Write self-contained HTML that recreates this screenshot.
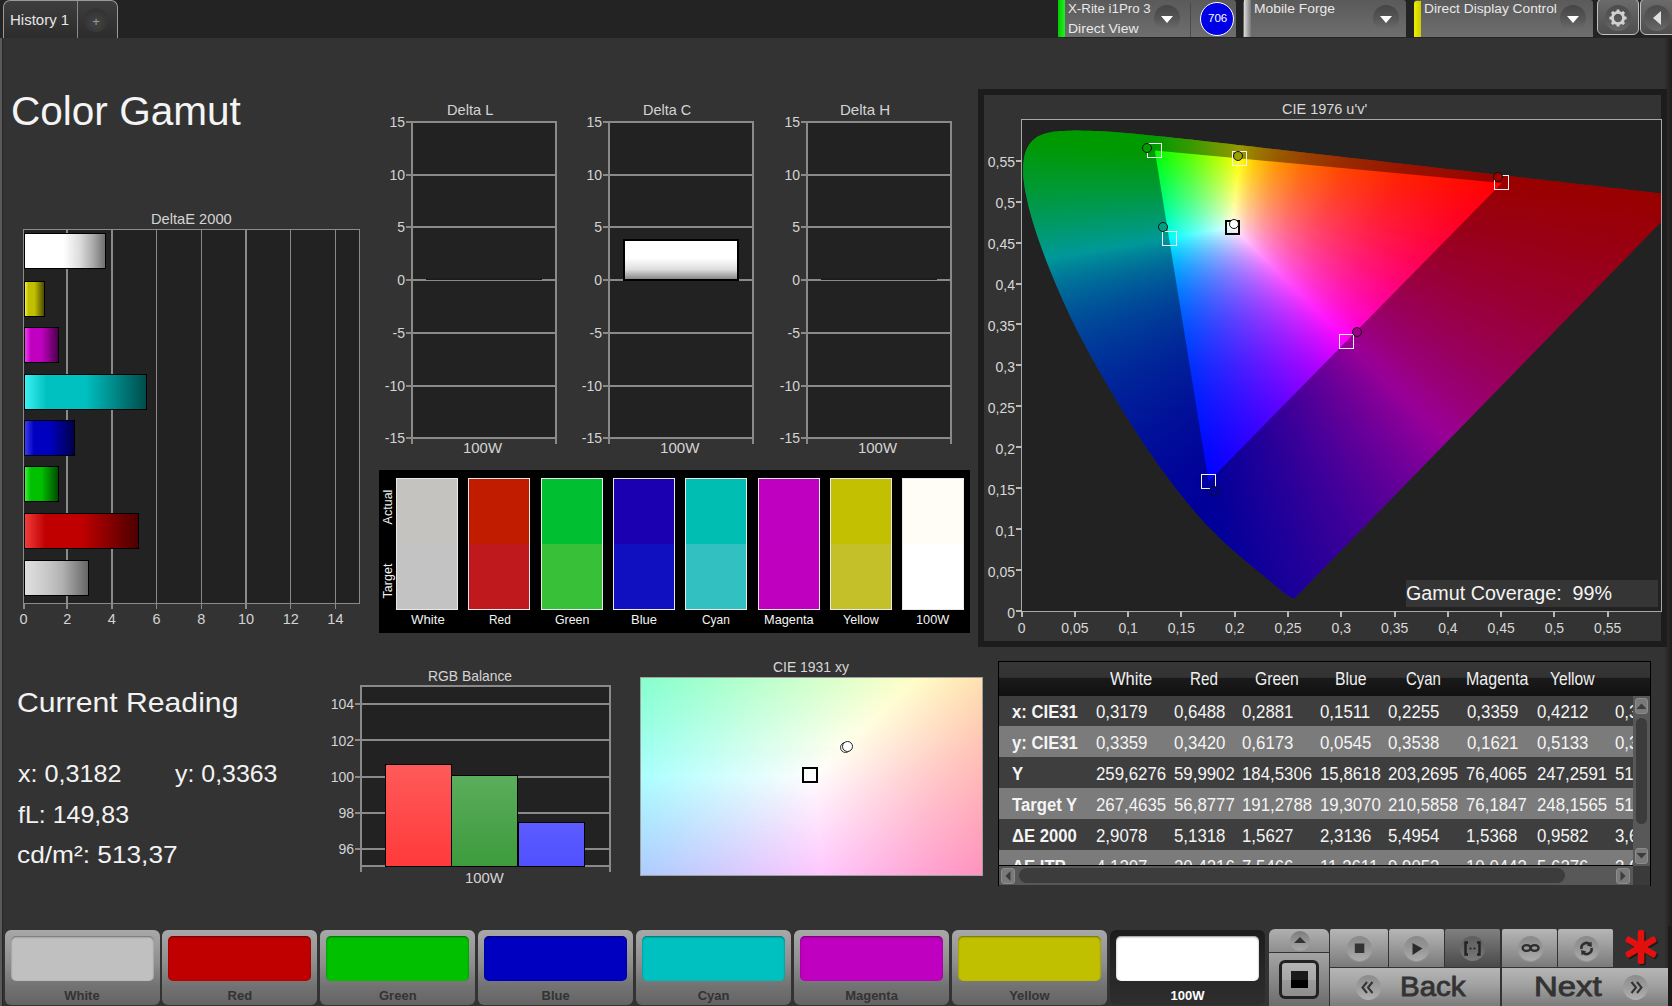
<!DOCTYPE html><html><head><meta charset="utf-8"><style>
*{margin:0;padding:0;box-sizing:border-box}
html,body{width:1672px;height:1006px;overflow:hidden;background:#333;font-family:"Liberation Sans",sans-serif;color:#e8e8e8}
.a{position:absolute}
.t{position:absolute;white-space:nowrap;line-height:1}

.drop{position:absolute;border-radius:3px 3px 0 0;background:linear-gradient(#5a5a5a,#6e6e6e)}
.dd{position:absolute;width:26px;height:26px;border-radius:50%;background:linear-gradient(#454545,#575757 55%,#6e6e6e)}
.dd:after{content:"";position:absolute;left:7px;top:11px;border-left:6px solid transparent;border-right:6px solid transparent;border-top:7px solid #fff}

.bar{position:absolute;border:2px solid #000}

.btn{position:absolute;top:930px;height:75px;border-radius:6px;background:linear-gradient(#a8a8a8 0%,#8e8e8e 45%,#727272 75%,#646464 100%)}
.sw{position:absolute;left:6px;top:6px;right:6px;height:45px;border-radius:5px;box-shadow:inset 0 1px 2px rgba(0,0,0,.45)}
.bl{position:absolute;left:0;right:0;top:59px;text-align:center;font-size:13px;font-weight:bold;color:#333;line-height:1}

.cb{position:absolute;background:linear-gradient(#b4b4b4 0%,#9a9a9a 50%,#7c7c7c 100%)}
.ci{position:absolute;width:25px;height:25px;border-radius:50%;background:linear-gradient(#8a8a8a 0%,#959595 45%,#acacac 100%);box-shadow:0 1px 1px rgba(255,255,255,.15)}
</style></head><body><div class="a" style="left:0px;top:0px;width:1672px;height:38px;background:#232323"></div><div class="a" style="left:0px;top:38px;width:3px;height:968px;background:linear-gradient(90deg,#5a5a5a 0,#5a5a5a 2.5px,#272727 2.5px)"></div><div class="a" style="left:1664px;top:38px;width:8px;height:968px;background:linear-gradient(90deg,rgba(0,0,0,0),rgba(0,0,0,.45))"></div><div class="a" style="left:3px;top:0px;width:115px;height:38px;background:linear-gradient(#3e3e3e,#2c2c2c);border:1px solid #9a9a9a;border-bottom:none;border-radius:7px 7px 0 0"></div><div class="a" style="left:76.5px;top:1px;width:1px;height:37px;background:#8a8a8a"></div><div class="t" style="left:10.27px;top:12.81px;font-size:14.7px;color:#e6e6e6;transform:scaleX(1.0215);transform-origin:0 0;">History 1</div><div class="a" style="left:84px;top:8px;width:24px;height:24px;border-radius:50%;background:radial-gradient(circle at 50% 60%,#444,#333 70%,#3a3a3a)"></div><div class="t" style="top:14.95px;font-size:13px;color:#9a9a9a;left:-304.00px;width:800px;text-align:center;">+</div><div class="drop" style="left:1058px;top:0;width:178px;height:37px"></div><div class="a" style="left:1058px;top:0px;width:7px;height:37px;background:linear-gradient(90deg,#0c0,#2e2)"></div><div class="a" style="left:1190px;top:3px;width:1px;height:34px;background:#4a4a4a"></div><div class="t" style="left:1068.41px;top:3.43px;font-size:12.2px;color:#e8e8e8;transform:scaleX(1.0901);transform-origin:0 0;">X-Rite i1Pro 3</div><div class="t" style="left:1067.95px;top:22.53px;font-size:12.2px;color:#e8e8e8;transform:scaleX(1.1490);transform-origin:0 0;">Direct View</div><div class="dd" style="left:1154px;top:5px"></div><div class="a" style="left:1200px;top:2px;width:34px;height:34px;border-radius:50%;background:#0000e6;border:1px solid #fff"></div><div class="t" style="left:1207.80px;top:13.42px;font-size:10.8px;color:#fff;transform:scaleX(1.0720);transform-origin:0 0;">706</div><div class="drop" style="left:1243px;top:0;width:163px;height:37px"></div><div class="a" style="left:1244px;top:0px;width:7px;height:37px;background:linear-gradient(90deg,#ddd,#777)"></div><div class="t" style="left:1254.16px;top:3.43px;font-size:12.2px;color:#e8e8e8;transform:scaleX(1.1398);transform-origin:0 0;">Mobile Forge</div><div class="dd" style="left:1373px;top:5px"></div><div class="drop" style="left:1414px;top:0;width:179px;height:37px"></div><div class="a" style="left:1414px;top:1px;width:7px;height:36px;background:linear-gradient(90deg,#ee0,#cc0);border-radius:3px 0 0 0"></div><div class="t" style="left:1424.27px;top:3.23px;font-size:12.2px;color:#e8e8e8;transform:scaleX(1.1277);transform-origin:0 0;">Direct Display Control</div><div class="dd" style="left:1560px;top:5px"></div><div class="a" style="left:1597px;top:-2px;width:42px;height:37px;background:linear-gradient(#6c6c6c,#4e4e4e);border:1.5px solid #c0c0c0;border-radius:6px"></div><div class="a" style="left:1605px;top:5px;width:26px;height:26px;border-radius:50%;background:linear-gradient(#4c4c4c,#575757 55%,#686868)"></div><svg class="a" style="left:1608px;top:8px" width="20" height="20" viewBox="-10 -10 20 20"><g fill="#d0d0d0"><rect x="-1.5" y="-8.6" width="3" height="4" rx="0.6" transform="rotate(0)"/><rect x="-1.5" y="-8.6" width="3" height="4" rx="0.6" transform="rotate(45)"/><rect x="-1.5" y="-8.6" width="3" height="4" rx="0.6" transform="rotate(90)"/><rect x="-1.5" y="-8.6" width="3" height="4" rx="0.6" transform="rotate(135)"/><rect x="-1.5" y="-8.6" width="3" height="4" rx="0.6" transform="rotate(180)"/><rect x="-1.5" y="-8.6" width="3" height="4" rx="0.6" transform="rotate(225)"/><rect x="-1.5" y="-8.6" width="3" height="4" rx="0.6" transform="rotate(270)"/><rect x="-1.5" y="-8.6" width="3" height="4" rx="0.6" transform="rotate(315)"/></g><circle r="5.6" fill="none" stroke="#d0d0d0" stroke-width="2.8"/></svg><div class="a" style="left:1640px;top:-2px;width:42px;height:37px;background:linear-gradient(#6c6c6c,#4e4e4e);border:1.5px solid #c0c0c0;border-radius:6px"></div><div class="a" style="left:1644px;top:5px;width:26px;height:26px;border-radius:50%;background:linear-gradient(#4c4c4c,#575757 55%,#686868)"></div><svg class="a" style="left:1650px;top:10px" width="14" height="16"><path d="M11 1 L3 8 L11 15 Z" fill="#e0e0e0"/></svg><div class="t" style="left:10.87px;top:90.70px;font-size:40px;color:#f4f4f4;transform:scaleX(1.0134);transform-origin:0 0;">Color Gamut</div><div class="t" style="left:150.80px;top:212.48px;font-size:14.5px;color:#d4d4d4;transform:scaleX(1.0119);transform-origin:0 0;">DeltaE 2000</div><div class="a" style="left:23px;top:229px;width:337px;height:375px;background:#222222;border:1.5px solid #8a8a8a"></div><div class="a" style="left:66.45px;top:230px;width:1.5px;height:373px;background:#8a8a8a"></div><div class="t" style="top:611.67px;font-size:14.5px;color:#d4d4d4;left:-332.80px;width:800px;text-align:center;">2</div><div class="a" style="left:111.15px;top:230px;width:1.5px;height:373px;background:#8a8a8a"></div><div class="t" style="top:611.67px;font-size:14.5px;color:#d4d4d4;left:-288.10px;width:800px;text-align:center;">4</div><div class="a" style="left:155.85px;top:230px;width:1.5px;height:373px;background:#8a8a8a"></div><div class="t" style="top:611.67px;font-size:14.5px;color:#d4d4d4;left:-243.40px;width:800px;text-align:center;">6</div><div class="a" style="left:200.55px;top:230px;width:1.5px;height:373px;background:#8a8a8a"></div><div class="t" style="top:611.67px;font-size:14.5px;color:#d4d4d4;left:-198.70px;width:800px;text-align:center;">8</div><div class="a" style="left:245.25px;top:230px;width:1.5px;height:373px;background:#8a8a8a"></div><div class="t" style="top:611.67px;font-size:14.5px;color:#d4d4d4;left:-154.00px;width:800px;text-align:center;">10</div><div class="a" style="left:289.95px;top:230px;width:1.5px;height:373px;background:#8a8a8a"></div><div class="t" style="top:611.67px;font-size:14.5px;color:#d4d4d4;left:-109.30px;width:800px;text-align:center;">12</div><div class="a" style="left:334.65px;top:230px;width:1.5px;height:373px;background:#8a8a8a"></div><div class="t" style="top:611.67px;font-size:14.5px;color:#d4d4d4;left:-64.60px;width:800px;text-align:center;">14</div><div class="t" style="top:611.67px;font-size:14.5px;color:#d4d4d4;left:-376.50px;width:800px;text-align:center;">0</div><div class="a" style="left:23px;top:604px;width:1.5px;height:5px;background:#8a8a8a"></div><div class="a" style="left:66.45px;top:604px;width:1.5px;height:5px;background:#8a8a8a"></div><div class="a" style="left:111.15px;top:604px;width:1.5px;height:5px;background:#8a8a8a"></div><div class="a" style="left:155.85px;top:604px;width:1.5px;height:5px;background:#8a8a8a"></div><div class="a" style="left:200.55px;top:604px;width:1.5px;height:5px;background:#8a8a8a"></div><div class="a" style="left:245.25px;top:604px;width:1.5px;height:5px;background:#8a8a8a"></div><div class="a" style="left:289.95px;top:604px;width:1.5px;height:5px;background:#8a8a8a"></div><div class="a" style="left:334.65px;top:604px;width:1.5px;height:5px;background:#8a8a8a"></div><div class="bar" style="left:24px;top:233px;width:81.5px;height:36px;background:linear-gradient(90deg,#fff 0%,#fff 48%,#ddd 68%,#aaa 85%,#707070 100%);border-width:1.5px"></div><div class="bar" style="left:24px;top:281px;width:20.5px;height:36px;background:linear-gradient(90deg,#f1f13c 0%,#c0c000 18%,#c0c000 50%,#4c4c00 100%);border-width:1.5px"></div><div class="bar" style="left:24px;top:327px;width:34.5px;height:36px;background:linear-gradient(90deg,#f13cf1 0%,#c000c0 18%,#c000c0 50%,#4c004c 100%);border-width:1.5px"></div><div class="bar" style="left:24px;top:374px;width:122.5px;height:36px;background:linear-gradient(90deg,#3cf1f1 0%,#00c0c0 18%,#00c0c0 50%,#004c4c 100%);border-width:1.5px"></div><div class="bar" style="left:24px;top:420px;width:51.0px;height:36px;background:linear-gradient(90deg,#3c3cf1 0%,#0000c0 18%,#0000c0 50%,#00004c 100%);border-width:1.5px"></div><div class="bar" style="left:24px;top:466px;width:34.5px;height:36px;background:linear-gradient(90deg,#3cf13c 0%,#00c000 18%,#00c000 50%,#004c00 100%);border-width:1.5px"></div><div class="bar" style="left:24px;top:513px;width:114.5px;height:36px;background:linear-gradient(90deg,#f13c3c 0%,#c00000 18%,#c00000 50%,#4c0000 100%);border-width:1.5px"></div><div class="bar" style="left:24px;top:560px;width:64.5px;height:36px;background:linear-gradient(90deg,#e0e0e0 0%,#c4c4c4 40%,#b0b0b0 60%,#666 100%);border-width:1.5px"></div><div class="t" style="left:447.00px;top:103.38px;font-size:14.5px;color:#d4d4d4;transform:scaleX(1.0072);transform-origin:0 0;">Delta L</div><div class="a" style="left:411px;top:121px;width:146px;height:318px;background:#222222;border:2px solid #8a8a8a"></div><div class="a" style="left:406px;top:121px;width:5px;height:2px;background:#8a8a8a"></div><div class="t" style="top:114.60px;font-size:14px;color:#d4d4d4;left:-395.00px;width:800px;text-align:right;">15</div><div class="a" style="left:413px;top:174px;width:142px;height:2px;background:#8a8a8a"></div><div class="a" style="left:406px;top:174px;width:5px;height:2px;background:#8a8a8a"></div><div class="t" style="top:168.10px;font-size:14px;color:#d4d4d4;left:-395.00px;width:800px;text-align:right;">10</div><div class="a" style="left:413px;top:226px;width:142px;height:2px;background:#8a8a8a"></div><div class="a" style="left:406px;top:226px;width:5px;height:2px;background:#8a8a8a"></div><div class="t" style="top:219.90px;font-size:14px;color:#d4d4d4;left:-395.00px;width:800px;text-align:right;">5</div><div class="a" style="left:413px;top:279px;width:142px;height:2px;background:#8a8a8a"></div><div class="a" style="left:406px;top:279px;width:5px;height:2px;background:#8a8a8a"></div><div class="t" style="top:272.70px;font-size:14px;color:#d4d4d4;left:-395.00px;width:800px;text-align:right;">0</div><div class="a" style="left:413px;top:332px;width:142px;height:2px;background:#8a8a8a"></div><div class="a" style="left:406px;top:332px;width:5px;height:2px;background:#8a8a8a"></div><div class="t" style="top:326.10px;font-size:14px;color:#d4d4d4;left:-395.00px;width:800px;text-align:right;">-5</div><div class="a" style="left:413px;top:385px;width:142px;height:2px;background:#8a8a8a"></div><div class="a" style="left:406px;top:385px;width:5px;height:2px;background:#8a8a8a"></div><div class="t" style="top:379.30px;font-size:14px;color:#d4d4d4;left:-395.00px;width:800px;text-align:right;">-10</div><div class="a" style="left:406px;top:437px;width:5px;height:2px;background:#8a8a8a"></div><div class="t" style="top:430.70px;font-size:14px;color:#d4d4d4;left:-395.00px;width:800px;text-align:right;">-15</div><div class="a" style="left:411px;top:439px;width:2px;height:5px;background:#8a8a8a"></div><div class="a" style="left:555px;top:439px;width:2px;height:5px;background:#8a8a8a"></div><div class="t" style="left:463.27px;top:441.07px;font-size:14.5px;color:#d4d4d4;transform:scaleX(1.0296);transform-origin:0 0;">100W</div><div class="a" style="left:426px;top:278px;width:116px;height:2px;background:#1c1c1c"></div><div class="t" style="left:643.42px;top:103.38px;font-size:14.5px;color:#d4d4d4;transform:scaleX(0.9956);transform-origin:0 0;">Delta C</div><div class="a" style="left:608px;top:121px;width:146px;height:318px;background:#222222;border:2px solid #8a8a8a"></div><div class="a" style="left:603px;top:121px;width:5px;height:2px;background:#8a8a8a"></div><div class="t" style="top:114.60px;font-size:14px;color:#d4d4d4;left:-198.00px;width:800px;text-align:right;">15</div><div class="a" style="left:610px;top:174px;width:142px;height:2px;background:#8a8a8a"></div><div class="a" style="left:603px;top:174px;width:5px;height:2px;background:#8a8a8a"></div><div class="t" style="top:168.10px;font-size:14px;color:#d4d4d4;left:-198.00px;width:800px;text-align:right;">10</div><div class="a" style="left:610px;top:226px;width:142px;height:2px;background:#8a8a8a"></div><div class="a" style="left:603px;top:226px;width:5px;height:2px;background:#8a8a8a"></div><div class="t" style="top:219.90px;font-size:14px;color:#d4d4d4;left:-198.00px;width:800px;text-align:right;">5</div><div class="a" style="left:610px;top:279px;width:142px;height:2px;background:#8a8a8a"></div><div class="a" style="left:603px;top:279px;width:5px;height:2px;background:#8a8a8a"></div><div class="t" style="top:272.70px;font-size:14px;color:#d4d4d4;left:-198.00px;width:800px;text-align:right;">0</div><div class="a" style="left:610px;top:332px;width:142px;height:2px;background:#8a8a8a"></div><div class="a" style="left:603px;top:332px;width:5px;height:2px;background:#8a8a8a"></div><div class="t" style="top:326.10px;font-size:14px;color:#d4d4d4;left:-198.00px;width:800px;text-align:right;">-5</div><div class="a" style="left:610px;top:385px;width:142px;height:2px;background:#8a8a8a"></div><div class="a" style="left:603px;top:385px;width:5px;height:2px;background:#8a8a8a"></div><div class="t" style="top:379.30px;font-size:14px;color:#d4d4d4;left:-198.00px;width:800px;text-align:right;">-10</div><div class="a" style="left:603px;top:437px;width:5px;height:2px;background:#8a8a8a"></div><div class="t" style="top:430.70px;font-size:14px;color:#d4d4d4;left:-198.00px;width:800px;text-align:right;">-15</div><div class="a" style="left:608px;top:439px;width:2px;height:5px;background:#8a8a8a"></div><div class="a" style="left:752px;top:439px;width:2px;height:5px;background:#8a8a8a"></div><div class="t" style="left:660.45px;top:441.07px;font-size:14.5px;color:#d4d4d4;transform:scaleX(1.0405);transform-origin:0 0;">100W</div><div class="a" style="left:623px;top:239px;width:116px;height:42px;border:2px solid #000;background:linear-gradient(#fff 0%,#fff 45%,#ddd 75%,#888 100%)"></div><div class="t" style="left:839.77px;top:103.38px;font-size:14.5px;color:#d4d4d4;transform:scaleX(1.0377);transform-origin:0 0;">Delta H</div><div class="a" style="left:806px;top:121px;width:146px;height:318px;background:#222222;border:2px solid #8a8a8a"></div><div class="a" style="left:801px;top:121px;width:5px;height:2px;background:#8a8a8a"></div><div class="t" style="top:114.60px;font-size:14px;color:#d4d4d4;left:0.00px;width:800px;text-align:right;">15</div><div class="a" style="left:808px;top:174px;width:142px;height:2px;background:#8a8a8a"></div><div class="a" style="left:801px;top:174px;width:5px;height:2px;background:#8a8a8a"></div><div class="t" style="top:168.10px;font-size:14px;color:#d4d4d4;left:0.00px;width:800px;text-align:right;">10</div><div class="a" style="left:808px;top:226px;width:142px;height:2px;background:#8a8a8a"></div><div class="a" style="left:801px;top:226px;width:5px;height:2px;background:#8a8a8a"></div><div class="t" style="top:219.90px;font-size:14px;color:#d4d4d4;left:0.00px;width:800px;text-align:right;">5</div><div class="a" style="left:808px;top:279px;width:142px;height:2px;background:#8a8a8a"></div><div class="a" style="left:801px;top:279px;width:5px;height:2px;background:#8a8a8a"></div><div class="t" style="top:272.70px;font-size:14px;color:#d4d4d4;left:0.00px;width:800px;text-align:right;">0</div><div class="a" style="left:808px;top:332px;width:142px;height:2px;background:#8a8a8a"></div><div class="a" style="left:801px;top:332px;width:5px;height:2px;background:#8a8a8a"></div><div class="t" style="top:326.10px;font-size:14px;color:#d4d4d4;left:0.00px;width:800px;text-align:right;">-5</div><div class="a" style="left:808px;top:385px;width:142px;height:2px;background:#8a8a8a"></div><div class="a" style="left:801px;top:385px;width:5px;height:2px;background:#8a8a8a"></div><div class="t" style="top:379.30px;font-size:14px;color:#d4d4d4;left:0.00px;width:800px;text-align:right;">-10</div><div class="a" style="left:801px;top:437px;width:5px;height:2px;background:#8a8a8a"></div><div class="t" style="top:430.70px;font-size:14px;color:#d4d4d4;left:0.00px;width:800px;text-align:right;">-15</div><div class="a" style="left:806px;top:439px;width:2px;height:5px;background:#8a8a8a"></div><div class="a" style="left:950px;top:439px;width:2px;height:5px;background:#8a8a8a"></div><div class="t" style="left:858.07px;top:441.07px;font-size:14.5px;color:#d4d4d4;transform:scaleX(1.0296);transform-origin:0 0;">100W</div><div class="a" style="left:821px;top:278px;width:116px;height:2px;background:#1c1c1c"></div><div class="a" style="left:379px;top:470px;width:591px;height:163px;background:#000"></div><div class="a" style="left:396.0px;top:478px;width:62px;height:132px;border:1px solid #e8e8e8;background:linear-gradient(#c4c3bf 0,#c4c3bf 50%,#c3c3c3 50%,#c3c3c3 100%)"></div><div class="t" style="left:410.85px;top:613.42px;font-size:13.5px;color:#f4f4f4;transform:scaleX(0.9776);transform-origin:0 0;">White</div><div class="a" style="left:468.3px;top:478px;width:62px;height:132px;border:1px solid #e8e8e8;background:linear-gradient(#c21c00 0,#c21c00 50%,#bf191e 50%,#bf191e 100%)"></div><div class="t" style="left:488.73px;top:613.42px;font-size:13.5px;color:#f4f4f4;transform:scaleX(0.8777);transform-origin:0 0;">Red</div><div class="a" style="left:540.6px;top:478px;width:62px;height:132px;border:1px solid #e8e8e8;background:linear-gradient(#00bf30 0,#00bf30 50%,#39c039 50%,#39c039 100%)"></div><div class="t" style="left:554.68px;top:613.42px;font-size:13.5px;color:#f4f4f4;transform:scaleX(0.9141);transform-origin:0 0;">Green</div><div class="a" style="left:612.9px;top:478px;width:62px;height:132px;border:1px solid #e8e8e8;background:linear-gradient(#1a00b0 0,#1a00b0 50%,#1010c0 50%,#1010c0 100%)"></div><div class="t" style="left:630.93px;top:613.42px;font-size:13.5px;color:#f4f4f4;transform:scaleX(0.9634);transform-origin:0 0;">Blue</div><div class="a" style="left:685.2px;top:478px;width:62px;height:132px;border:1px solid #e8e8e8;background:linear-gradient(#00bfb2 0,#00bfb2 50%,#33c0c0 50%,#33c0c0 100%)"></div><div class="t" style="left:702.41px;top:613.42px;font-size:13.5px;color:#f4f4f4;transform:scaleX(0.8809);transform-origin:0 0;">Cyan</div><div class="a" style="left:757.5px;top:478px;width:62px;height:132px;border:1px solid #e8e8e8;background:linear-gradient(#c000c0 0,#c000c0 50%,#bf00bf 50%,#bf00bf 100%)"></div><div class="t" style="left:763.65px;top:613.42px;font-size:13.5px;color:#f4f4f4;transform:scaleX(0.9449);transform-origin:0 0;">Magenta</div><div class="a" style="left:829.8px;top:478px;width:62px;height:132px;border:1px solid #e8e8e8;background:linear-gradient(#c2c000 0,#c2c000 50%,#c4c02a 50%,#c4c02a 100%)"></div><div class="t" style="left:843.33px;top:613.42px;font-size:13.5px;color:#f4f4f4;transform:scaleX(0.9253);transform-origin:0 0;">Yellow</div><div class="a" style="left:902.1px;top:478px;width:62px;height:132px;border:1px solid #e8e8e8;background:linear-gradient(#fffdf5 0,#fffdf5 50%,#ffffff 50%,#ffffff 100%)"></div><div class="t" style="left:916.23px;top:613.42px;font-size:13.5px;color:#f4f4f4;transform:scaleX(0.9420);transform-origin:0 0;">100W</div><div class="t" style="left:288px;top:500.5px;width:200px;height:12px;font-size:12.5px;text-align:center;color:#f0f0f0;transform:rotate(-90deg)">Actual</div><div class="t" style="left:288px;top:575px;width:200px;height:12px;font-size:12.5px;text-align:center;color:#f0f0f0;transform:rotate(-90deg)">Target</div><div class="t" style="left:17.49px;top:688.38px;font-size:28.5px;color:#f2f2f2;transform:scaleX(1.0588);transform-origin:0 0;">Current Reading</div><div class="t" style="left:17.70px;top:761.77px;font-size:24.5px;color:#f2f2f2;transform:scaleX(1.0275);transform-origin:0 0;">x: 0,3182</div><div class="t" style="left:174.95px;top:761.77px;font-size:24.5px;color:#f2f2f2;transform:scaleX(1.0164);transform-origin:0 0;">y: 0,3363</div><div class="t" style="left:18.05px;top:802.88px;font-size:24.5px;color:#f2f2f2;transform:scaleX(1.0190);transform-origin:0 0;">fL: 149,83</div><div class="t" style="left:17.30px;top:843.07px;font-size:24.5px;color:#f2f2f2;transform:scaleX(1.0723);transform-origin:0 0;">cd/m²: 513,37</div><div class="t" style="left:428.16px;top:668.67px;font-size:14.5px;color:#d4d4d4;transform:scaleX(0.9568);transform-origin:0 0;">RGB Balance</div><div class="a" style="left:360px;top:685px;width:251px;height:182px;background:#222222;border:2px solid #8a8a8a"></div><div class="a" style="left:362px;top:703px;width:247px;height:2px;background:#8a8a8a"></div><div class="a" style="left:355px;top:703px;width:5px;height:2px;background:#8a8a8a"></div><div class="t" style="top:697.20px;font-size:14px;color:#d4d4d4;left:-446.00px;width:800px;text-align:right;">104</div><div class="a" style="left:362px;top:739px;width:247px;height:2px;background:#8a8a8a"></div><div class="a" style="left:355px;top:739px;width:5px;height:2px;background:#8a8a8a"></div><div class="t" style="top:733.50px;font-size:14px;color:#d4d4d4;left:-446.00px;width:800px;text-align:right;">102</div><div class="a" style="left:362px;top:776px;width:247px;height:2px;background:#8a8a8a"></div><div class="a" style="left:355px;top:776px;width:5px;height:2px;background:#8a8a8a"></div><div class="t" style="top:769.80px;font-size:14px;color:#d4d4d4;left:-446.00px;width:800px;text-align:right;">100</div><div class="a" style="left:362px;top:812px;width:247px;height:2px;background:#8a8a8a"></div><div class="a" style="left:355px;top:812px;width:5px;height:2px;background:#8a8a8a"></div><div class="t" style="top:806.10px;font-size:14px;color:#d4d4d4;left:-446.00px;width:800px;text-align:right;">98</div><div class="a" style="left:362px;top:848px;width:247px;height:2px;background:#8a8a8a"></div><div class="a" style="left:355px;top:848px;width:5px;height:2px;background:#8a8a8a"></div><div class="t" style="top:842.40px;font-size:14px;color:#d4d4d4;left:-446.00px;width:800px;text-align:right;">96</div><div class="a" style="left:360px;top:867px;width:2px;height:5px;background:#8a8a8a"></div><div class="a" style="left:609px;top:867px;width:2px;height:5px;background:#8a8a8a"></div><div class="t" style="left:465.27px;top:870.67px;font-size:14.5px;color:#d4d4d4;transform:scaleX(1.0241);transform-origin:0 0;">100W</div><div class="bar" style="left:384.5px;top:763.5px;width:67px;height:103px;border-width:1.5px;background:linear-gradient(#ff5a5a,#ff3a3a)"></div><div class="bar" style="left:450.5px;top:774.5px;width:67px;height:92px;border-width:1.5px;background:linear-gradient(#5bad5b,#3d9b3d)"></div><div class="bar" style="left:517.5px;top:821.5px;width:67px;height:45px;border-width:1.5px;background:linear-gradient(#5c5cff,#5050ff)"></div><div class="a" style="left:978px;top:89px;width:689px;height:558px;border:6px solid #1c1c1c;background:#333"></div><div class="t" style="left:1282.08px;top:101.88px;font-size:14.5px;color:#d8d8d8;transform:scaleX(0.9980);transform-origin:0 0;">CIE 1976 u'v'</div><svg class="a" style="left:1022px;top:120px" width="639" height="491" shape-rendering="crispEdges"><defs><linearGradient id="g0" gradientUnits="userSpaceOnUse" x1="0" x2="639"><stop offset="0.0008" stop-color="#00ff00"/><stop offset="0.2011" stop-color="#01ff00"/><stop offset="0.2637" stop-color="#60ff00"/><stop offset="0.3169" stop-color="#c3ff00"/><stop offset="0.3451" stop-color="#ffff00"/><stop offset="0.3732" stop-color="#ffc900"/><stop offset="0.4108" stop-color="#ff9800"/><stop offset="0.4624" stop-color="#ff6c00"/><stop offset="0.5360" stop-color="#ff4400"/><stop offset="0.6455" stop-color="#ff2100"/><stop offset="0.8208" stop-color="#ff0300"/><stop offset="0.9710" stop-color="#ff0000"/><stop offset="0.9992" stop-color="#ff0000"/></linearGradient><linearGradient id="g1" gradientUnits="userSpaceOnUse" x1="0" x2="639"><stop offset="0.0008" stop-color="#00ff00"/><stop offset="0.2027" stop-color="#02ff00"/><stop offset="0.2653" stop-color="#62ff00"/><stop offset="0.3185" stop-color="#c6ff00"/><stop offset="0.3451" stop-color="#fffe00"/><stop offset="0.3732" stop-color="#ffc900"/><stop offset="0.4108" stop-color="#ff9800"/><stop offset="0.4624" stop-color="#ff6b00"/><stop offset="0.5360" stop-color="#ff4300"/><stop offset="0.6455" stop-color="#ff2100"/><stop offset="0.8208" stop-color="#ff0300"/><stop offset="0.9992" stop-color="#ff0000"/></linearGradient><linearGradient id="g2" gradientUnits="userSpaceOnUse" x1="0" x2="639"><stop offset="0.0008" stop-color="#00ff00"/><stop offset="0.2027" stop-color="#02ff00"/><stop offset="0.2653" stop-color="#62ff00"/><stop offset="0.3185" stop-color="#c6ff00"/><stop offset="0.3451" stop-color="#fffd00"/><stop offset="0.3732" stop-color="#ffc800"/><stop offset="0.4108" stop-color="#ff9700"/><stop offset="0.4624" stop-color="#ff6a00"/><stop offset="0.5360" stop-color="#ff4300"/><stop offset="0.6455" stop-color="#ff2000"/><stop offset="0.8208" stop-color="#ff0200"/><stop offset="0.9992" stop-color="#ff0000"/></linearGradient><linearGradient id="g3" gradientUnits="userSpaceOnUse" x1="0" x2="639"><stop offset="0.0008" stop-color="#00ff00"/><stop offset="0.2027" stop-color="#01ff00"/><stop offset="0.2637" stop-color="#5fff00"/><stop offset="0.3169" stop-color="#c3ff00"/><stop offset="0.3451" stop-color="#fffd00"/><stop offset="0.3732" stop-color="#ffc700"/><stop offset="0.4108" stop-color="#ff9600"/><stop offset="0.4624" stop-color="#ff6a00"/><stop offset="0.5360" stop-color="#ff4200"/><stop offset="0.6455" stop-color="#ff2000"/><stop offset="0.8208" stop-color="#ff0200"/><stop offset="0.9992" stop-color="#ff0000"/></linearGradient><linearGradient id="g4" gradientUnits="userSpaceOnUse" x1="0" x2="639"><stop offset="0.0008" stop-color="#00ff00"/><stop offset="0.2027" stop-color="#00ff00"/><stop offset="0.2637" stop-color="#5fff00"/><stop offset="0.3169" stop-color="#c4ff00"/><stop offset="0.3435" stop-color="#feff00"/><stop offset="0.3732" stop-color="#ffc600"/><stop offset="0.4108" stop-color="#ff9500"/><stop offset="0.4624" stop-color="#ff6900"/><stop offset="0.5360" stop-color="#ff4200"/><stop offset="0.6471" stop-color="#ff1f00"/><stop offset="0.8239" stop-color="#ff0100"/><stop offset="0.9992" stop-color="#ff0000"/></linearGradient><linearGradient id="g5" gradientUnits="userSpaceOnUse" x1="0" x2="639"><stop offset="0.0008" stop-color="#00ff00"/><stop offset="0.2042" stop-color="#02ff00"/><stop offset="0.2653" stop-color="#61ff00"/><stop offset="0.3169" stop-color="#c4ff00"/><stop offset="0.3435" stop-color="#ffff00"/><stop offset="0.3717" stop-color="#ffc800"/><stop offset="0.4092" stop-color="#ff9600"/><stop offset="0.4609" stop-color="#ff6a00"/><stop offset="0.5344" stop-color="#ff4200"/><stop offset="0.6440" stop-color="#ff1f00"/><stop offset="0.8192" stop-color="#ff0100"/><stop offset="0.9992" stop-color="#ff0000"/></linearGradient><linearGradient id="g6" gradientUnits="userSpaceOnUse" x1="0" x2="639"><stop offset="0.0008" stop-color="#00ff00"/><stop offset="0.2042" stop-color="#01ff00"/><stop offset="0.2653" stop-color="#61ff00"/><stop offset="0.3169" stop-color="#c4ff00"/><stop offset="0.3435" stop-color="#fffe00"/><stop offset="0.3701" stop-color="#ffca00"/><stop offset="0.4061" stop-color="#ff9900"/><stop offset="0.4562" stop-color="#ff6c00"/><stop offset="0.5266" stop-color="#ff4500"/><stop offset="0.6315" stop-color="#ff2200"/><stop offset="0.7989" stop-color="#ff0400"/><stop offset="0.8959" stop-color="#ff0000"/><stop offset="0.9992" stop-color="#ff0000"/></linearGradient><linearGradient id="g7" gradientUnits="userSpaceOnUse" x1="0" x2="639"><stop offset="0.0008" stop-color="#00ff00"/><stop offset="0.2042" stop-color="#00ff00"/><stop offset="0.2653" stop-color="#61ff00"/><stop offset="0.3169" stop-color="#c5ff00"/><stop offset="0.3435" stop-color="#fffe00"/><stop offset="0.3701" stop-color="#ffc900"/><stop offset="0.4061" stop-color="#ff9800"/><stop offset="0.4562" stop-color="#ff6c00"/><stop offset="0.5266" stop-color="#ff4400"/><stop offset="0.6330" stop-color="#ff2100"/><stop offset="0.8020" stop-color="#ff0300"/><stop offset="0.9992" stop-color="#ff0000"/></linearGradient><linearGradient id="g8" gradientUnits="userSpaceOnUse" x1="0" x2="639"><stop offset="0.0008" stop-color="#00ff00"/><stop offset="0.2058" stop-color="#02ff00"/><stop offset="0.2653" stop-color="#61ff00"/><stop offset="0.3169" stop-color="#c5ff00"/><stop offset="0.3435" stop-color="#fffd00"/><stop offset="0.3701" stop-color="#ffc900"/><stop offset="0.4061" stop-color="#ff9800"/><stop offset="0.4562" stop-color="#ff6b00"/><stop offset="0.5266" stop-color="#ff4300"/><stop offset="0.6330" stop-color="#ff2000"/><stop offset="0.8020" stop-color="#ff0200"/><stop offset="0.9992" stop-color="#ff0000"/></linearGradient><linearGradient id="g9" gradientUnits="userSpaceOnUse" x1="0" x2="639"><stop offset="0.0008" stop-color="#00ff01"/><stop offset="0.2058" stop-color="#01ff00"/><stop offset="0.2653" stop-color="#60ff00"/><stop offset="0.3169" stop-color="#c5ff00"/><stop offset="0.3419" stop-color="#feff00"/><stop offset="0.3717" stop-color="#ffc500"/><stop offset="0.4077" stop-color="#ff9500"/><stop offset="0.4577" stop-color="#ff6900"/><stop offset="0.5297" stop-color="#ff4100"/><stop offset="0.6377" stop-color="#ff1f00"/><stop offset="0.8099" stop-color="#ff0100"/><stop offset="0.9992" stop-color="#ff0000"/></linearGradient><linearGradient id="g10" gradientUnits="userSpaceOnUse" x1="0" x2="639"><stop offset="0.0008" stop-color="#00ff05"/><stop offset="0.1088" stop-color="#00ff00"/><stop offset="0.2058" stop-color="#01ff00"/><stop offset="0.2653" stop-color="#60ff00"/><stop offset="0.3169" stop-color="#c6ff00"/><stop offset="0.3419" stop-color="#ffff00"/><stop offset="0.3685" stop-color="#ffca00"/><stop offset="0.4045" stop-color="#ff9800"/><stop offset="0.4531" stop-color="#ff6c00"/><stop offset="0.5219" stop-color="#ff4400"/><stop offset="0.6252" stop-color="#ff2100"/><stop offset="0.7895" stop-color="#ff0300"/><stop offset="0.8991" stop-color="#ff0000"/><stop offset="0.9992" stop-color="#ff0000"/></linearGradient><linearGradient id="g11" gradientUnits="userSpaceOnUse" x1="0" x2="639"><stop offset="0.0008" stop-color="#00ff08"/><stop offset="0.1197" stop-color="#00ff00"/><stop offset="0.2074" stop-color="#02ff00"/><stop offset="0.2668" stop-color="#63ff00"/><stop offset="0.3169" stop-color="#c6ff00"/><stop offset="0.3419" stop-color="#ffff00"/><stop offset="0.3685" stop-color="#ffc900"/><stop offset="0.4045" stop-color="#ff9700"/><stop offset="0.4531" stop-color="#ff6b00"/><stop offset="0.5219" stop-color="#ff4400"/><stop offset="0.6252" stop-color="#ff2100"/><stop offset="0.7895" stop-color="#ff0300"/><stop offset="0.9554" stop-color="#ff0000"/><stop offset="0.9992" stop-color="#ff0000"/></linearGradient><linearGradient id="g12" gradientUnits="userSpaceOnUse" x1="0" x2="639"><stop offset="0.0008" stop-color="#00ff0b"/><stop offset="0.1495" stop-color="#00ff00"/><stop offset="0.2074" stop-color="#01ff00"/><stop offset="0.2653" stop-color="#60ff00"/><stop offset="0.3153" stop-color="#c3ff00"/><stop offset="0.3419" stop-color="#fffe00"/><stop offset="0.3685" stop-color="#ffc800"/><stop offset="0.4045" stop-color="#ff9600"/><stop offset="0.4531" stop-color="#ff6a00"/><stop offset="0.5219" stop-color="#ff4300"/><stop offset="0.6252" stop-color="#ff2000"/><stop offset="0.7895" stop-color="#ff0300"/><stop offset="0.9992" stop-color="#ff0000"/></linearGradient><linearGradient id="g13" gradientUnits="userSpaceOnUse" x1="0" x2="639"><stop offset="0.0008" stop-color="#00ff0e"/><stop offset="0.1808" stop-color="#00ff00"/><stop offset="0.2074" stop-color="#01ff00"/><stop offset="0.2653" stop-color="#5fff00"/><stop offset="0.3153" stop-color="#c3ff00"/><stop offset="0.3419" stop-color="#fffd00"/><stop offset="0.3685" stop-color="#ffc700"/><stop offset="0.4045" stop-color="#ff9600"/><stop offset="0.4531" stop-color="#ff6a00"/><stop offset="0.5219" stop-color="#ff4200"/><stop offset="0.6252" stop-color="#ff2000"/><stop offset="0.7911" stop-color="#ff0200"/><stop offset="0.9992" stop-color="#ff0000"/></linearGradient><linearGradient id="g14" gradientUnits="userSpaceOnUse" x1="0" x2="639"><stop offset="0.0008" stop-color="#00ff11"/><stop offset="0.2089" stop-color="#02ff00"/><stop offset="0.2668" stop-color="#62ff00"/><stop offset="0.3169" stop-color="#c7ff00"/><stop offset="0.3419" stop-color="#fffc00"/><stop offset="0.3685" stop-color="#ffc700"/><stop offset="0.4030" stop-color="#ff9700"/><stop offset="0.4515" stop-color="#ff6a00"/><stop offset="0.5203" stop-color="#ff4300"/><stop offset="0.6236" stop-color="#ff2000"/><stop offset="0.7879" stop-color="#ff0200"/><stop offset="0.9992" stop-color="#ff0000"/></linearGradient><linearGradient id="g15" gradientUnits="userSpaceOnUse" x1="0" x2="639"><stop offset="0.0008" stop-color="#00ff15"/><stop offset="0.2089" stop-color="#01ff01"/><stop offset="0.2668" stop-color="#62ff00"/><stop offset="0.3153" stop-color="#c4ff00"/><stop offset="0.3404" stop-color="#ffff00"/><stop offset="0.3670" stop-color="#ffc800"/><stop offset="0.4014" stop-color="#ff9800"/><stop offset="0.4484" stop-color="#ff6c00"/><stop offset="0.5156" stop-color="#ff4400"/><stop offset="0.6158" stop-color="#ff2100"/><stop offset="0.7754" stop-color="#ff0300"/><stop offset="0.8865" stop-color="#ff0000"/><stop offset="0.9992" stop-color="#ff0000"/></linearGradient><linearGradient id="g16" gradientUnits="userSpaceOnUse" x1="0" x2="639"><stop offset="0.0008" stop-color="#00ff18"/><stop offset="0.2089" stop-color="#01ff05"/><stop offset="0.2653" stop-color="#5eff00"/><stop offset="0.3138" stop-color="#c1ff00"/><stop offset="0.3404" stop-color="#ffff00"/><stop offset="0.3654" stop-color="#ffca00"/><stop offset="0.3998" stop-color="#ff9900"/><stop offset="0.4468" stop-color="#ff6c00"/><stop offset="0.5141" stop-color="#ff4400"/><stop offset="0.6142" stop-color="#ff2100"/><stop offset="0.7739" stop-color="#ff0300"/><stop offset="0.9053" stop-color="#ff0000"/><stop offset="0.9992" stop-color="#ff0000"/></linearGradient><linearGradient id="g17" gradientUnits="userSpaceOnUse" x1="0" x2="639"><stop offset="0.0008" stop-color="#00ff1b"/><stop offset="0.2105" stop-color="#02ff0a"/><stop offset="0.2668" stop-color="#61ff02"/><stop offset="0.3153" stop-color="#c4ff00"/><stop offset="0.3404" stop-color="#fffe00"/><stop offset="0.3654" stop-color="#ffca00"/><stop offset="0.3998" stop-color="#ff9800"/><stop offset="0.4468" stop-color="#ff6b00"/><stop offset="0.5141" stop-color="#ff4400"/><stop offset="0.6142" stop-color="#ff2100"/><stop offset="0.7739" stop-color="#ff0300"/><stop offset="0.9992" stop-color="#ff0000"/></linearGradient><linearGradient id="g18" gradientUnits="userSpaceOnUse" x1="0" x2="639"><stop offset="0.0008" stop-color="#00ff1f"/><stop offset="0.2105" stop-color="#02ff0e"/><stop offset="0.2668" stop-color="#61ff07"/><stop offset="0.3153" stop-color="#c5ff00"/><stop offset="0.3404" stop-color="#fffd00"/><stop offset="0.3654" stop-color="#ffc900"/><stop offset="0.3998" stop-color="#ff9700"/><stop offset="0.4468" stop-color="#ff6b00"/><stop offset="0.5141" stop-color="#ff4300"/><stop offset="0.6142" stop-color="#ff2000"/><stop offset="0.7739" stop-color="#ff0200"/><stop offset="0.9992" stop-color="#ff0000"/></linearGradient><linearGradient id="g19" gradientUnits="userSpaceOnUse" x1="0" x2="639"><stop offset="0.0008" stop-color="#00ff22"/><stop offset="0.2105" stop-color="#01ff13"/><stop offset="0.2668" stop-color="#60ff0c"/><stop offset="0.3153" stop-color="#c5ff06"/><stop offset="0.3404" stop-color="#fffd02"/><stop offset="0.3654" stop-color="#ffc800"/><stop offset="0.3998" stop-color="#ff9600"/><stop offset="0.4468" stop-color="#ff6a00"/><stop offset="0.5141" stop-color="#ff4200"/><stop offset="0.6142" stop-color="#ff2000"/><stop offset="0.7739" stop-color="#ff0200"/><stop offset="0.9992" stop-color="#ff0000"/></linearGradient><linearGradient id="g20" gradientUnits="userSpaceOnUse" x1="0" x2="639"><stop offset="0.0008" stop-color="#00ff26"/><stop offset="0.2121" stop-color="#02ff17"/><stop offset="0.2684" stop-color="#63ff11"/><stop offset="0.3153" stop-color="#c5ff0b"/><stop offset="0.3388" stop-color="#feff08"/><stop offset="0.3654" stop-color="#ffc703"/><stop offset="0.3998" stop-color="#ff9600"/><stop offset="0.4468" stop-color="#ff6900"/><stop offset="0.5141" stop-color="#ff4200"/><stop offset="0.6142" stop-color="#ff1f00"/><stop offset="0.7739" stop-color="#ff0100"/><stop offset="0.9992" stop-color="#ff0000"/></linearGradient><linearGradient id="g21" gradientUnits="userSpaceOnUse" x1="0" x2="639"><stop offset="0.0008" stop-color="#00ff29"/><stop offset="0.2121" stop-color="#02ff1c"/><stop offset="0.2668" stop-color="#60ff16"/><stop offset="0.3138" stop-color="#c2ff11"/><stop offset="0.3388" stop-color="#ffff0e"/><stop offset="0.3638" stop-color="#ffc908"/><stop offset="0.3967" stop-color="#ff9902"/><stop offset="0.4421" stop-color="#ff6c00"/><stop offset="0.5063" stop-color="#ff4500"/><stop offset="0.6033" stop-color="#ff2100"/><stop offset="0.7567" stop-color="#ff0300"/><stop offset="0.8537" stop-color="#ff0000"/><stop offset="0.9992" stop-color="#ff0000"/></linearGradient><linearGradient id="g22" gradientUnits="userSpaceOnUse" x1="0" x2="639"><stop offset="0.0008" stop-color="#00ff2d"/><stop offset="0.2121" stop-color="#01ff20"/><stop offset="0.2668" stop-color="#5fff1c"/><stop offset="0.3138" stop-color="#c2ff17"/><stop offset="0.3388" stop-color="#fffe14"/><stop offset="0.3638" stop-color="#ffc80d"/><stop offset="0.3967" stop-color="#ff9806"/><stop offset="0.4421" stop-color="#ff6b01"/><stop offset="0.5063" stop-color="#ff4400"/><stop offset="0.6033" stop-color="#ff2100"/><stop offset="0.7567" stop-color="#ff0300"/><stop offset="0.8991" stop-color="#ff0000"/><stop offset="0.9992" stop-color="#ff0000"/></linearGradient><linearGradient id="g23" gradientUnits="userSpaceOnUse" x1="0" x2="639"><stop offset="0.0008" stop-color="#00ff30"/><stop offset="0.2136" stop-color="#02ff25"/><stop offset="0.2684" stop-color="#62ff21"/><stop offset="0.3153" stop-color="#c6ff1c"/><stop offset="0.3388" stop-color="#fffd19"/><stop offset="0.3638" stop-color="#ffc812"/><stop offset="0.3967" stop-color="#ff970b"/><stop offset="0.4421" stop-color="#ff6b04"/><stop offset="0.5063" stop-color="#ff4300"/><stop offset="0.6033" stop-color="#ff2000"/><stop offset="0.7567" stop-color="#ff0300"/><stop offset="0.9992" stop-color="#ff0000"/></linearGradient><linearGradient id="g24" gradientUnits="userSpaceOnUse" x1="0" x2="639"><stop offset="0.0008" stop-color="#00ff34"/><stop offset="0.2136" stop-color="#02ff2a"/><stop offset="0.2684" stop-color="#62ff26"/><stop offset="0.3153" stop-color="#c7ff22"/><stop offset="0.3388" stop-color="#fffd1f"/><stop offset="0.3638" stop-color="#ffc717"/><stop offset="0.3967" stop-color="#ff960f"/><stop offset="0.4421" stop-color="#ff6a07"/><stop offset="0.5063" stop-color="#ff4301"/><stop offset="0.6033" stop-color="#ff2000"/><stop offset="0.7582" stop-color="#ff0200"/><stop offset="0.9992" stop-color="#ff0000"/></linearGradient><linearGradient id="g25" gradientUnits="userSpaceOnUse" x1="0" x2="639"><stop offset="0.0008" stop-color="#00ff37"/><stop offset="0.2136" stop-color="#01ff2f"/><stop offset="0.2668" stop-color="#5fff2c"/><stop offset="0.3138" stop-color="#c3ff28"/><stop offset="0.3372" stop-color="#feff26"/><stop offset="0.3638" stop-color="#ffc61c"/><stop offset="0.3967" stop-color="#ff9513"/><stop offset="0.4421" stop-color="#ff690b"/><stop offset="0.5063" stop-color="#ff4203"/><stop offset="0.6033" stop-color="#ff1f00"/><stop offset="0.7582" stop-color="#ff0200"/><stop offset="0.9992" stop-color="#ff0000"/></linearGradient><linearGradient id="g26" gradientUnits="userSpaceOnUse" x1="0" x2="639"><stop offset="0.0008" stop-color="#00ff3b"/><stop offset="0.2136" stop-color="#00ff34"/><stop offset="0.2668" stop-color="#5eff31"/><stop offset="0.3122" stop-color="#c0ff2e"/><stop offset="0.3372" stop-color="#ffff2c"/><stop offset="0.3623" stop-color="#ffc821"/><stop offset="0.3951" stop-color="#ff9617"/><stop offset="0.4405" stop-color="#ff6a0e"/><stop offset="0.5047" stop-color="#ff4206"/><stop offset="0.6002" stop-color="#ff2000"/><stop offset="0.7535" stop-color="#ff0200"/><stop offset="0.9992" stop-color="#ff0000"/></linearGradient><linearGradient id="g27" gradientUnits="userSpaceOnUse" x1="0" x2="639"><stop offset="0.0008" stop-color="#00ff3e"/><stop offset="0.2152" stop-color="#02ff39"/><stop offset="0.2684" stop-color="#61ff36"/><stop offset="0.3138" stop-color="#c4ff34"/><stop offset="0.3372" stop-color="#fffe33"/><stop offset="0.3607" stop-color="#ffca27"/><stop offset="0.3920" stop-color="#ff9a1c"/><stop offset="0.4358" stop-color="#ff6d12"/><stop offset="0.4984" stop-color="#ff4509"/><stop offset="0.5908" stop-color="#ff2202"/><stop offset="0.7379" stop-color="#ff0400"/><stop offset="0.8255" stop-color="#ff0000"/><stop offset="0.9992" stop-color="#ff0000"/></linearGradient><linearGradient id="g28" gradientUnits="userSpaceOnUse" x1="0" x2="639"><stop offset="0.0008" stop-color="#00ff42"/><stop offset="0.2152" stop-color="#01ff3e"/><stop offset="0.2684" stop-color="#61ff3c"/><stop offset="0.3138" stop-color="#c4ff3a"/><stop offset="0.3372" stop-color="#fffe39"/><stop offset="0.3607" stop-color="#ffc92c"/><stop offset="0.3920" stop-color="#ff9921"/><stop offset="0.4358" stop-color="#ff6c16"/><stop offset="0.4984" stop-color="#ff440c"/><stop offset="0.5908" stop-color="#ff2104"/><stop offset="0.7379" stop-color="#ff0300"/><stop offset="0.8505" stop-color="#ff0000"/><stop offset="0.9992" stop-color="#ff0000"/></linearGradient><linearGradient id="g29" gradientUnits="userSpaceOnUse" x1="0" x2="639"><stop offset="0.0008" stop-color="#00ff46"/><stop offset="0.2152" stop-color="#00ff43"/><stop offset="0.2684" stop-color="#60ff42"/><stop offset="0.3138" stop-color="#c5ff40"/><stop offset="0.3372" stop-color="#fffd3f"/><stop offset="0.3607" stop-color="#ffc831"/><stop offset="0.3920" stop-color="#ff9825"/><stop offset="0.4358" stop-color="#ff6b19"/><stop offset="0.4984" stop-color="#ff430f"/><stop offset="0.5908" stop-color="#ff2106"/><stop offset="0.7379" stop-color="#ff0300"/><stop offset="0.9820" stop-color="#ff0000"/><stop offset="0.9992" stop-color="#ff0000"/></linearGradient><linearGradient id="g30" gradientUnits="userSpaceOnUse" x1="0" x2="639"><stop offset="0.0008" stop-color="#00ff49"/><stop offset="0.2167" stop-color="#02ff48"/><stop offset="0.2684" stop-color="#60ff47"/><stop offset="0.3138" stop-color="#c5ff47"/><stop offset="0.3357" stop-color="#feff46"/><stop offset="0.3623" stop-color="#ffc536"/><stop offset="0.3951" stop-color="#ff9328"/><stop offset="0.4390" stop-color="#ff681c"/><stop offset="0.5031" stop-color="#ff4011"/><stop offset="0.5986" stop-color="#ff1e07"/><stop offset="0.7520" stop-color="#ff0000"/><stop offset="0.9992" stop-color="#ff0000"/></linearGradient><linearGradient id="g31" gradientUnits="userSpaceOnUse" x1="0" x2="639"><stop offset="0.0008" stop-color="#00ff4d"/><stop offset="0.2167" stop-color="#01ff4d"/><stop offset="0.2684" stop-color="#60ff4d"/><stop offset="0.3122" stop-color="#c2ff4d"/><stop offset="0.3357" stop-color="#feff4d"/><stop offset="0.3607" stop-color="#ffc73c"/><stop offset="0.3920" stop-color="#ff962d"/><stop offset="0.4358" stop-color="#ff6a20"/><stop offset="0.4984" stop-color="#ff4214"/><stop offset="0.5923" stop-color="#ff1f09"/><stop offset="0.7410" stop-color="#ff0100"/><stop offset="0.9992" stop-color="#ff0000"/></linearGradient><linearGradient id="g32" gradientUnits="userSpaceOnUse" x1="0" x2="639"><stop offset="0.0008" stop-color="#00ff51"/><stop offset="0.2167" stop-color="#00ff52"/><stop offset="0.2684" stop-color="#5fff53"/><stop offset="0.3122" stop-color="#c2ff54"/><stop offset="0.3357" stop-color="#ffff54"/><stop offset="0.3592" stop-color="#ffc942"/><stop offset="0.3905" stop-color="#ff9732"/><stop offset="0.4327" stop-color="#ff6b24"/><stop offset="0.4937" stop-color="#ff4317"/><stop offset="0.5845" stop-color="#ff210c"/><stop offset="0.7285" stop-color="#ff0302"/><stop offset="0.9131" stop-color="#ff0000"/><stop offset="0.9992" stop-color="#ff0000"/></linearGradient><linearGradient id="g33" gradientUnits="userSpaceOnUse" x1="0" x2="639"><stop offset="0.0008" stop-color="#00ff55"/><stop offset="0.2183" stop-color="#02ff58"/><stop offset="0.2700" stop-color="#62ff59"/><stop offset="0.3138" stop-color="#c6ff5a"/><stop offset="0.3357" stop-color="#fffe5b"/><stop offset="0.3592" stop-color="#ffc848"/><stop offset="0.3905" stop-color="#ff9637"/><stop offset="0.4327" stop-color="#ff6b28"/><stop offset="0.4937" stop-color="#ff431a"/><stop offset="0.5845" stop-color="#ff200e"/><stop offset="0.7300" stop-color="#ff0204"/><stop offset="0.9820" stop-color="#ff0000"/><stop offset="0.9992" stop-color="#ff0000"/></linearGradient><linearGradient id="g34" gradientUnits="userSpaceOnUse" x1="0" x2="639"><stop offset="0.0008" stop-color="#00ff58"/><stop offset="0.2183" stop-color="#01ff5d"/><stop offset="0.2684" stop-color="#5fff5f"/><stop offset="0.3122" stop-color="#c3ff61"/><stop offset="0.3357" stop-color="#fffd61"/><stop offset="0.3592" stop-color="#ffc74d"/><stop offset="0.3905" stop-color="#ff963b"/><stop offset="0.4327" stop-color="#ff6a2b"/><stop offset="0.4937" stop-color="#ff421d"/><stop offset="0.5845" stop-color="#ff2010"/><stop offset="0.7300" stop-color="#ff0205"/><stop offset="0.9617" stop-color="#ff0000"/><stop offset="0.9992" stop-color="#ff0000"/></linearGradient><linearGradient id="g35" gradientUnits="userSpaceOnUse" x1="0" x2="639"><stop offset="0.0008" stop-color="#00ff5c"/><stop offset="0.2183" stop-color="#00ff63"/><stop offset="0.2684" stop-color="#5eff65"/><stop offset="0.3122" stop-color="#c3ff68"/><stop offset="0.3341" stop-color="#fdff69"/><stop offset="0.3607" stop-color="#ffc352"/><stop offset="0.3920" stop-color="#ff933f"/><stop offset="0.4358" stop-color="#ff662e"/><stop offset="0.4984" stop-color="#ff3f1f"/><stop offset="0.5923" stop-color="#ff1d11"/><stop offset="0.7394" stop-color="#ff0006"/><stop offset="0.9836" stop-color="#ff0000"/><stop offset="0.9992" stop-color="#ff0000"/></linearGradient><linearGradient id="g36" gradientUnits="userSpaceOnUse" x1="0" x2="639"><stop offset="0.0008" stop-color="#00ff60"/><stop offset="0.2199" stop-color="#02ff68"/><stop offset="0.2700" stop-color="#61ff6b"/><stop offset="0.3122" stop-color="#c3ff6e"/><stop offset="0.3341" stop-color="#feff70"/><stop offset="0.3592" stop-color="#ffc559"/><stop offset="0.3905" stop-color="#ff9444"/><stop offset="0.4327" stop-color="#ff6833"/><stop offset="0.4937" stop-color="#ff4122"/><stop offset="0.5845" stop-color="#ff1e14"/><stop offset="0.7300" stop-color="#ff0108"/><stop offset="0.9992" stop-color="#ff0000"/></linearGradient><linearGradient id="g37" gradientUnits="userSpaceOnUse" x1="0" x2="639"><stop offset="0.0008" stop-color="#00ff64"/><stop offset="0.2199" stop-color="#01ff6e"/><stop offset="0.2700" stop-color="#61ff72"/><stop offset="0.3122" stop-color="#c4ff75"/><stop offset="0.3341" stop-color="#ffff78"/><stop offset="0.3560" stop-color="#ffca61"/><stop offset="0.3858" stop-color="#ff994c"/><stop offset="0.4264" stop-color="#ff6d38"/><stop offset="0.4844" stop-color="#ff4527"/><stop offset="0.5704" stop-color="#ff2218"/><stop offset="0.7081" stop-color="#ff040b"/><stop offset="0.7848" stop-color="#ff0007"/><stop offset="0.9992" stop-color="#ff0000"/></linearGradient><linearGradient id="g38" gradientUnits="userSpaceOnUse" x1="0" x2="639"><stop offset="0.0008" stop-color="#00ff68"/><stop offset="0.2199" stop-color="#00ff74"/><stop offset="0.2700" stop-color="#61ff78"/><stop offset="0.3122" stop-color="#c4ff7c"/><stop offset="0.3341" stop-color="#fffe7f"/><stop offset="0.3560" stop-color="#ffc967"/><stop offset="0.3858" stop-color="#ff9850"/><stop offset="0.4264" stop-color="#ff6c3c"/><stop offset="0.4844" stop-color="#ff442a"/><stop offset="0.5704" stop-color="#ff211a"/><stop offset="0.7081" stop-color="#ff030d"/><stop offset="0.8036" stop-color="#ff0007"/><stop offset="0.9992" stop-color="#ff0000"/></linearGradient><linearGradient id="g39" gradientUnits="userSpaceOnUse" x1="0" x2="639"><stop offset="0.0008" stop-color="#00ff6c"/><stop offset="0.2214" stop-color="#02ff7a"/><stop offset="0.2700" stop-color="#60ff7f"/><stop offset="0.3122" stop-color="#c4ff84"/><stop offset="0.3341" stop-color="#fffd86"/><stop offset="0.3560" stop-color="#ffc96d"/><stop offset="0.3858" stop-color="#ff9755"/><stop offset="0.4264" stop-color="#ff6b40"/><stop offset="0.4844" stop-color="#ff432d"/><stop offset="0.5704" stop-color="#ff211d"/><stop offset="0.7081" stop-color="#ff030e"/><stop offset="0.9006" stop-color="#ff0004"/><stop offset="0.9992" stop-color="#ff0001"/></linearGradient><linearGradient id="g40" gradientUnits="userSpaceOnUse" x1="0" x2="639"><stop offset="0.0008" stop-color="#00ff70"/><stop offset="0.2214" stop-color="#01ff80"/><stop offset="0.2700" stop-color="#60ff85"/><stop offset="0.3122" stop-color="#c5ff8b"/><stop offset="0.3341" stop-color="#fffc8d"/><stop offset="0.3560" stop-color="#ffc872"/><stop offset="0.3858" stop-color="#ff965a"/><stop offset="0.4264" stop-color="#ff6a44"/><stop offset="0.4844" stop-color="#ff4330"/><stop offset="0.5704" stop-color="#ff201f"/><stop offset="0.7081" stop-color="#ff0210"/><stop offset="0.9992" stop-color="#ff0002"/></linearGradient><linearGradient id="g41" gradientUnits="userSpaceOnUse" x1="0" x2="639"><stop offset="0.0008" stop-color="#00ff74"/><stop offset="0.2214" stop-color="#00ff86"/><stop offset="0.2700" stop-color="#60ff8c"/><stop offset="0.3122" stop-color="#c5ff92"/><stop offset="0.3326" stop-color="#feff96"/><stop offset="0.3576" stop-color="#ffc477"/><stop offset="0.3873" stop-color="#ff935e"/><stop offset="0.4280" stop-color="#ff6847"/><stop offset="0.4859" stop-color="#ff4132"/><stop offset="0.5736" stop-color="#ff1f20"/><stop offset="0.7144" stop-color="#ff0111"/><stop offset="0.9992" stop-color="#ff0003"/></linearGradient><linearGradient id="g42" gradientUnits="userSpaceOnUse" x1="0" x2="639"><stop offset="0.0008" stop-color="#00ff78"/><stop offset="0.2230" stop-color="#02ff8c"/><stop offset="0.2715" stop-color="#63ff93"/><stop offset="0.3122" stop-color="#c6ff9a"/><stop offset="0.3326" stop-color="#ffff9e"/><stop offset="0.3545" stop-color="#ffc980"/><stop offset="0.3826" stop-color="#ff9966"/><stop offset="0.4218" stop-color="#ff6d4e"/><stop offset="0.4781" stop-color="#ff4538"/><stop offset="0.5610" stop-color="#ff2225"/><stop offset="0.6941" stop-color="#ff0414"/><stop offset="0.7692" stop-color="#ff000e"/><stop offset="0.9992" stop-color="#ff0003"/></linearGradient><linearGradient id="g43" gradientUnits="userSpaceOnUse" x1="0" x2="639"><stop offset="0.0008" stop-color="#00ff7c"/><stop offset="0.2230" stop-color="#01ff92"/><stop offset="0.2700" stop-color="#5fff99"/><stop offset="0.3106" stop-color="#c2ffa1"/><stop offset="0.3326" stop-color="#fffea5"/><stop offset="0.3545" stop-color="#ffc886"/><stop offset="0.3826" stop-color="#ff986b"/><stop offset="0.4218" stop-color="#ff6c52"/><stop offset="0.4781" stop-color="#ff443b"/><stop offset="0.5610" stop-color="#ff2127"/><stop offset="0.6941" stop-color="#ff0316"/><stop offset="0.7926" stop-color="#ff000e"/><stop offset="0.9992" stop-color="#ff0004"/></linearGradient><linearGradient id="g44" gradientUnits="userSpaceOnUse" x1="0" x2="639"><stop offset="0.0008" stop-color="#00ff81"/><stop offset="0.2230" stop-color="#01ff98"/><stop offset="0.2700" stop-color="#5fffa0"/><stop offset="0.3106" stop-color="#c2ffa9"/><stop offset="0.3326" stop-color="#fffead"/><stop offset="0.3545" stop-color="#ffc78c"/><stop offset="0.3826" stop-color="#ff9770"/><stop offset="0.4218" stop-color="#ff6b55"/><stop offset="0.4781" stop-color="#ff433e"/><stop offset="0.5626" stop-color="#ff2029"/><stop offset="0.6972" stop-color="#ff0217"/><stop offset="0.9992" stop-color="#ff0005"/></linearGradient><linearGradient id="g45" gradientUnits="userSpaceOnUse" x1="0" x2="639"><stop offset="0.0008" stop-color="#00ff85"/><stop offset="0.2246" stop-color="#02ff9f"/><stop offset="0.2715" stop-color="#62ffa7"/><stop offset="0.3122" stop-color="#c7ffb1"/><stop offset="0.3326" stop-color="#fffdb4"/><stop offset="0.3545" stop-color="#ffc693"/><stop offset="0.3826" stop-color="#ff9675"/><stop offset="0.4218" stop-color="#ff6a59"/><stop offset="0.4781" stop-color="#ff4241"/><stop offset="0.5626" stop-color="#ff202b"/><stop offset="0.6972" stop-color="#ff0219"/><stop offset="0.9992" stop-color="#ff0006"/></linearGradient><linearGradient id="g46" gradientUnits="userSpaceOnUse" x1="0" x2="639"><stop offset="0.0008" stop-color="#00ff89"/><stop offset="0.2183" stop-color="#00ffa4"/><stop offset="0.2246" stop-color="#02ffa5"/><stop offset="0.2715" stop-color="#61ffaf"/><stop offset="0.3106" stop-color="#c3ffb8"/><stop offset="0.3310" stop-color="#feffbe"/><stop offset="0.3545" stop-color="#ffc599"/><stop offset="0.3826" stop-color="#ff957a"/><stop offset="0.4218" stop-color="#ff695d"/><stop offset="0.4781" stop-color="#ff4244"/><stop offset="0.5626" stop-color="#ff1f2d"/><stop offset="0.6972" stop-color="#ff011a"/><stop offset="0.9992" stop-color="#ff0007"/></linearGradient><linearGradient id="g47" gradientUnits="userSpaceOnUse" x1="0" x2="639"><stop offset="0.0008" stop-color="#00ff8d"/><stop offset="0.2121" stop-color="#00ffa9"/><stop offset="0.2246" stop-color="#01ffac"/><stop offset="0.2715" stop-color="#61ffb6"/><stop offset="0.3106" stop-color="#c3ffc0"/><stop offset="0.3310" stop-color="#feffc7"/><stop offset="0.3529" stop-color="#ffc8a1"/><stop offset="0.3811" stop-color="#ff9680"/><stop offset="0.4202" stop-color="#ff6a62"/><stop offset="0.4750" stop-color="#ff4348"/><stop offset="0.5579" stop-color="#ff2031"/><stop offset="0.6894" stop-color="#ff021d"/><stop offset="0.9914" stop-color="#ff0009"/><stop offset="0.9992" stop-color="#ff0008"/></linearGradient><linearGradient id="g48" gradientUnits="userSpaceOnUse" x1="0" x2="639"><stop offset="0.0008" stop-color="#00ff92"/><stop offset="0.2058" stop-color="#00ffae"/><stop offset="0.2261" stop-color="#03ffb2"/><stop offset="0.2715" stop-color="#61ffbd"/><stop offset="0.3106" stop-color="#c4ffc9"/><stop offset="0.3310" stop-color="#ffffcf"/><stop offset="0.3513" stop-color="#ffcaaa"/><stop offset="0.3779" stop-color="#ff9a89"/><stop offset="0.4155" stop-color="#ff6d6a"/><stop offset="0.4687" stop-color="#ff454e"/><stop offset="0.5485" stop-color="#ff2235"/><stop offset="0.6753" stop-color="#ff0420"/><stop offset="0.7426" stop-color="#ff0019"/><stop offset="0.9992" stop-color="#ff0009"/></linearGradient><linearGradient id="g49" gradientUnits="userSpaceOnUse" x1="0" x2="639"><stop offset="0.0008" stop-color="#00ff96"/><stop offset="0.1995" stop-color="#00ffb3"/><stop offset="0.2261" stop-color="#02ffb9"/><stop offset="0.2715" stop-color="#60ffc5"/><stop offset="0.3106" stop-color="#c4ffd1"/><stop offset="0.3310" stop-color="#fffed7"/><stop offset="0.3513" stop-color="#ffc9b1"/><stop offset="0.3779" stop-color="#ff998e"/><stop offset="0.4155" stop-color="#ff6c6e"/><stop offset="0.4687" stop-color="#ff4551"/><stop offset="0.5485" stop-color="#ff2237"/><stop offset="0.6753" stop-color="#ff0322"/><stop offset="0.7567" stop-color="#ff0019"/><stop offset="0.9992" stop-color="#ff000a"/></linearGradient><linearGradient id="g50" gradientUnits="userSpaceOnUse" x1="0" x2="639"><stop offset="0.0008" stop-color="#00ff9a"/><stop offset="0.1948" stop-color="#00ffb9"/><stop offset="0.2261" stop-color="#01ffc0"/><stop offset="0.2715" stop-color="#60ffcc"/><stop offset="0.3106" stop-color="#c4ffd9"/><stop offset="0.3310" stop-color="#fffddf"/><stop offset="0.3513" stop-color="#ffc8b7"/><stop offset="0.3779" stop-color="#ff9894"/><stop offset="0.4155" stop-color="#ff6b72"/><stop offset="0.4687" stop-color="#ff4454"/><stop offset="0.5485" stop-color="#ff213a"/><stop offset="0.6753" stop-color="#ff0323"/><stop offset="0.8271" stop-color="#ff0015"/><stop offset="0.9992" stop-color="#ff000b"/></linearGradient><linearGradient id="g51" gradientUnits="userSpaceOnUse" x1="0" x2="639"><stop offset="0.0008" stop-color="#00ff9f"/><stop offset="0.1901" stop-color="#00ffbe"/><stop offset="0.2261" stop-color="#00ffc7"/><stop offset="0.2700" stop-color="#5cffd3"/><stop offset="0.3091" stop-color="#c0ffe1"/><stop offset="0.3294" stop-color="#fdffea"/><stop offset="0.3529" stop-color="#ffc4bc"/><stop offset="0.3811" stop-color="#ff9395"/><stop offset="0.4202" stop-color="#ff6673"/><stop offset="0.4750" stop-color="#ff3f55"/><stop offset="0.5579" stop-color="#ff1d3a"/><stop offset="0.6894" stop-color="#ff0023"/><stop offset="0.9648" stop-color="#ff000e"/><stop offset="0.9992" stop-color="#ff000c"/></linearGradient><linearGradient id="g52" gradientUnits="userSpaceOnUse" x1="0" x2="639"><stop offset="0.0008" stop-color="#00ffa3"/><stop offset="0.1854" stop-color="#00ffc3"/><stop offset="0.2277" stop-color="#02ffce"/><stop offset="0.2715" stop-color="#5fffdc"/><stop offset="0.3091" stop-color="#c1ffea"/><stop offset="0.3294" stop-color="#fefff3"/><stop offset="0.3513" stop-color="#ffc6c5"/><stop offset="0.3779" stop-color="#ff969e"/><stop offset="0.4155" stop-color="#ff6a7a"/><stop offset="0.4687" stop-color="#ff425b"/><stop offset="0.5485" stop-color="#ff203f"/><stop offset="0.6753" stop-color="#ff0227"/><stop offset="0.9319" stop-color="#ff0011"/><stop offset="0.9992" stop-color="#ff000d"/></linearGradient><linearGradient id="g53" gradientUnits="userSpaceOnUse" x1="0" x2="639"><stop offset="0.0008" stop-color="#00ffa8"/><stop offset="0.1808" stop-color="#00ffc8"/><stop offset="0.2277" stop-color="#01ffd5"/><stop offset="0.2715" stop-color="#5fffe4"/><stop offset="0.3091" stop-color="#c1fff3"/><stop offset="0.3294" stop-color="#fffffc"/><stop offset="0.3498" stop-color="#ffc8cf"/><stop offset="0.3764" stop-color="#ff98a6"/><stop offset="0.4124" stop-color="#ff6c81"/><stop offset="0.4640" stop-color="#ff4460"/><stop offset="0.5407" stop-color="#ff2243"/><stop offset="0.6628" stop-color="#ff042a"/><stop offset="0.7379" stop-color="#ff0021"/><stop offset="0.9992" stop-color="#ff000e"/></linearGradient><linearGradient id="g54" gradientUnits="userSpaceOnUse" x1="0" x2="639"><stop offset="0.0008" stop-color="#00ffac"/><stop offset="0.1761" stop-color="#00ffce"/><stop offset="0.2277" stop-color="#00ffdc"/><stop offset="0.2715" stop-color="#5fffec"/><stop offset="0.3091" stop-color="#c2fffc"/><stop offset="0.3310" stop-color="#fef8ff"/><stop offset="0.3545" stop-color="#ffbdcd"/><stop offset="0.3826" stop-color="#ff8da4"/><stop offset="0.4218" stop-color="#ff627e"/><stop offset="0.4781" stop-color="#ff3b5d"/><stop offset="0.5626" stop-color="#ff1a40"/><stop offset="0.6847" stop-color="#ff0029"/><stop offset="0.9397" stop-color="#ff0012"/><stop offset="0.9992" stop-color="#ff000f"/></linearGradient><linearGradient id="g55" gradientUnits="userSpaceOnUse" x1="0" x2="639"><stop offset="0.0008" stop-color="#00ffb1"/><stop offset="0.1714" stop-color="#00ffd3"/><stop offset="0.2293" stop-color="#02ffe4"/><stop offset="0.2731" stop-color="#62fff4"/><stop offset="0.3028" stop-color="#aefcff"/><stop offset="0.3357" stop-color="#ffeafc"/><stop offset="0.3576" stop-color="#ffb6ce"/><stop offset="0.3873" stop-color="#ff86a3"/><stop offset="0.4280" stop-color="#ff5c7d"/><stop offset="0.4875" stop-color="#ff365c"/><stop offset="0.5782" stop-color="#ff153e"/><stop offset="0.6878" stop-color="#ff002a"/><stop offset="0.9413" stop-color="#ff0013"/><stop offset="0.9992" stop-color="#ff0010"/></linearGradient><linearGradient id="g56" gradientUnits="userSpaceOnUse" x1="0" x2="639"><stop offset="0.0008" stop-color="#00ffb6"/><stop offset="0.1682" stop-color="#00ffd8"/><stop offset="0.2293" stop-color="#01ffeb"/><stop offset="0.2715" stop-color="#5efffc"/><stop offset="0.3091" stop-color="#b8f1ff"/><stop offset="0.3388" stop-color="#ffe0fd"/><stop offset="0.3607" stop-color="#ffafcf"/><stop offset="0.3905" stop-color="#ff81a5"/><stop offset="0.4327" stop-color="#ff577e"/><stop offset="0.4937" stop-color="#ff325c"/><stop offset="0.5876" stop-color="#ff123e"/><stop offset="0.6878" stop-color="#ff002c"/><stop offset="0.9366" stop-color="#ff0014"/><stop offset="0.9992" stop-color="#ff0011"/></linearGradient><linearGradient id="g57" gradientUnits="userSpaceOnUse" x1="0" x2="639"><stop offset="0.0008" stop-color="#00ffba"/><stop offset="0.1651" stop-color="#00ffde"/><stop offset="0.2293" stop-color="#00fff3"/><stop offset="0.2653" stop-color="#4efcff"/><stop offset="0.3388" stop-color="#fadbff"/><stop offset="0.3435" stop-color="#ffd3f9"/><stop offset="0.3670" stop-color="#ffa3cb"/><stop offset="0.3998" stop-color="#ff759f"/><stop offset="0.4468" stop-color="#ff4c78"/><stop offset="0.5156" stop-color="#ff2856"/><stop offset="0.6236" stop-color="#ff0938"/><stop offset="0.6894" stop-color="#ff002d"/><stop offset="0.9351" stop-color="#ff0016"/><stop offset="0.9992" stop-color="#ff0012"/></linearGradient><linearGradient id="g58" gradientUnits="userSpaceOnUse" x1="0" x2="639"><stop offset="0.0008" stop-color="#00ffbf"/><stop offset="0.1604" stop-color="#00ffe3"/><stop offset="0.2308" stop-color="#02fffb"/><stop offset="0.2559" stop-color="#36f9ff"/><stop offset="0.3326" stop-color="#e3d6ff"/><stop offset="0.3451" stop-color="#ffcefd"/><stop offset="0.3701" stop-color="#ff9ccc"/><stop offset="0.4045" stop-color="#ff6f9f"/><stop offset="0.4531" stop-color="#ff4778"/><stop offset="0.5250" stop-color="#ff2455"/><stop offset="0.6393" stop-color="#ff0537"/><stop offset="0.6956" stop-color="#ff002e"/><stop offset="0.9413" stop-color="#ff0016"/><stop offset="0.9992" stop-color="#ff0013"/></linearGradient><linearGradient id="g59" gradientUnits="userSpaceOnUse" x1="0" x2="639"><stop offset="0.0008" stop-color="#00ffc4"/><stop offset="0.1573" stop-color="#00ffe8"/><stop offset="0.2277" stop-color="#00fdff"/><stop offset="0.2324" stop-color="#04fbff"/><stop offset="0.3138" stop-color="#b2d8ff"/><stop offset="0.3482" stop-color="#ffc6fd"/><stop offset="0.3732" stop-color="#ff96cd"/><stop offset="0.4077" stop-color="#ff6ba1"/><stop offset="0.4577" stop-color="#ff4378"/><stop offset="0.5313" stop-color="#ff2156"/><stop offset="0.6487" stop-color="#ff0337"/><stop offset="0.7786" stop-color="#ff0025"/><stop offset="0.9992" stop-color="#ff0014"/></linearGradient><linearGradient id="g60" gradientUnits="userSpaceOnUse" x1="0" x2="639"><stop offset="0.0008" stop-color="#00ffc9"/><stop offset="0.1541" stop-color="#00ffee"/><stop offset="0.2089" stop-color="#00fdff"/><stop offset="0.2308" stop-color="#00f4ff"/><stop offset="0.3138" stop-color="#acd1ff"/><stop offset="0.3513" stop-color="#ffbefd"/><stop offset="0.3779" stop-color="#ff8ecb"/><stop offset="0.4139" stop-color="#ff649f"/><stop offset="0.4656" stop-color="#ff3e77"/><stop offset="0.5423" stop-color="#ff1c54"/><stop offset="0.6628" stop-color="#ff0037"/><stop offset="0.8725" stop-color="#ff001d"/><stop offset="0.9992" stop-color="#ff0015"/></linearGradient><linearGradient id="g61" gradientUnits="userSpaceOnUse" x1="0" x2="639"><stop offset="0.0008" stop-color="#00ffcd"/><stop offset="0.1510" stop-color="#00fff3"/><stop offset="0.1917" stop-color="#00fcff"/><stop offset="0.2324" stop-color="#02ecff"/><stop offset="0.3169" stop-color="#aec9ff"/><stop offset="0.3545" stop-color="#ffb6fd"/><stop offset="0.3811" stop-color="#ff88cc"/><stop offset="0.4171" stop-color="#ff60a0"/><stop offset="0.4687" stop-color="#ff3b79"/><stop offset="0.5454" stop-color="#ff1b56"/><stop offset="0.6628" stop-color="#ff0038"/><stop offset="0.8693" stop-color="#ff001f"/><stop offset="0.9992" stop-color="#ff0016"/></linearGradient><linearGradient id="g62" gradientUnits="userSpaceOnUse" x1="0" x2="639"><stop offset="0.0008" stop-color="#00ffd2"/><stop offset="0.1479" stop-color="#00fff9"/><stop offset="0.1761" stop-color="#00fbff"/><stop offset="0.2324" stop-color="#01e5ff"/><stop offset="0.3185" stop-color="#acc2ff"/><stop offset="0.3576" stop-color="#ffaefd"/><stop offset="0.3842" stop-color="#ff83cd"/><stop offset="0.4218" stop-color="#ff5ba0"/><stop offset="0.4750" stop-color="#ff3778"/><stop offset="0.5548" stop-color="#ff1755"/><stop offset="0.6628" stop-color="#ff003a"/><stop offset="0.8662" stop-color="#ff0020"/><stop offset="0.9992" stop-color="#ff0017"/></linearGradient><linearGradient id="g63" gradientUnits="userSpaceOnUse" x1="0" x2="639"><stop offset="0.0008" stop-color="#00ffd7"/><stop offset="0.1526" stop-color="#00fdff"/><stop offset="0.2324" stop-color="#00dfff"/><stop offset="0.3200" stop-color="#abbbff"/><stop offset="0.3607" stop-color="#ffa7fd"/><stop offset="0.3889" stop-color="#ff7ccc"/><stop offset="0.4264" stop-color="#ff56a0"/><stop offset="0.4812" stop-color="#ff3378"/><stop offset="0.5626" stop-color="#ff1455"/><stop offset="0.6628" stop-color="#ff003c"/><stop offset="0.8631" stop-color="#ff0022"/><stop offset="0.9992" stop-color="#ff0018"/></linearGradient><linearGradient id="g64" gradientUnits="userSpaceOnUse" x1="0" x2="639"><stop offset="0.0008" stop-color="#00ffdc"/><stop offset="0.1338" stop-color="#00fdff"/><stop offset="0.2340" stop-color="#02d8ff"/><stop offset="0.3247" stop-color="#afb3ff"/><stop offset="0.3638" stop-color="#ffa0fd"/><stop offset="0.3920" stop-color="#ff77cd"/><stop offset="0.4311" stop-color="#ff51a0"/><stop offset="0.4859" stop-color="#ff3078"/><stop offset="0.5689" stop-color="#ff1255"/><stop offset="0.6612" stop-color="#ff003e"/><stop offset="0.8568" stop-color="#ff0024"/><stop offset="0.9992" stop-color="#ff0019"/></linearGradient><linearGradient id="g65" gradientUnits="userSpaceOnUse" x1="0" x2="639"><stop offset="0.0008" stop-color="#00ffe1"/><stop offset="0.1150" stop-color="#00fdff"/><stop offset="0.2340" stop-color="#01d2ff"/><stop offset="0.3263" stop-color="#aeadff"/><stop offset="0.3670" stop-color="#ff9afd"/><stop offset="0.3951" stop-color="#ff72cd"/><stop offset="0.4343" stop-color="#ff4ea1"/><stop offset="0.4906" stop-color="#ff2d79"/><stop offset="0.5736" stop-color="#ff1056"/><stop offset="0.6596" stop-color="#ff0040"/><stop offset="0.8521" stop-color="#ff0025"/><stop offset="0.9992" stop-color="#ff001a"/></linearGradient><linearGradient id="g66" gradientUnits="userSpaceOnUse" x1="0" x2="639"><stop offset="0.0008" stop-color="#00ffe6"/><stop offset="0.0978" stop-color="#00fcff"/><stop offset="0.2340" stop-color="#00cdff"/><stop offset="0.3279" stop-color="#aca7ff"/><stop offset="0.3701" stop-color="#ff94fd"/><stop offset="0.3998" stop-color="#ff6ccc"/><stop offset="0.4405" stop-color="#ff489f"/><stop offset="0.4984" stop-color="#ff2878"/><stop offset="0.5845" stop-color="#ff0c55"/><stop offset="0.6581" stop-color="#ff0042"/><stop offset="0.8459" stop-color="#ff0027"/><stop offset="0.9992" stop-color="#ff001b"/></linearGradient><linearGradient id="g67" gradientUnits="userSpaceOnUse" x1="0" x2="639"><stop offset="0.0008" stop-color="#00ffec"/><stop offset="0.0790" stop-color="#00fcff"/><stop offset="0.2355" stop-color="#02c7ff"/><stop offset="0.3310" stop-color="#aea1ff"/><stop offset="0.3732" stop-color="#ff8efd"/><stop offset="0.4030" stop-color="#ff68cd"/><stop offset="0.4437" stop-color="#ff45a1"/><stop offset="0.5016" stop-color="#ff2679"/><stop offset="0.5876" stop-color="#ff0b56"/><stop offset="0.6549" stop-color="#ff0045"/><stop offset="0.8380" stop-color="#ff0029"/><stop offset="0.9992" stop-color="#ff001c"/></linearGradient><linearGradient id="g68" gradientUnits="userSpaceOnUse" x1="0" x2="639"><stop offset="0.0008" stop-color="#00fff1"/><stop offset="0.0603" stop-color="#00fcff"/><stop offset="0.2355" stop-color="#01c1ff"/><stop offset="0.3326" stop-color="#ac9bff"/><stop offset="0.3764" stop-color="#ff88fe"/><stop offset="0.4077" stop-color="#ff62cc"/><stop offset="0.4499" stop-color="#ff409f"/><stop offset="0.5094" stop-color="#ff2278"/><stop offset="0.5986" stop-color="#ff0855"/><stop offset="0.6549" stop-color="#ff0047"/><stop offset="0.8349" stop-color="#ff002b"/><stop offset="0.9992" stop-color="#ff001d"/></linearGradient><linearGradient id="g69" gradientUnits="userSpaceOnUse" x1="0" x2="639"><stop offset="0.0008" stop-color="#00fff6"/><stop offset="0.0430" stop-color="#00fcff"/><stop offset="0.2355" stop-color="#00bcff"/><stop offset="0.3357" stop-color="#ae95ff"/><stop offset="0.3795" stop-color="#ff82fe"/><stop offset="0.4108" stop-color="#ff5ecc"/><stop offset="0.4531" stop-color="#ff3da0"/><stop offset="0.5141" stop-color="#ff2078"/><stop offset="0.6049" stop-color="#ff0655"/><stop offset="0.6565" stop-color="#ff0048"/><stop offset="0.8349" stop-color="#ff002c"/><stop offset="0.9992" stop-color="#ff001e"/></linearGradient><linearGradient id="g70" gradientUnits="userSpaceOnUse" x1="0" x2="639"><stop offset="0.0008" stop-color="#00fffb"/><stop offset="0.0399" stop-color="#00f7ff"/><stop offset="0.2371" stop-color="#02b7ff"/><stop offset="0.3388" stop-color="#af90ff"/><stop offset="0.3826" stop-color="#ff7dfe"/><stop offset="0.4139" stop-color="#ff5acd"/><stop offset="0.4577" stop-color="#ff3aa0"/><stop offset="0.5203" stop-color="#ff1d78"/><stop offset="0.6127" stop-color="#ff0455"/><stop offset="0.6721" stop-color="#ff0047"/><stop offset="0.8599" stop-color="#ff002b"/><stop offset="0.9992" stop-color="#ff001f"/></linearGradient><linearGradient id="g71" gradientUnits="userSpaceOnUse" x1="0" x2="639"><stop offset="0.0008" stop-color="#00fdff"/><stop offset="0.2371" stop-color="#01b2ff"/><stop offset="0.3404" stop-color="#ae8bff"/><stop offset="0.3858" stop-color="#ff77fe"/><stop offset="0.4186" stop-color="#ff55cc"/><stop offset="0.4624" stop-color="#ff36a0"/><stop offset="0.5250" stop-color="#ff1a79"/><stop offset="0.6189" stop-color="#ff0256"/><stop offset="0.7676" stop-color="#ff0037"/><stop offset="0.9992" stop-color="#ff0020"/></linearGradient><linearGradient id="g72" gradientUnits="userSpaceOnUse" x1="0" x2="639"><stop offset="0.0008" stop-color="#00f8ff"/><stop offset="0.2371" stop-color="#00aeff"/><stop offset="0.3419" stop-color="#ac86ff"/><stop offset="0.3889" stop-color="#ff72fe"/><stop offset="0.4218" stop-color="#ff51cd"/><stop offset="0.4671" stop-color="#ff32a0"/><stop offset="0.5313" stop-color="#ff1778"/><stop offset="0.6268" stop-color="#ff0055"/><stop offset="0.7786" stop-color="#ff0037"/><stop offset="0.9992" stop-color="#ff0021"/></linearGradient><linearGradient id="g73" gradientUnits="userSpaceOnUse" x1="0" x2="639"><stop offset="0.0008" stop-color="#00f3ff"/><stop offset="0.2387" stop-color="#02a9ff"/><stop offset="0.3451" stop-color="#ae81ff"/><stop offset="0.3920" stop-color="#ff6dfe"/><stop offset="0.4249" stop-color="#ff4dcd"/><stop offset="0.4703" stop-color="#ff30a1"/><stop offset="0.5344" stop-color="#ff1679"/><stop offset="0.6299" stop-color="#ff0057"/><stop offset="0.7817" stop-color="#ff0038"/><stop offset="0.9992" stop-color="#ff0022"/></linearGradient><linearGradient id="g74" gradientUnits="userSpaceOnUse" x1="0" x2="639"><stop offset="0.0008" stop-color="#00eeff"/><stop offset="0.2387" stop-color="#01a4ff"/><stop offset="0.3466" stop-color="#ac7dff"/><stop offset="0.3951" stop-color="#ff69fe"/><stop offset="0.4296" stop-color="#ff49cc"/><stop offset="0.4765" stop-color="#ff2ca0"/><stop offset="0.5438" stop-color="#ff1278"/><stop offset="0.6299" stop-color="#ff0059"/><stop offset="0.7801" stop-color="#ff003a"/><stop offset="0.9992" stop-color="#ff0023"/></linearGradient><linearGradient id="g75" gradientUnits="userSpaceOnUse" x1="0" x2="639"><stop offset="0.0008" stop-color="#00e9ff"/><stop offset="0.2387" stop-color="#00a0ff"/><stop offset="0.3498" stop-color="#ae78ff"/><stop offset="0.3983" stop-color="#ff64fe"/><stop offset="0.4327" stop-color="#ff45cd"/><stop offset="0.4797" stop-color="#ff2aa1"/><stop offset="0.5469" stop-color="#ff1079"/><stop offset="0.6268" stop-color="#ff005b"/><stop offset="0.7723" stop-color="#ff003c"/><stop offset="0.9992" stop-color="#ff0024"/></linearGradient><linearGradient id="g76" gradientUnits="userSpaceOnUse" x1="0" x2="639"><stop offset="0.0008" stop-color="#00e5ff"/><stop offset="0.2402" stop-color="#029cff"/><stop offset="0.3529" stop-color="#af73ff"/><stop offset="0.4014" stop-color="#ff60fe"/><stop offset="0.4358" stop-color="#ff42ce"/><stop offset="0.4844" stop-color="#ff26a1"/><stop offset="0.5532" stop-color="#ff0e79"/><stop offset="0.6252" stop-color="#ff005e"/><stop offset="0.7692" stop-color="#ff003e"/><stop offset="0.9992" stop-color="#ff0025"/></linearGradient><linearGradient id="g77" gradientUnits="userSpaceOnUse" x1="0" x2="639"><stop offset="0.0008" stop-color="#00e0ff"/><stop offset="0.2402" stop-color="#0198ff"/><stop offset="0.3545" stop-color="#ae6fff"/><stop offset="0.4045" stop-color="#ff5bfe"/><stop offset="0.4405" stop-color="#ff3ecd"/><stop offset="0.4890" stop-color="#ff24a1"/><stop offset="0.5595" stop-color="#ff0c78"/><stop offset="0.6221" stop-color="#ff0061"/><stop offset="0.7613" stop-color="#ff0041"/><stop offset="0.9945" stop-color="#ff0026"/><stop offset="0.9992" stop-color="#ff0026"/></linearGradient><linearGradient id="g78" gradientUnits="userSpaceOnUse" x1="0" x2="639"><stop offset="0.0008" stop-color="#00dcff"/><stop offset="0.2402" stop-color="#0094ff"/><stop offset="0.3560" stop-color="#ac6bff"/><stop offset="0.4077" stop-color="#ff57fe"/><stop offset="0.4437" stop-color="#ff3bcd"/><stop offset="0.4937" stop-color="#ff21a0"/><stop offset="0.5642" stop-color="#ff0a79"/><stop offset="0.6205" stop-color="#ff0064"/><stop offset="0.7582" stop-color="#ff0043"/><stop offset="0.9867" stop-color="#ff0028"/><stop offset="0.9992" stop-color="#ff0027"/></linearGradient><linearGradient id="g79" gradientUnits="userSpaceOnUse" x1="0" x2="639"><stop offset="0.0008" stop-color="#00d8ff"/><stop offset="0.2418" stop-color="#0290ff"/><stop offset="0.3592" stop-color="#ae67ff"/><stop offset="0.4108" stop-color="#ff53fe"/><stop offset="0.4484" stop-color="#ff37cc"/><stop offset="0.5000" stop-color="#ff1d9f"/><stop offset="0.5736" stop-color="#ff0777"/><stop offset="0.6205" stop-color="#ff0066"/><stop offset="0.7567" stop-color="#ff0045"/><stop offset="0.9804" stop-color="#ff0029"/><stop offset="0.9992" stop-color="#ff0028"/></linearGradient><linearGradient id="g80" gradientUnits="userSpaceOnUse" x1="0" x2="639"><stop offset="0.0008" stop-color="#00d4ff"/><stop offset="0.2418" stop-color="#018dff"/><stop offset="0.3607" stop-color="#ac64ff"/><stop offset="0.4139" stop-color="#ff4ffe"/><stop offset="0.4515" stop-color="#ff34cd"/><stop offset="0.5031" stop-color="#ff1ba0"/><stop offset="0.5767" stop-color="#ff0578"/><stop offset="0.6221" stop-color="#ff0067"/><stop offset="0.7567" stop-color="#ff0047"/><stop offset="0.9789" stop-color="#ff002b"/><stop offset="0.9992" stop-color="#ff0029"/></linearGradient><linearGradient id="g81" gradientUnits="userSpaceOnUse" x1="0" x2="639"><stop offset="0.0008" stop-color="#00d0ff"/><stop offset="0.2433" stop-color="#0289ff"/><stop offset="0.3654" stop-color="#b05fff"/><stop offset="0.4171" stop-color="#ff4cfe"/><stop offset="0.4546" stop-color="#ff31ce"/><stop offset="0.5063" stop-color="#ff19a1"/><stop offset="0.5798" stop-color="#ff0479"/><stop offset="0.6315" stop-color="#ff0066"/><stop offset="0.7707" stop-color="#ff0046"/><stop offset="0.9992" stop-color="#ff002a"/></linearGradient><linearGradient id="g82" gradientUnits="userSpaceOnUse" x1="0" x2="639"><stop offset="0.0008" stop-color="#00ccff"/><stop offset="0.2433" stop-color="#0286ff"/><stop offset="0.3670" stop-color="#af5cff"/><stop offset="0.4202" stop-color="#ff48fe"/><stop offset="0.4593" stop-color="#ff2ecd"/><stop offset="0.5125" stop-color="#ff16a0"/><stop offset="0.5876" stop-color="#ff0178"/><stop offset="0.7003" stop-color="#ff0055"/><stop offset="0.8787" stop-color="#ff0037"/><stop offset="0.9992" stop-color="#ff002b"/></linearGradient><linearGradient id="g83" gradientUnits="userSpaceOnUse" x1="0" x2="639"><stop offset="0.0008" stop-color="#00c8ff"/><stop offset="0.2433" stop-color="#0183ff"/><stop offset="0.3685" stop-color="#ae58ff"/><stop offset="0.4233" stop-color="#ff44fe"/><stop offset="0.4624" stop-color="#ff2bcd"/><stop offset="0.5156" stop-color="#ff14a1"/><stop offset="0.5923" stop-color="#ff0079"/><stop offset="0.7066" stop-color="#ff0056"/><stop offset="0.8881" stop-color="#ff0037"/><stop offset="0.9992" stop-color="#ff002c"/></linearGradient><linearGradient id="g84" gradientUnits="userSpaceOnUse" x1="0" x2="639"><stop offset="0.0008" stop-color="#00c4ff"/><stop offset="0.2449" stop-color="#027fff"/><stop offset="0.3717" stop-color="#af55ff"/><stop offset="0.4264" stop-color="#ff41fe"/><stop offset="0.4656" stop-color="#ff29ce"/><stop offset="0.5203" stop-color="#ff12a1"/><stop offset="0.5970" stop-color="#ff0079"/><stop offset="0.7128" stop-color="#ff0056"/><stop offset="0.8959" stop-color="#ff0038"/><stop offset="0.9992" stop-color="#ff002d"/></linearGradient><linearGradient id="g85" gradientUnits="userSpaceOnUse" x1="0" x2="639"><stop offset="0.0008" stop-color="#00c1ff"/><stop offset="0.2449" stop-color="#027cff"/><stop offset="0.3732" stop-color="#ae52ff"/><stop offset="0.4296" stop-color="#ff3dfe"/><stop offset="0.4703" stop-color="#ff25cd"/><stop offset="0.5250" stop-color="#ff10a1"/><stop offset="0.5955" stop-color="#ff007c"/><stop offset="0.7081" stop-color="#ff0059"/><stop offset="0.8865" stop-color="#ff003a"/><stop offset="0.9992" stop-color="#ff002e"/></linearGradient><linearGradient id="g86" gradientUnits="userSpaceOnUse" x1="0" x2="639"><stop offset="0.0008" stop-color="#00bdff"/><stop offset="0.2449" stop-color="#0179ff"/><stop offset="0.3764" stop-color="#af4eff"/><stop offset="0.4327" stop-color="#ff3afe"/><stop offset="0.4734" stop-color="#ff23cd"/><stop offset="0.5297" stop-color="#ff0da1"/><stop offset="0.5939" stop-color="#ff007f"/><stop offset="0.7050" stop-color="#ff005b"/><stop offset="0.8787" stop-color="#ff003c"/><stop offset="0.9992" stop-color="#ff002f"/></linearGradient><linearGradient id="g87" gradientUnits="userSpaceOnUse" x1="0" x2="639"><stop offset="0.0008" stop-color="#00baff"/><stop offset="0.2465" stop-color="#0276ff"/><stop offset="0.3795" stop-color="#b04bff"/><stop offset="0.4358" stop-color="#ff37ff"/><stop offset="0.4781" stop-color="#ff20cc"/><stop offset="0.5360" stop-color="#ff0b9f"/><stop offset="0.5908" stop-color="#ff0083"/><stop offset="0.6987" stop-color="#ff005e"/><stop offset="0.8678" stop-color="#ff003f"/><stop offset="0.9992" stop-color="#ff0030"/></linearGradient><linearGradient id="g88" gradientUnits="userSpaceOnUse" x1="0" x2="639"><stop offset="0.0008" stop-color="#00b7ff"/><stop offset="0.2465" stop-color="#0273ff"/><stop offset="0.3811" stop-color="#af48ff"/><stop offset="0.4390" stop-color="#ff34ff"/><stop offset="0.4812" stop-color="#ff1dcd"/><stop offset="0.5391" stop-color="#ff09a0"/><stop offset="0.5892" stop-color="#ff0086"/><stop offset="0.6956" stop-color="#ff0061"/><stop offset="0.8599" stop-color="#ff0041"/><stop offset="0.9992" stop-color="#ff0031"/></linearGradient><linearGradient id="g89" gradientUnits="userSpaceOnUse" x1="0" x2="639"><stop offset="0.0008" stop-color="#00b3ff"/><stop offset="0.2465" stop-color="#0171ff"/><stop offset="0.3826" stop-color="#ae45ff"/><stop offset="0.4437" stop-color="#ff30fc"/><stop offset="0.4875" stop-color="#ff1acb"/><stop offset="0.5469" stop-color="#ff069e"/><stop offset="0.5892" stop-color="#ff0088"/><stop offset="0.6941" stop-color="#ff0063"/><stop offset="0.8568" stop-color="#ff0043"/><stop offset="0.9992" stop-color="#ff0032"/></linearGradient><linearGradient id="g90" gradientUnits="userSpaceOnUse" x1="0" x2="639"><stop offset="0.0008" stop-color="#00b0ff"/><stop offset="0.2480" stop-color="#026eff"/><stop offset="0.3858" stop-color="#af42ff"/><stop offset="0.4468" stop-color="#ff2dfc"/><stop offset="0.4906" stop-color="#ff18cb"/><stop offset="0.5501" stop-color="#ff059f"/><stop offset="0.5923" stop-color="#ff0089"/><stop offset="0.6972" stop-color="#ff0064"/><stop offset="0.8599" stop-color="#ff0044"/><stop offset="0.9992" stop-color="#ff0033"/></linearGradient><linearGradient id="g91" gradientUnits="userSpaceOnUse" x1="0" x2="639"><stop offset="0.0008" stop-color="#00adff"/><stop offset="0.2480" stop-color="#026bff"/><stop offset="0.3873" stop-color="#ae40ff"/><stop offset="0.4499" stop-color="#ff2afd"/><stop offset="0.4937" stop-color="#ff16cc"/><stop offset="0.5548" stop-color="#ff039f"/><stop offset="0.6408" stop-color="#ff0077"/><stop offset="0.7707" stop-color="#ff0054"/><stop offset="0.9773" stop-color="#ff0036"/><stop offset="0.9992" stop-color="#ff0034"/></linearGradient><linearGradient id="g92" gradientUnits="userSpaceOnUse" x1="0" x2="639"><stop offset="0.0008" stop-color="#00aaff"/><stop offset="0.2480" stop-color="#0169ff"/><stop offset="0.3905" stop-color="#af3dff"/><stop offset="0.4531" stop-color="#ff27fd"/><stop offset="0.4984" stop-color="#ff13cb"/><stop offset="0.5610" stop-color="#ff019e"/><stop offset="0.6502" stop-color="#ff0076"/><stop offset="0.7833" stop-color="#ff0053"/><stop offset="0.9945" stop-color="#ff0036"/><stop offset="0.9992" stop-color="#ff0035"/></linearGradient><linearGradient id="g93" gradientUnits="userSpaceOnUse" x1="0" x2="639"><stop offset="0.0008" stop-color="#00a7ff"/><stop offset="0.2496" stop-color="#0266ff"/><stop offset="0.3936" stop-color="#b03aff"/><stop offset="0.4562" stop-color="#ff25fd"/><stop offset="0.5016" stop-color="#ff11cc"/><stop offset="0.5642" stop-color="#ff009f"/><stop offset="0.6534" stop-color="#ff0077"/><stop offset="0.7864" stop-color="#ff0054"/><stop offset="0.9977" stop-color="#ff0036"/><stop offset="0.9992" stop-color="#ff0036"/></linearGradient><linearGradient id="g94" gradientUnits="userSpaceOnUse" x1="0" x2="639"><stop offset="0.0008" stop-color="#00a4ff"/><stop offset="0.2496" stop-color="#0264ff"/><stop offset="0.3951" stop-color="#ae38ff"/><stop offset="0.4593" stop-color="#ff22fd"/><stop offset="0.5047" stop-color="#ff0fcc"/><stop offset="0.5673" stop-color="#ff00a0"/><stop offset="0.6565" stop-color="#ff0078"/><stop offset="0.7895" stop-color="#ff0055"/><stop offset="0.9992" stop-color="#ff0037"/></linearGradient><linearGradient id="g95" gradientUnits="userSpaceOnUse" x1="0" x2="639"><stop offset="0.0008" stop-color="#00a1ff"/><stop offset="0.2496" stop-color="#0161ff"/><stop offset="0.3967" stop-color="#ad35ff"/><stop offset="0.4624" stop-color="#ff20fd"/><stop offset="0.5094" stop-color="#ff0dcb"/><stop offset="0.5642" stop-color="#ff00a4"/><stop offset="0.6518" stop-color="#ff007c"/><stop offset="0.7817" stop-color="#ff0058"/><stop offset="0.9867" stop-color="#ff0039"/><stop offset="0.9992" stop-color="#ff0038"/></linearGradient><linearGradient id="g96" gradientUnits="userSpaceOnUse" x1="0" x2="639"><stop offset="0.0008" stop-color="#009fff"/><stop offset="0.2512" stop-color="#025fff"/><stop offset="0.3998" stop-color="#ae33ff"/><stop offset="0.4656" stop-color="#ff1dfd"/><stop offset="0.5125" stop-color="#ff0bcc"/><stop offset="0.5626" stop-color="#ff00a8"/><stop offset="0.6487" stop-color="#ff007f"/><stop offset="0.7754" stop-color="#ff005b"/><stop offset="0.9742" stop-color="#ff003c"/><stop offset="0.9992" stop-color="#ff0039"/></linearGradient><linearGradient id="g97" gradientUnits="userSpaceOnUse" x1="0" x2="639"><stop offset="0.0008" stop-color="#009cff"/><stop offset="0.2512" stop-color="#025dff"/><stop offset="0.4014" stop-color="#ad30ff"/><stop offset="0.4687" stop-color="#ff1bfd"/><stop offset="0.5172" stop-color="#ff09cb"/><stop offset="0.5610" stop-color="#ff00ab"/><stop offset="0.6455" stop-color="#ff0082"/><stop offset="0.7692" stop-color="#ff005e"/><stop offset="0.9632" stop-color="#ff003e"/><stop offset="0.9992" stop-color="#ff003a"/></linearGradient><linearGradient id="g98" gradientUnits="userSpaceOnUse" x1="0" x2="639"><stop offset="0.0008" stop-color="#0099ff"/><stop offset="0.2512" stop-color="#015aff"/><stop offset="0.4045" stop-color="#ae2eff"/><stop offset="0.4718" stop-color="#ff18fd"/><stop offset="0.5203" stop-color="#ff07cc"/><stop offset="0.5595" stop-color="#ff00af"/><stop offset="0.6424" stop-color="#ff0085"/><stop offset="0.7645" stop-color="#ff0060"/><stop offset="0.9538" stop-color="#ff0040"/><stop offset="0.9992" stop-color="#ff003b"/></linearGradient><linearGradient id="g99" gradientUnits="userSpaceOnUse" x1="0" x2="639"><stop offset="0.0008" stop-color="#0097ff"/><stop offset="0.2527" stop-color="#0258ff"/><stop offset="0.4077" stop-color="#af2bff"/><stop offset="0.4750" stop-color="#ff16fd"/><stop offset="0.5235" stop-color="#ff05cc"/><stop offset="0.5595" stop-color="#ff00b2"/><stop offset="0.6408" stop-color="#ff0088"/><stop offset="0.7598" stop-color="#ff0063"/><stop offset="0.9444" stop-color="#ff0043"/><stop offset="0.9992" stop-color="#ff003c"/></linearGradient><linearGradient id="g100" gradientUnits="userSpaceOnUse" x1="0" x2="639"><stop offset="0.0008" stop-color="#0094ff"/><stop offset="0.2527" stop-color="#0256ff"/><stop offset="0.4092" stop-color="#ae29ff"/><stop offset="0.4781" stop-color="#ff14fd"/><stop offset="0.5282" stop-color="#ff03cb"/><stop offset="0.5970" stop-color="#ff009e"/><stop offset="0.6941" stop-color="#ff0077"/><stop offset="0.8396" stop-color="#ff0054"/><stop offset="0.9992" stop-color="#ff003d"/></linearGradient><linearGradient id="g101" gradientUnits="userSpaceOnUse" x1="0" x2="639"><stop offset="0.0008" stop-color="#0092ff"/><stop offset="0.2527" stop-color="#0154ff"/><stop offset="0.4108" stop-color="#ad27ff"/><stop offset="0.4812" stop-color="#ff12fd"/><stop offset="0.5313" stop-color="#ff01cc"/><stop offset="0.6002" stop-color="#ff009f"/><stop offset="0.6987" stop-color="#ff0077"/><stop offset="0.8459" stop-color="#ff0054"/><stop offset="0.9992" stop-color="#ff003e"/></linearGradient><linearGradient id="g102" gradientUnits="userSpaceOnUse" x1="0" x2="639"><stop offset="0.0008" stop-color="#0090ff"/><stop offset="0.2543" stop-color="#0252ff"/><stop offset="0.4139" stop-color="#ae25ff"/><stop offset="0.4844" stop-color="#ff0ffd"/><stop offset="0.5344" stop-color="#ff00cc"/><stop offset="0.6033" stop-color="#ff00a0"/><stop offset="0.7019" stop-color="#ff0078"/><stop offset="0.8490" stop-color="#ff0055"/><stop offset="0.9992" stop-color="#ff003f"/></linearGradient><linearGradient id="g103" gradientUnits="userSpaceOnUse" x1="0" x2="639"><stop offset="0.0008" stop-color="#008dff"/><stop offset="0.2543" stop-color="#0250ff"/><stop offset="0.4171" stop-color="#af23ff"/><stop offset="0.4875" stop-color="#ff0dfd"/><stop offset="0.5391" stop-color="#ff00cc"/><stop offset="0.6095" stop-color="#ff009f"/><stop offset="0.7097" stop-color="#ff0077"/><stop offset="0.8599" stop-color="#ff0054"/><stop offset="0.9992" stop-color="#ff0040"/></linearGradient><linearGradient id="g104" gradientUnits="userSpaceOnUse" x1="0" x2="639"><stop offset="0.0008" stop-color="#008bff"/><stop offset="0.2543" stop-color="#014eff"/><stop offset="0.4186" stop-color="#ae21ff"/><stop offset="0.4906" stop-color="#ff0bfd"/><stop offset="0.5360" stop-color="#ff00d1"/><stop offset="0.6049" stop-color="#ff00a4"/><stop offset="0.7019" stop-color="#ff007c"/><stop offset="0.8459" stop-color="#ff0058"/><stop offset="0.9992" stop-color="#ff0041"/></linearGradient><linearGradient id="g105" gradientUnits="userSpaceOnUse" x1="0" x2="639"><stop offset="0.0008" stop-color="#0089ff"/><stop offset="0.2559" stop-color="#024cff"/><stop offset="0.4218" stop-color="#af1fff"/><stop offset="0.4937" stop-color="#ff09fd"/><stop offset="0.5344" stop-color="#ff00d5"/><stop offset="0.6017" stop-color="#ff00a8"/><stop offset="0.6972" stop-color="#ff007f"/><stop offset="0.8380" stop-color="#ff005b"/><stop offset="0.9992" stop-color="#ff0042"/></linearGradient><linearGradient id="g106" gradientUnits="userSpaceOnUse" x1="0" x2="639"><stop offset="0.0008" stop-color="#0087ff"/><stop offset="0.2559" stop-color="#024aff"/><stop offset="0.4233" stop-color="#ae1dff"/><stop offset="0.4969" stop-color="#ff07fd"/><stop offset="0.5329" stop-color="#ff00da"/><stop offset="0.5986" stop-color="#ff00ac"/><stop offset="0.6909" stop-color="#ff0083"/><stop offset="0.8271" stop-color="#ff005f"/><stop offset="0.9992" stop-color="#ff0044"/></linearGradient><linearGradient id="g107" gradientUnits="userSpaceOnUse" x1="0" x2="639"><stop offset="0.0008" stop-color="#0084ff"/><stop offset="0.2559" stop-color="#0149ff"/><stop offset="0.4249" stop-color="#ad1bff"/><stop offset="0.5000" stop-color="#ff05fd"/><stop offset="0.5329" stop-color="#ff00dd"/><stop offset="0.5986" stop-color="#ff00ae"/><stop offset="0.6909" stop-color="#ff0085"/><stop offset="0.8271" stop-color="#ff0060"/><stop offset="0.9992" stop-color="#ff0045"/></linearGradient><linearGradient id="g108" gradientUnits="userSpaceOnUse" x1="0" x2="639"><stop offset="0.0008" stop-color="#0082ff"/><stop offset="0.2574" stop-color="#0247ff"/><stop offset="0.4280" stop-color="#ae19ff"/><stop offset="0.5031" stop-color="#ff03fd"/><stop offset="0.5516" stop-color="#ff00d0"/><stop offset="0.6236" stop-color="#ff00a3"/><stop offset="0.7254" stop-color="#ff007b"/><stop offset="0.8772" stop-color="#ff0058"/><stop offset="0.9992" stop-color="#ff0046"/></linearGradient><linearGradient id="g109" gradientUnits="userSpaceOnUse" x1="0" x2="639"><stop offset="0.0008" stop-color="#0080ff"/><stop offset="0.2574" stop-color="#0245ff"/><stop offset="0.4311" stop-color="#af17ff"/><stop offset="0.5063" stop-color="#ff01fd"/><stop offset="0.5610" stop-color="#ff00cc"/><stop offset="0.6362" stop-color="#ff009f"/><stop offset="0.7426" stop-color="#ff0078"/><stop offset="0.9022" stop-color="#ff0055"/><stop offset="0.9992" stop-color="#ff0047"/></linearGradient><linearGradient id="g110" gradientUnits="userSpaceOnUse" x1="0" x2="639"><stop offset="0.0008" stop-color="#007eff"/><stop offset="0.2574" stop-color="#0143ff"/><stop offset="0.4327" stop-color="#ae16ff"/><stop offset="0.5094" stop-color="#ff00fd"/><stop offset="0.5642" stop-color="#ff00cc"/><stop offset="0.6393" stop-color="#ff00a0"/><stop offset="0.7473" stop-color="#ff0078"/><stop offset="0.9085" stop-color="#ff0055"/><stop offset="0.9992" stop-color="#ff0048"/></linearGradient><linearGradient id="g111" gradientUnits="userSpaceOnUse" x1="0" x2="639"><stop offset="0.0008" stop-color="#007cff"/><stop offset="0.2590" stop-color="#0242ff"/><stop offset="0.4358" stop-color="#af14ff"/><stop offset="0.5125" stop-color="#ff00fe"/><stop offset="0.5689" stop-color="#ff00cc"/><stop offset="0.6455" stop-color="#ff009f"/><stop offset="0.7551" stop-color="#ff0077"/><stop offset="0.9194" stop-color="#ff0054"/><stop offset="0.9992" stop-color="#ff0049"/></linearGradient><linearGradient id="g112" gradientUnits="userSpaceOnUse" x1="0" x2="639"><stop offset="0.0008" stop-color="#007aff"/><stop offset="0.2590" stop-color="#0240ff"/><stop offset="0.4374" stop-color="#ae12ff"/><stop offset="0.5125" stop-color="#fd00ff"/><stop offset="0.5798" stop-color="#ff00c7"/><stop offset="0.6612" stop-color="#ff009a"/><stop offset="0.7770" stop-color="#ff0073"/><stop offset="0.9507" stop-color="#ff0051"/><stop offset="0.9992" stop-color="#ff004a"/></linearGradient><linearGradient id="g113" gradientUnits="userSpaceOnUse" x1="0" x2="639"><stop offset="0.0008" stop-color="#0078ff"/><stop offset="0.2590" stop-color="#013fff"/><stop offset="0.4390" stop-color="#ad11ff"/><stop offset="0.5094" stop-color="#f600ff"/><stop offset="0.5203" stop-color="#ff00fc"/><stop offset="0.5782" stop-color="#ff00ca"/><stop offset="0.6581" stop-color="#ff009e"/><stop offset="0.7707" stop-color="#ff0076"/><stop offset="0.9397" stop-color="#ff0053"/><stop offset="0.9992" stop-color="#ff004b"/></linearGradient><linearGradient id="g114" gradientUnits="userSpaceOnUse" x1="0" x2="639"><stop offset="0.0008" stop-color="#0076ff"/><stop offset="0.2606" stop-color="#023dff"/><stop offset="0.4437" stop-color="#b00eff"/><stop offset="0.5063" stop-color="#f000ff"/><stop offset="0.5235" stop-color="#ff00fc"/><stop offset="0.5814" stop-color="#ff00cb"/><stop offset="0.6612" stop-color="#ff009e"/><stop offset="0.7754" stop-color="#ff0076"/><stop offset="0.9460" stop-color="#ff0054"/><stop offset="0.9992" stop-color="#ff004c"/></linearGradient><linearGradient id="g115" gradientUnits="userSpaceOnUse" x1="0" x2="639"><stop offset="0.0008" stop-color="#0075ff"/><stop offset="0.2606" stop-color="#023bff"/><stop offset="0.4452" stop-color="#af0dff"/><stop offset="0.5031" stop-color="#ea00ff"/><stop offset="0.5250" stop-color="#ff00fe"/><stop offset="0.5829" stop-color="#ff00cc"/><stop offset="0.6628" stop-color="#ff00a0"/><stop offset="0.7770" stop-color="#ff0078"/><stop offset="0.9476" stop-color="#ff0054"/><stop offset="0.9992" stop-color="#ff004d"/></linearGradient><linearGradient id="g116" gradientUnits="userSpaceOnUse" x1="0" x2="639"><stop offset="0.0008" stop-color="#0073ff"/><stop offset="0.2621" stop-color="#033aff"/><stop offset="0.4484" stop-color="#b00bff"/><stop offset="0.5016" stop-color="#e500ff"/><stop offset="0.5282" stop-color="#ff00fe"/><stop offset="0.5876" stop-color="#ff00cc"/><stop offset="0.6690" stop-color="#ff009f"/><stop offset="0.7848" stop-color="#ff0077"/><stop offset="0.9585" stop-color="#ff0054"/><stop offset="0.9992" stop-color="#ff004e"/></linearGradient><linearGradient id="g117" gradientUnits="userSpaceOnUse" x1="0" x2="639"><stop offset="0.0008" stop-color="#0071ff"/><stop offset="0.2621" stop-color="#0238ff"/><stop offset="0.4499" stop-color="#af0aff"/><stop offset="0.4984" stop-color="#df00ff"/><stop offset="0.5313" stop-color="#ff00fe"/><stop offset="0.5908" stop-color="#ff00cc"/><stop offset="0.6721" stop-color="#ff009f"/><stop offset="0.7879" stop-color="#ff0078"/><stop offset="0.9617" stop-color="#ff0055"/><stop offset="0.9992" stop-color="#ff004f"/></linearGradient><linearGradient id="g118" gradientUnits="userSpaceOnUse" x1="0" x2="639"><stop offset="0.0008" stop-color="#006fff"/><stop offset="0.2621" stop-color="#0237ff"/><stop offset="0.4515" stop-color="#ae08ff"/><stop offset="0.4969" stop-color="#db00ff"/><stop offset="0.5344" stop-color="#ff00fe"/><stop offset="0.5939" stop-color="#ff00cd"/><stop offset="0.6753" stop-color="#ff00a0"/><stop offset="0.7926" stop-color="#ff0078"/><stop offset="0.9664" stop-color="#ff0055"/><stop offset="0.9992" stop-color="#ff0050"/></linearGradient><linearGradient id="g119" gradientUnits="userSpaceOnUse" x1="0" x2="639"><stop offset="0.0008" stop-color="#006eff"/><stop offset="0.2637" stop-color="#0235ff"/><stop offset="0.4546" stop-color="#af07ff"/><stop offset="0.4953" stop-color="#d600ff"/><stop offset="0.5376" stop-color="#ff00fe"/><stop offset="0.5986" stop-color="#ff00cc"/><stop offset="0.6815" stop-color="#ff009f"/><stop offset="0.8005" stop-color="#ff0077"/><stop offset="0.9773" stop-color="#ff0054"/><stop offset="0.9992" stop-color="#ff0051"/></linearGradient><linearGradient id="g120" gradientUnits="userSpaceOnUse" x1="0" x2="639"><stop offset="0.0008" stop-color="#006cff"/><stop offset="0.2637" stop-color="#0234ff"/><stop offset="0.4577" stop-color="#b005ff"/><stop offset="0.4969" stop-color="#d500ff"/><stop offset="0.5407" stop-color="#ff00fe"/><stop offset="0.6017" stop-color="#ff00cc"/><stop offset="0.6862" stop-color="#ff009f"/><stop offset="0.8067" stop-color="#ff0077"/><stop offset="0.9867" stop-color="#ff0054"/><stop offset="0.9992" stop-color="#ff0052"/></linearGradient><linearGradient id="g121" gradientUnits="userSpaceOnUse" x1="0" x2="639"><stop offset="0.0008" stop-color="#006aff"/><stop offset="0.2637" stop-color="#0233ff"/><stop offset="0.4593" stop-color="#af04ff"/><stop offset="0.5031" stop-color="#d800ff"/><stop offset="0.5454" stop-color="#ff00fc"/><stop offset="0.6080" stop-color="#ff00cb"/><stop offset="0.6941" stop-color="#ff009e"/><stop offset="0.8161" stop-color="#ff0076"/><stop offset="0.9992" stop-color="#ff0053"/></linearGradient><linearGradient id="g122" gradientUnits="userSpaceOnUse" x1="0" x2="639"><stop offset="0.0008" stop-color="#0069ff"/><stop offset="0.2653" stop-color="#0231ff"/><stop offset="0.4624" stop-color="#b002ff"/><stop offset="0.5469" stop-color="#ff00fe"/><stop offset="0.6095" stop-color="#ff00cc"/><stop offset="0.6956" stop-color="#ff009f"/><stop offset="0.8177" stop-color="#ff0077"/><stop offset="0.9992" stop-color="#ff0054"/></linearGradient><linearGradient id="g123" gradientUnits="userSpaceOnUse" x1="0" x2="639"><stop offset="0.0008" stop-color="#0067ff"/><stop offset="0.2653" stop-color="#0230ff"/><stop offset="0.4640" stop-color="#af01ff"/><stop offset="0.5516" stop-color="#ff00fc"/><stop offset="0.6142" stop-color="#ff00cb"/><stop offset="0.7003" stop-color="#ff009f"/><stop offset="0.8239" stop-color="#ff0077"/><stop offset="0.9992" stop-color="#ff0056"/></linearGradient><linearGradient id="g124" gradientUnits="userSpaceOnUse" x1="0" x2="639"><stop offset="0.0008" stop-color="#0065ff"/><stop offset="0.2653" stop-color="#022fff"/><stop offset="0.4656" stop-color="#ae00ff"/><stop offset="0.5548" stop-color="#ff00fc"/><stop offset="0.6189" stop-color="#ff00cb"/><stop offset="0.7066" stop-color="#ff009e"/><stop offset="0.8318" stop-color="#ff0077"/><stop offset="0.9992" stop-color="#ff0057"/></linearGradient><linearGradient id="g125" gradientUnits="userSpaceOnUse" x1="0" x2="639"><stop offset="0.0008" stop-color="#0064ff"/><stop offset="0.2668" stop-color="#022dff"/><stop offset="0.4687" stop-color="#af00ff"/><stop offset="0.5579" stop-color="#ff00fd"/><stop offset="0.6221" stop-color="#ff00cb"/><stop offset="0.7113" stop-color="#ff009e"/><stop offset="0.8380" stop-color="#ff0076"/><stop offset="0.9992" stop-color="#ff0058"/></linearGradient><linearGradient id="g126" gradientUnits="userSpaceOnUse" x1="0" x2="639"><stop offset="0.0008" stop-color="#0062ff"/><stop offset="0.2668" stop-color="#022cff"/><stop offset="0.4703" stop-color="#ae00ff"/><stop offset="0.5610" stop-color="#ff00fd"/><stop offset="0.6268" stop-color="#ff00cb"/><stop offset="0.7160" stop-color="#ff009e"/><stop offset="0.8443" stop-color="#ff0076"/><stop offset="0.9992" stop-color="#ff0059"/></linearGradient><linearGradient id="g127" gradientUnits="userSpaceOnUse" x1="0" x2="639"><stop offset="0.0008" stop-color="#0061ff"/><stop offset="0.2668" stop-color="#022bff"/><stop offset="0.4671" stop-color="#a900ff"/><stop offset="0.5642" stop-color="#ff00fd"/><stop offset="0.6299" stop-color="#ff00cb"/><stop offset="0.7207" stop-color="#ff009e"/><stop offset="0.8490" stop-color="#ff0077"/><stop offset="0.9992" stop-color="#ff005a"/></linearGradient><linearGradient id="g128" gradientUnits="userSpaceOnUse" x1="0" x2="639"><stop offset="0.0008" stop-color="#005fff"/><stop offset="0.2684" stop-color="#022aff"/><stop offset="0.4640" stop-color="#a400ff"/><stop offset="0.5673" stop-color="#ff00fd"/><stop offset="0.6330" stop-color="#ff00cb"/><stop offset="0.7238" stop-color="#ff009f"/><stop offset="0.8537" stop-color="#ff0077"/><stop offset="0.9992" stop-color="#ff005b"/></linearGradient><linearGradient id="g129" gradientUnits="userSpaceOnUse" x1="0" x2="639"><stop offset="0.0008" stop-color="#005eff"/><stop offset="0.2684" stop-color="#0229ff"/><stop offset="0.4609" stop-color="#a000ff"/><stop offset="0.5704" stop-color="#ff00fd"/><stop offset="0.6377" stop-color="#ff00cb"/><stop offset="0.7300" stop-color="#ff009e"/><stop offset="0.8615" stop-color="#ff0076"/><stop offset="0.9992" stop-color="#ff005c"/></linearGradient><linearGradient id="g130" gradientUnits="userSpaceOnUse" x1="0" x2="639"><stop offset="0.0008" stop-color="#005dff"/><stop offset="0.2684" stop-color="#0228ff"/><stop offset="0.4577" stop-color="#9b00ff"/><stop offset="0.5736" stop-color="#ff00fd"/><stop offset="0.6408" stop-color="#ff00cb"/><stop offset="0.7332" stop-color="#ff009f"/><stop offset="0.8646" stop-color="#ff0077"/><stop offset="0.9992" stop-color="#ff005d"/></linearGradient><linearGradient id="g131" gradientUnits="userSpaceOnUse" x1="0" x2="639"><stop offset="0.0008" stop-color="#005bff"/><stop offset="0.2700" stop-color="#0226ff"/><stop offset="0.4546" stop-color="#9700ff"/><stop offset="0.5767" stop-color="#ff00fd"/><stop offset="0.6440" stop-color="#ff00cc"/><stop offset="0.7363" stop-color="#ff009f"/><stop offset="0.8693" stop-color="#ff0077"/><stop offset="0.9992" stop-color="#ff005e"/></linearGradient><linearGradient id="g132" gradientUnits="userSpaceOnUse" x1="0" x2="639"><stop offset="0.0008" stop-color="#005aff"/><stop offset="0.2700" stop-color="#0225ff"/><stop offset="0.4515" stop-color="#9200ff"/><stop offset="0.5798" stop-color="#ff00fd"/><stop offset="0.6487" stop-color="#ff00cb"/><stop offset="0.7426" stop-color="#ff009f"/><stop offset="0.8772" stop-color="#ff0077"/><stop offset="0.9992" stop-color="#ff005f"/></linearGradient><linearGradient id="g133" gradientUnits="userSpaceOnUse" x1="0" x2="639"><stop offset="0.0008" stop-color="#0059ff"/><stop offset="0.2700" stop-color="#0224ff"/><stop offset="0.4499" stop-color="#8f00ff"/><stop offset="0.5829" stop-color="#ff00fd"/><stop offset="0.6518" stop-color="#ff00cb"/><stop offset="0.7473" stop-color="#ff009f"/><stop offset="0.8834" stop-color="#ff0077"/><stop offset="0.9992" stop-color="#ff0060"/></linearGradient><linearGradient id="g134" gradientUnits="userSpaceOnUse" x1="0" x2="639"><stop offset="0.0008" stop-color="#0057ff"/><stop offset="0.2715" stop-color="#0223ff"/><stop offset="0.4468" stop-color="#8b00ff"/><stop offset="0.5861" stop-color="#ff00fd"/><stop offset="0.6565" stop-color="#ff00cb"/><stop offset="0.7520" stop-color="#ff009e"/><stop offset="0.8881" stop-color="#ff0077"/><stop offset="0.9992" stop-color="#ff0061"/></linearGradient><linearGradient id="g135" gradientUnits="userSpaceOnUse" x1="0" x2="639"><stop offset="0.0008" stop-color="#0056ff"/><stop offset="0.2715" stop-color="#0222ff"/><stop offset="0.4437" stop-color="#8700ff"/><stop offset="0.5892" stop-color="#ff00fd"/><stop offset="0.6596" stop-color="#ff00cb"/><stop offset="0.7567" stop-color="#ff009e"/><stop offset="0.8944" stop-color="#ff0077"/><stop offset="0.9992" stop-color="#ff0062"/></linearGradient><linearGradient id="g136" gradientUnits="userSpaceOnUse" x1="0" x2="639"><stop offset="0.0008" stop-color="#0055ff"/><stop offset="0.2715" stop-color="#0221ff"/><stop offset="0.4405" stop-color="#8300ff"/><stop offset="0.5923" stop-color="#ff00fd"/><stop offset="0.6628" stop-color="#ff00cc"/><stop offset="0.7598" stop-color="#ff009f"/><stop offset="0.8975" stop-color="#ff0077"/><stop offset="0.9992" stop-color="#ff0064"/></linearGradient><linearGradient id="g137" gradientUnits="userSpaceOnUse" x1="0" x2="639"><stop offset="0.0008" stop-color="#0053ff"/><stop offset="0.2731" stop-color="#0220ff"/><stop offset="0.4374" stop-color="#7f00ff"/><stop offset="0.5955" stop-color="#ff00fd"/><stop offset="0.6674" stop-color="#ff00cb"/><stop offset="0.7660" stop-color="#ff009e"/><stop offset="0.9069" stop-color="#ff0076"/><stop offset="0.9992" stop-color="#ff0065"/></linearGradient><linearGradient id="g138" gradientUnits="userSpaceOnUse" x1="0" x2="639"><stop offset="0.0008" stop-color="#0052ff"/><stop offset="0.2731" stop-color="#021fff"/><stop offset="0.4343" stop-color="#7b00ff"/><stop offset="0.5986" stop-color="#ff00fd"/><stop offset="0.6706" stop-color="#ff00cb"/><stop offset="0.7692" stop-color="#ff009f"/><stop offset="0.9100" stop-color="#ff0077"/><stop offset="0.9992" stop-color="#ff0066"/></linearGradient><linearGradient id="g139" gradientUnits="userSpaceOnUse" x1="0" x2="639"><stop offset="0.0008" stop-color="#0051ff"/><stop offset="0.2731" stop-color="#021eff"/><stop offset="0.4311" stop-color="#7700ff"/><stop offset="0.6017" stop-color="#ff00fd"/><stop offset="0.6737" stop-color="#ff00cc"/><stop offset="0.7739" stop-color="#ff009f"/><stop offset="0.9163" stop-color="#ff0077"/><stop offset="0.9992" stop-color="#ff0067"/></linearGradient><linearGradient id="g140" gradientUnits="userSpaceOnUse" x1="0" x2="639"><stop offset="0.0008" stop-color="#0050ff"/><stop offset="0.2746" stop-color="#021dff"/><stop offset="0.4280" stop-color="#7300ff"/><stop offset="0.6049" stop-color="#ff00fd"/><stop offset="0.6784" stop-color="#ff00cb"/><stop offset="0.7786" stop-color="#ff009f"/><stop offset="0.9225" stop-color="#ff0077"/><stop offset="0.9992" stop-color="#ff0068"/></linearGradient><linearGradient id="g141" gradientUnits="userSpaceOnUse" x1="0" x2="639"><stop offset="0.0008" stop-color="#004eff"/><stop offset="0.2746" stop-color="#021cff"/><stop offset="0.4264" stop-color="#7100ff"/><stop offset="0.6080" stop-color="#ff00fd"/><stop offset="0.6815" stop-color="#ff00cc"/><stop offset="0.7833" stop-color="#ff009f"/><stop offset="0.9272" stop-color="#ff0077"/><stop offset="0.9992" stop-color="#ff0069"/></linearGradient><linearGradient id="g142" gradientUnits="userSpaceOnUse" x1="0" x2="639"><stop offset="0.0008" stop-color="#004dff"/><stop offset="0.2746" stop-color="#021bff"/><stop offset="0.4233" stop-color="#6d00ff"/><stop offset="0.6111" stop-color="#ff00fd"/><stop offset="0.6847" stop-color="#ff00cc"/><stop offset="0.7864" stop-color="#ff009f"/><stop offset="0.9319" stop-color="#ff0077"/><stop offset="0.9992" stop-color="#ff006a"/></linearGradient><linearGradient id="g143" gradientUnits="userSpaceOnUse" x1="0" x2="639"><stop offset="0.0008" stop-color="#004cff"/><stop offset="0.2762" stop-color="#021aff"/><stop offset="0.4202" stop-color="#6a00ff"/><stop offset="0.6142" stop-color="#ff00fd"/><stop offset="0.6894" stop-color="#ff00cb"/><stop offset="0.7926" stop-color="#ff009f"/><stop offset="0.9397" stop-color="#ff0077"/><stop offset="0.9992" stop-color="#ff006b"/></linearGradient><linearGradient id="g144" gradientUnits="userSpaceOnUse" x1="0" x2="639"><stop offset="0.0008" stop-color="#004bff"/><stop offset="0.2762" stop-color="#0219ff"/><stop offset="0.4171" stop-color="#6600ff"/><stop offset="0.6174" stop-color="#ff00fd"/><stop offset="0.6925" stop-color="#ff00cc"/><stop offset="0.7958" stop-color="#ff009f"/><stop offset="0.9429" stop-color="#ff0077"/><stop offset="0.9992" stop-color="#ff006c"/></linearGradient><linearGradient id="g145" gradientUnits="userSpaceOnUse" x1="0" x2="639"><stop offset="0.0008" stop-color="#004aff"/><stop offset="0.2762" stop-color="#0218ff"/><stop offset="0.4139" stop-color="#6300ff"/><stop offset="0.6205" stop-color="#ff00fd"/><stop offset="0.6972" stop-color="#ff00cb"/><stop offset="0.8020" stop-color="#ff009f"/><stop offset="0.9507" stop-color="#ff0077"/><stop offset="0.9992" stop-color="#ff006d"/></linearGradient><linearGradient id="g146" gradientUnits="userSpaceOnUse" x1="0" x2="639"><stop offset="0.0008" stop-color="#0049ff"/><stop offset="0.2778" stop-color="#0217ff"/><stop offset="0.4108" stop-color="#5f00ff"/><stop offset="0.6236" stop-color="#ff00fd"/><stop offset="0.7003" stop-color="#ff00cc"/><stop offset="0.8052" stop-color="#ff009f"/><stop offset="0.9554" stop-color="#ff0077"/><stop offset="0.9992" stop-color="#ff006e"/></linearGradient><linearGradient id="g147" gradientUnits="userSpaceOnUse" x1="0" x2="639"><stop offset="0.0008" stop-color="#0048ff"/><stop offset="0.2778" stop-color="#0217ff"/><stop offset="0.4077" stop-color="#5c00ff"/><stop offset="0.6268" stop-color="#ff00fd"/><stop offset="0.7034" stop-color="#ff00cc"/><stop offset="0.8099" stop-color="#ff009f"/><stop offset="0.9617" stop-color="#ff0077"/><stop offset="0.9992" stop-color="#ff0070"/></linearGradient><linearGradient id="g148" gradientUnits="userSpaceOnUse" x1="0" x2="639"><stop offset="0.0008" stop-color="#0047ff"/><stop offset="0.2793" stop-color="#0316ff"/><stop offset="0.4061" stop-color="#5a00ff"/><stop offset="0.6299" stop-color="#ff00fd"/><stop offset="0.7081" stop-color="#ff00cb"/><stop offset="0.8146" stop-color="#ff009f"/><stop offset="0.9664" stop-color="#ff0077"/><stop offset="0.9992" stop-color="#ff0071"/></linearGradient><linearGradient id="g149" gradientUnits="userSpaceOnUse" x1="0" x2="639"><stop offset="0.0008" stop-color="#0046ff"/><stop offset="0.2793" stop-color="#0215ff"/><stop offset="0.4030" stop-color="#5600ff"/><stop offset="0.6330" stop-color="#ff00fd"/><stop offset="0.7113" stop-color="#ff00cc"/><stop offset="0.8192" stop-color="#ff009f"/><stop offset="0.9726" stop-color="#ff0077"/><stop offset="0.9992" stop-color="#ff0072"/></linearGradient><linearGradient id="g150" gradientUnits="userSpaceOnUse" x1="0" x2="639"><stop offset="0.0008" stop-color="#0045ff"/><stop offset="0.2793" stop-color="#0214ff"/><stop offset="0.3998" stop-color="#5300ff"/><stop offset="0.6362" stop-color="#ff00fd"/><stop offset="0.7144" stop-color="#ff00cc"/><stop offset="0.8224" stop-color="#ff009f"/><stop offset="0.9757" stop-color="#ff0078"/><stop offset="0.9992" stop-color="#ff0073"/></linearGradient><linearGradient id="g151" gradientUnits="userSpaceOnUse" x1="0" x2="639"><stop offset="0.0008" stop-color="#0044ff"/><stop offset="0.2809" stop-color="#0313ff"/><stop offset="0.3967" stop-color="#5000ff"/><stop offset="0.6393" stop-color="#ff00fd"/><stop offset="0.7191" stop-color="#ff00cc"/><stop offset="0.8286" stop-color="#ff009f"/><stop offset="0.9851" stop-color="#ff0077"/><stop offset="0.9992" stop-color="#ff0074"/></linearGradient><linearGradient id="g152" gradientUnits="userSpaceOnUse" x1="0" x2="639"><stop offset="0.0008" stop-color="#0043ff"/><stop offset="0.2809" stop-color="#0212ff"/><stop offset="0.3936" stop-color="#4d00ff"/><stop offset="0.6362" stop-color="#fc00ff"/><stop offset="0.6565" stop-color="#ff00f3"/><stop offset="0.7410" stop-color="#ff00c3"/><stop offset="0.8584" stop-color="#ff0097"/><stop offset="0.9992" stop-color="#ff0075"/></linearGradient><linearGradient id="g153" gradientUnits="userSpaceOnUse" x1="0" x2="639"><stop offset="0.0008" stop-color="#0042ff"/><stop offset="0.2809" stop-color="#0212ff"/><stop offset="0.3920" stop-color="#4b00ff"/><stop offset="0.6377" stop-color="#fb00ff"/><stop offset="0.6518" stop-color="#ff00f9"/><stop offset="0.7347" stop-color="#ff00c8"/><stop offset="0.8490" stop-color="#ff009b"/><stop offset="0.9992" stop-color="#ff0076"/></linearGradient><linearGradient id="g154" gradientUnits="userSpaceOnUse" x1="0" x2="639"><stop offset="0.0008" stop-color="#0041ff"/><stop offset="0.2825" stop-color="#0211ff"/><stop offset="0.3889" stop-color="#4800ff"/><stop offset="0.6362" stop-color="#f700ff"/><stop offset="0.6518" stop-color="#ff00fb"/><stop offset="0.7347" stop-color="#ff00c9"/><stop offset="0.8490" stop-color="#ff009d"/><stop offset="0.9992" stop-color="#ff0077"/></linearGradient><linearGradient id="g155" gradientUnits="userSpaceOnUse" x1="0" x2="639"><stop offset="0.0008" stop-color="#0040ff"/><stop offset="0.2825" stop-color="#0210ff"/><stop offset="0.3858" stop-color="#4500ff"/><stop offset="0.6346" stop-color="#f400ff"/><stop offset="0.6534" stop-color="#ff00fc"/><stop offset="0.7363" stop-color="#ff00cb"/><stop offset="0.8490" stop-color="#ff009e"/><stop offset="0.9992" stop-color="#ff0078"/></linearGradient><linearGradient id="g156" gradientUnits="userSpaceOnUse" x1="0" x2="639"><stop offset="0.0008" stop-color="#003fff"/><stop offset="0.2825" stop-color="#020fff"/><stop offset="0.3826" stop-color="#4200ff"/><stop offset="0.6346" stop-color="#f100ff"/><stop offset="0.6565" stop-color="#ff00fc"/><stop offset="0.7394" stop-color="#ff00cb"/><stop offset="0.8537" stop-color="#ff009e"/><stop offset="0.9992" stop-color="#ff007a"/></linearGradient><linearGradient id="g157" gradientUnits="userSpaceOnUse" x1="0" x2="639"><stop offset="0.0008" stop-color="#003eff"/><stop offset="0.2840" stop-color="#020eff"/><stop offset="0.3795" stop-color="#3f00ff"/><stop offset="0.6330" stop-color="#ee00ff"/><stop offset="0.6596" stop-color="#ff00fc"/><stop offset="0.7426" stop-color="#ff00cb"/><stop offset="0.8568" stop-color="#ff009f"/><stop offset="0.9992" stop-color="#ff007b"/></linearGradient><linearGradient id="g158" gradientUnits="userSpaceOnUse" x1="0" x2="639"><stop offset="0.0008" stop-color="#003dff"/><stop offset="0.2840" stop-color="#020eff"/><stop offset="0.3764" stop-color="#3d00ff"/><stop offset="0.6330" stop-color="#ec00ff"/><stop offset="0.6628" stop-color="#ff00fc"/><stop offset="0.7473" stop-color="#ff00cb"/><stop offset="0.8631" stop-color="#ff009e"/><stop offset="0.9992" stop-color="#ff007c"/></linearGradient><linearGradient id="g159" gradientUnits="userSpaceOnUse" x1="0" x2="639"><stop offset="0.0008" stop-color="#003cff"/><stop offset="0.2840" stop-color="#020dff"/><stop offset="0.3748" stop-color="#3b00ff"/><stop offset="0.6330" stop-color="#ea00ff"/><stop offset="0.6659" stop-color="#ff00fc"/><stop offset="0.7504" stop-color="#ff00cb"/><stop offset="0.8662" stop-color="#ff009e"/><stop offset="0.9992" stop-color="#ff007d"/></linearGradient><linearGradient id="g160" gradientUnits="userSpaceOnUse" x1="0" x2="639"><stop offset="0.0008" stop-color="#003bff"/><stop offset="0.2856" stop-color="#020cff"/><stop offset="0.3717" stop-color="#3800ff"/><stop offset="0.6315" stop-color="#e700ff"/><stop offset="0.6690" stop-color="#ff00fd"/><stop offset="0.7535" stop-color="#ff00cb"/><stop offset="0.8709" stop-color="#ff009e"/><stop offset="0.9992" stop-color="#ff007e"/></linearGradient><linearGradient id="g161" gradientUnits="userSpaceOnUse" x1="0" x2="639"><stop offset="0.0008" stop-color="#003aff"/><stop offset="0.2856" stop-color="#020cff"/><stop offset="0.3685" stop-color="#3500ff"/><stop offset="0.6315" stop-color="#e500ff"/><stop offset="0.6721" stop-color="#ff00fd"/><stop offset="0.7582" stop-color="#ff00cb"/><stop offset="0.8756" stop-color="#ff009e"/><stop offset="0.9992" stop-color="#ff007f"/></linearGradient><linearGradient id="g162" gradientUnits="userSpaceOnUse" x1="0" x2="639"><stop offset="0.0008" stop-color="#0039ff"/><stop offset="0.2856" stop-color="#020bff"/><stop offset="0.3670" stop-color="#3400ff"/><stop offset="0.6315" stop-color="#e200ff"/><stop offset="0.6753" stop-color="#ff00fd"/><stop offset="0.7613" stop-color="#ff00cb"/><stop offset="0.8803" stop-color="#ff009e"/><stop offset="0.9992" stop-color="#ff0080"/></linearGradient><linearGradient id="g163" gradientUnits="userSpaceOnUse" x1="0" x2="639"><stop offset="0.0008" stop-color="#0038ff"/><stop offset="0.2872" stop-color="#020aff"/><stop offset="0.3638" stop-color="#3100ff"/><stop offset="0.6299" stop-color="#df00ff"/><stop offset="0.6784" stop-color="#ff00fd"/><stop offset="0.7660" stop-color="#ff00cb"/><stop offset="0.8865" stop-color="#ff009e"/><stop offset="0.9992" stop-color="#ff0081"/></linearGradient><linearGradient id="g164" gradientUnits="userSpaceOnUse" x1="0" x2="639"><stop offset="0.0008" stop-color="#0037ff"/><stop offset="0.2872" stop-color="#0209ff"/><stop offset="0.3607" stop-color="#2f00ff"/><stop offset="0.6299" stop-color="#dd00ff"/><stop offset="0.6815" stop-color="#ff00fd"/><stop offset="0.7692" stop-color="#ff00cb"/><stop offset="0.8897" stop-color="#ff009e"/><stop offset="0.9992" stop-color="#ff0083"/></linearGradient><linearGradient id="g165" gradientUnits="userSpaceOnUse" x1="0" x2="639"><stop offset="0.0008" stop-color="#0037ff"/><stop offset="0.2872" stop-color="#0209ff"/><stop offset="0.3592" stop-color="#2d00ff"/><stop offset="0.6299" stop-color="#dc00ff"/><stop offset="0.6847" stop-color="#ff00fd"/><stop offset="0.7723" stop-color="#ff00cb"/><stop offset="0.8928" stop-color="#ff009f"/><stop offset="0.9992" stop-color="#ff0084"/></linearGradient><linearGradient id="g166" gradientUnits="userSpaceOnUse" x1="0" x2="639"><stop offset="0.0008" stop-color="#0036ff"/><stop offset="0.2887" stop-color="#0208ff"/><stop offset="0.3576" stop-color="#2b00ff"/><stop offset="0.6299" stop-color="#da00ff"/><stop offset="0.6878" stop-color="#ff00fd"/><stop offset="0.7770" stop-color="#ff00cb"/><stop offset="0.8991" stop-color="#ff009e"/><stop offset="0.9992" stop-color="#ff0085"/></linearGradient><linearGradient id="g167" gradientUnits="userSpaceOnUse" x1="0" x2="639"><stop offset="0.0008" stop-color="#0035ff"/><stop offset="0.2887" stop-color="#0207ff"/><stop offset="0.3545" stop-color="#2900ff"/><stop offset="0.6299" stop-color="#d800ff"/><stop offset="0.6909" stop-color="#ff00fd"/><stop offset="0.7801" stop-color="#ff00cb"/><stop offset="0.9022" stop-color="#ff009f"/><stop offset="0.9992" stop-color="#ff0086"/></linearGradient><linearGradient id="g168" gradientUnits="userSpaceOnUse" x1="0" x2="639"><stop offset="0.0008" stop-color="#0034ff"/><stop offset="0.2887" stop-color="#0207ff"/><stop offset="0.3529" stop-color="#2700ff"/><stop offset="0.6299" stop-color="#d600ff"/><stop offset="0.6941" stop-color="#ff00fd"/><stop offset="0.7833" stop-color="#ff00cb"/><stop offset="0.9069" stop-color="#ff009f"/><stop offset="0.9992" stop-color="#ff0087"/></linearGradient><linearGradient id="g169" gradientUnits="userSpaceOnUse" x1="0" x2="639"><stop offset="0.0008" stop-color="#0033ff"/><stop offset="0.2903" stop-color="#0206ff"/><stop offset="0.3529" stop-color="#2700ff"/><stop offset="0.6315" stop-color="#d500ff"/><stop offset="0.6972" stop-color="#ff00fd"/><stop offset="0.7879" stop-color="#ff00cb"/><stop offset="0.9116" stop-color="#ff009f"/><stop offset="0.9992" stop-color="#ff0088"/></linearGradient><linearGradient id="g170" gradientUnits="userSpaceOnUse" x1="0" x2="639"><stop offset="0.0008" stop-color="#0032ff"/><stop offset="0.2903" stop-color="#0206ff"/><stop offset="0.3513" stop-color="#2500ff"/><stop offset="0.6315" stop-color="#d300ff"/><stop offset="0.7003" stop-color="#ff00fd"/><stop offset="0.7911" stop-color="#ff00cb"/><stop offset="0.9163" stop-color="#ff009e"/><stop offset="0.9992" stop-color="#ff0089"/></linearGradient><linearGradient id="g171" gradientUnits="userSpaceOnUse" x1="0" x2="639"><stop offset="0.0008" stop-color="#0032ff"/><stop offset="0.2903" stop-color="#0205ff"/><stop offset="0.3513" stop-color="#2500ff"/><stop offset="0.6346" stop-color="#d400ff"/><stop offset="0.7034" stop-color="#ff00fd"/><stop offset="0.7958" stop-color="#ff00cb"/><stop offset="0.9225" stop-color="#ff009e"/><stop offset="0.9992" stop-color="#ff008b"/></linearGradient><linearGradient id="g172" gradientUnits="userSpaceOnUse" x1="0" x2="639"><stop offset="0.0008" stop-color="#0031ff"/><stop offset="0.2919" stop-color="#0204ff"/><stop offset="0.3560" stop-color="#2700ff"/><stop offset="0.6393" stop-color="#d500ff"/><stop offset="0.7066" stop-color="#ff00fd"/><stop offset="0.7989" stop-color="#ff00cb"/><stop offset="0.9257" stop-color="#ff009e"/><stop offset="0.9992" stop-color="#ff008c"/></linearGradient><linearGradient id="g173" gradientUnits="userSpaceOnUse" x1="0" x2="639"><stop offset="0.0008" stop-color="#0030ff"/><stop offset="0.2919" stop-color="#0204ff"/><stop offset="0.3638" stop-color="#2b00ff"/><stop offset="0.6487" stop-color="#d900ff"/><stop offset="0.7097" stop-color="#ff00fd"/><stop offset="0.8020" stop-color="#ff00cb"/><stop offset="0.9288" stop-color="#ff009f"/><stop offset="0.9992" stop-color="#ff008d"/></linearGradient><linearGradient id="g174" gradientUnits="userSpaceOnUse" x1="0" x2="639"><stop offset="0.0008" stop-color="#002fff"/><stop offset="0.2919" stop-color="#0203ff"/><stop offset="0.3889" stop-color="#3900ff"/><stop offset="0.6737" stop-color="#e800ff"/><stop offset="0.7128" stop-color="#ff00fd"/><stop offset="0.8067" stop-color="#ff00cb"/><stop offset="0.9351" stop-color="#ff009e"/><stop offset="0.9992" stop-color="#ff008e"/></linearGradient><linearGradient id="g175" gradientUnits="userSpaceOnUse" x1="0" x2="639"><stop offset="0.0008" stop-color="#002fff"/><stop offset="0.2934" stop-color="#0202ff"/><stop offset="0.5876" stop-color="#af00ff"/><stop offset="0.7160" stop-color="#ff00fd"/><stop offset="0.8099" stop-color="#ff00cb"/><stop offset="0.9382" stop-color="#ff009f"/><stop offset="0.9992" stop-color="#ff008f"/></linearGradient><linearGradient id="g176" gradientUnits="userSpaceOnUse" x1="0" x2="639"><stop offset="0.0008" stop-color="#002eff"/><stop offset="0.2934" stop-color="#0202ff"/><stop offset="0.5908" stop-color="#b000ff"/><stop offset="0.7191" stop-color="#ff00fd"/><stop offset="0.8130" stop-color="#ff00cc"/><stop offset="0.9429" stop-color="#ff009f"/><stop offset="0.9992" stop-color="#ff0090"/></linearGradient><linearGradient id="g177" gradientUnits="userSpaceOnUse" x1="0" x2="639"><stop offset="0.0008" stop-color="#002dff"/><stop offset="0.2934" stop-color="#0201ff"/><stop offset="0.5923" stop-color="#af00ff"/><stop offset="0.7222" stop-color="#ff00fd"/><stop offset="0.8177" stop-color="#ff00cb"/><stop offset="0.9491" stop-color="#ff009e"/><stop offset="0.9992" stop-color="#ff0091"/></linearGradient><linearGradient id="g178" gradientUnits="userSpaceOnUse" x1="0" x2="639"><stop offset="0.0008" stop-color="#002cff"/><stop offset="0.2950" stop-color="#0201ff"/><stop offset="0.5955" stop-color="#b000ff"/><stop offset="0.7254" stop-color="#ff00fd"/><stop offset="0.8208" stop-color="#ff00cb"/><stop offset="0.9523" stop-color="#ff009f"/><stop offset="0.9992" stop-color="#ff0093"/></linearGradient><linearGradient id="g179" gradientUnits="userSpaceOnUse" x1="0" x2="639"><stop offset="0.0008" stop-color="#002cff"/><stop offset="0.2950" stop-color="#0200ff"/><stop offset="0.5970" stop-color="#af00ff"/><stop offset="0.7285" stop-color="#ff00fd"/><stop offset="0.8239" stop-color="#ff00cc"/><stop offset="0.9554" stop-color="#ff009f"/><stop offset="0.9992" stop-color="#ff0094"/></linearGradient><linearGradient id="g180" gradientUnits="userSpaceOnUse" x1="0" x2="639"><stop offset="0.0008" stop-color="#002bff"/><stop offset="0.2950" stop-color="#0200ff"/><stop offset="0.5986" stop-color="#af00ff"/><stop offset="0.7316" stop-color="#ff00fd"/><stop offset="0.8286" stop-color="#ff00cb"/><stop offset="0.9617" stop-color="#ff009f"/><stop offset="0.9992" stop-color="#ff0095"/></linearGradient><linearGradient id="g181" gradientUnits="userSpaceOnUse" x1="0" x2="639"><stop offset="0.0008" stop-color="#002aff"/><stop offset="0.2966" stop-color="#0200ff"/><stop offset="0.6017" stop-color="#af00ff"/><stop offset="0.7347" stop-color="#ff00fd"/><stop offset="0.8318" stop-color="#ff00cc"/><stop offset="0.9648" stop-color="#ff009f"/><stop offset="0.9992" stop-color="#ff0096"/></linearGradient><linearGradient id="g182" gradientUnits="userSpaceOnUse" x1="0" x2="639"><stop offset="0.0008" stop-color="#002aff"/><stop offset="0.2966" stop-color="#0200ff"/><stop offset="0.6049" stop-color="#b000ff"/><stop offset="0.7379" stop-color="#ff00fd"/><stop offset="0.8365" stop-color="#ff00cb"/><stop offset="0.9710" stop-color="#ff009e"/><stop offset="0.9992" stop-color="#ff0097"/></linearGradient><linearGradient id="g183" gradientUnits="userSpaceOnUse" x1="0" x2="639"><stop offset="0.0008" stop-color="#0029ff"/><stop offset="0.2981" stop-color="#0300ff"/><stop offset="0.6080" stop-color="#b000ff"/><stop offset="0.7410" stop-color="#ff00fd"/><stop offset="0.8396" stop-color="#ff00cb"/><stop offset="0.9742" stop-color="#ff009f"/><stop offset="0.9992" stop-color="#ff0098"/></linearGradient><linearGradient id="g184" gradientUnits="userSpaceOnUse" x1="0" x2="639"><stop offset="0.0008" stop-color="#0028ff"/><stop offset="0.2981" stop-color="#0200ff"/><stop offset="0.6095" stop-color="#af00ff"/><stop offset="0.7441" stop-color="#ff00fd"/><stop offset="0.8427" stop-color="#ff00cc"/><stop offset="0.9789" stop-color="#ff009f"/><stop offset="0.9992" stop-color="#ff009a"/></linearGradient><linearGradient id="g185" gradientUnits="userSpaceOnUse" x1="0" x2="639"><stop offset="0.0008" stop-color="#0028ff"/><stop offset="0.2950" stop-color="#0000ff"/><stop offset="0.6080" stop-color="#ad00ff"/><stop offset="0.7473" stop-color="#ff00fd"/><stop offset="0.8474" stop-color="#ff00cb"/><stop offset="0.9851" stop-color="#ff009e"/><stop offset="0.9992" stop-color="#ff009b"/></linearGradient><linearGradient id="g186" gradientUnits="userSpaceOnUse" x1="0" x2="639"><stop offset="0.0008" stop-color="#0027ff"/><stop offset="0.2934" stop-color="#0000ff"/><stop offset="0.5845" stop-color="#9e00ff"/><stop offset="0.7504" stop-color="#ff00fd"/><stop offset="0.8505" stop-color="#ff00cc"/><stop offset="0.9883" stop-color="#ff009f"/><stop offset="0.9992" stop-color="#ff009c"/></linearGradient><linearGradient id="g187" gradientUnits="userSpaceOnUse" x1="0" x2="639"><stop offset="0.0008" stop-color="#0026ff"/><stop offset="0.2903" stop-color="#0000ff"/><stop offset="0.3951" stop-color="#3400ff"/><stop offset="0.7050" stop-color="#e300ff"/><stop offset="0.7551" stop-color="#ff00fc"/><stop offset="0.8568" stop-color="#ff00cb"/><stop offset="0.9961" stop-color="#ff009e"/><stop offset="0.9992" stop-color="#ff009d"/></linearGradient><linearGradient id="g188" gradientUnits="userSpaceOnUse" x1="0" x2="639"><stop offset="0.0008" stop-color="#0026ff"/><stop offset="0.2872" stop-color="#0000ff"/><stop offset="0.3075" stop-color="#0600ff"/><stop offset="0.6252" stop-color="#b300ff"/><stop offset="0.7567" stop-color="#ff00fd"/><stop offset="0.8584" stop-color="#ff00cb"/><stop offset="0.9977" stop-color="#ff009f"/><stop offset="0.9992" stop-color="#ff009e"/></linearGradient><linearGradient id="g189" gradientUnits="userSpaceOnUse" x1="0" x2="639"><stop offset="0.0008" stop-color="#0025ff"/><stop offset="0.2840" stop-color="#0000ff"/><stop offset="0.3044" stop-color="#0400ff"/><stop offset="0.6252" stop-color="#b200ff"/><stop offset="0.7598" stop-color="#ff00fd"/><stop offset="0.8615" stop-color="#ff00cc"/><stop offset="0.9992" stop-color="#ff009f"/></linearGradient><linearGradient id="g190" gradientUnits="userSpaceOnUse" x1="0" x2="639"><stop offset="0.0008" stop-color="#0024ff"/><stop offset="0.2809" stop-color="#0000ff"/><stop offset="0.3028" stop-color="#0300ff"/><stop offset="0.6252" stop-color="#b000ff"/><stop offset="0.7629" stop-color="#ff00fd"/><stop offset="0.8662" stop-color="#ff00cb"/><stop offset="0.9992" stop-color="#ff00a1"/></linearGradient><linearGradient id="g191" gradientUnits="userSpaceOnUse" x1="0" x2="639"><stop offset="0.0008" stop-color="#0024ff"/><stop offset="0.2778" stop-color="#0000ff"/><stop offset="0.3044" stop-color="#0400ff"/><stop offset="0.6283" stop-color="#b100ff"/><stop offset="0.7676" stop-color="#ff00fc"/><stop offset="0.8709" stop-color="#ff00cb"/><stop offset="0.9992" stop-color="#ff00a2"/></linearGradient><linearGradient id="g192" gradientUnits="userSpaceOnUse" x1="0" x2="639"><stop offset="0.0008" stop-color="#0023ff"/><stop offset="0.2746" stop-color="#0000ff"/><stop offset="0.3044" stop-color="#0300ff"/><stop offset="0.6299" stop-color="#b000ff"/><stop offset="0.7707" stop-color="#ff00fc"/><stop offset="0.8756" stop-color="#ff00cb"/><stop offset="0.9992" stop-color="#ff00a3"/></linearGradient><linearGradient id="g193" gradientUnits="userSpaceOnUse" x1="0" x2="639"><stop offset="0.0008" stop-color="#0022ff"/><stop offset="0.2715" stop-color="#0000ff"/><stop offset="0.3044" stop-color="#0300ff"/><stop offset="0.6330" stop-color="#b100ff"/><stop offset="0.7739" stop-color="#ff00fc"/><stop offset="0.8787" stop-color="#ff00cb"/><stop offset="0.9992" stop-color="#ff00a4"/></linearGradient><linearGradient id="g194" gradientUnits="userSpaceOnUse" x1="0" x2="639"><stop offset="0.0008" stop-color="#0022ff"/><stop offset="0.2700" stop-color="#0000ff"/><stop offset="0.3044" stop-color="#0300ff"/><stop offset="0.6346" stop-color="#b000ff"/><stop offset="0.7770" stop-color="#ff00fc"/><stop offset="0.8818" stop-color="#ff00cb"/><stop offset="0.9992" stop-color="#ff00a5"/></linearGradient><linearGradient id="g195" gradientUnits="userSpaceOnUse" x1="0" x2="639"><stop offset="0.0008" stop-color="#0021ff"/><stop offset="0.2668" stop-color="#0000ff"/><stop offset="0.3044" stop-color="#0200ff"/><stop offset="0.6362" stop-color="#b000ff"/><stop offset="0.7801" stop-color="#ff00fd"/><stop offset="0.8865" stop-color="#ff00cb"/><stop offset="0.9992" stop-color="#ff00a7"/></linearGradient><linearGradient id="g196" gradientUnits="userSpaceOnUse" x1="0" x2="639"><stop offset="0.0008" stop-color="#0021ff"/><stop offset="0.2637" stop-color="#0000ff"/><stop offset="0.3044" stop-color="#0200ff"/><stop offset="0.6377" stop-color="#af00ff"/><stop offset="0.7833" stop-color="#ff00fd"/><stop offset="0.8897" stop-color="#ff00cb"/><stop offset="0.9992" stop-color="#ff00a8"/></linearGradient><linearGradient id="g197" gradientUnits="userSpaceOnUse" x1="0" x2="639"><stop offset="0.0008" stop-color="#0020ff"/><stop offset="0.2606" stop-color="#0000ff"/><stop offset="0.3059" stop-color="#0300ff"/><stop offset="0.6408" stop-color="#b000ff"/><stop offset="0.7864" stop-color="#ff00fd"/><stop offset="0.8928" stop-color="#ff00cb"/><stop offset="0.9992" stop-color="#ff00a9"/></linearGradient><linearGradient id="g198" gradientUnits="userSpaceOnUse" x1="0" x2="639"><stop offset="0.0008" stop-color="#0020ff"/><stop offset="0.2574" stop-color="#0000ff"/><stop offset="0.3059" stop-color="#0200ff"/><stop offset="0.6440" stop-color="#b000ff"/><stop offset="0.7895" stop-color="#ff00fd"/><stop offset="0.8975" stop-color="#ff00cb"/><stop offset="0.9992" stop-color="#ff00aa"/></linearGradient><linearGradient id="g199" gradientUnits="userSpaceOnUse" x1="0" x2="639"><stop offset="0.0008" stop-color="#001fff"/><stop offset="0.2543" stop-color="#0000ff"/><stop offset="0.3059" stop-color="#0200ff"/><stop offset="0.6455" stop-color="#b000ff"/><stop offset="0.7926" stop-color="#ff00fd"/><stop offset="0.9006" stop-color="#ff00cb"/><stop offset="0.9992" stop-color="#ff00ab"/></linearGradient><linearGradient id="g200" gradientUnits="userSpaceOnUse" x1="0" x2="639"><stop offset="0.0008" stop-color="#001eff"/><stop offset="0.2512" stop-color="#0000ff"/><stop offset="0.3075" stop-color="#0300ff"/><stop offset="0.6487" stop-color="#b000ff"/><stop offset="0.7958" stop-color="#ff00fd"/><stop offset="0.9053" stop-color="#ff00cb"/><stop offset="0.9992" stop-color="#ff00ac"/></linearGradient><linearGradient id="g201" gradientUnits="userSpaceOnUse" x1="0" x2="639"><stop offset="0.0008" stop-color="#001eff"/><stop offset="0.2480" stop-color="#0000ff"/><stop offset="0.3075" stop-color="#0200ff"/><stop offset="0.6502" stop-color="#b000ff"/><stop offset="0.7989" stop-color="#ff00fd"/><stop offset="0.9085" stop-color="#ff00cb"/><stop offset="0.9992" stop-color="#ff00ae"/></linearGradient><linearGradient id="g202" gradientUnits="userSpaceOnUse" x1="0" x2="639"><stop offset="0.0008" stop-color="#001dff"/><stop offset="0.2465" stop-color="#0000ff"/><stop offset="0.3075" stop-color="#0200ff"/><stop offset="0.6518" stop-color="#af00ff"/><stop offset="0.8020" stop-color="#ff00fd"/><stop offset="0.9116" stop-color="#ff00cb"/><stop offset="0.9992" stop-color="#ff00af"/></linearGradient><linearGradient id="g203" gradientUnits="userSpaceOnUse" x1="0" x2="639"><stop offset="0.0008" stop-color="#001dff"/><stop offset="0.2433" stop-color="#0000ff"/><stop offset="0.3091" stop-color="#0300ff"/><stop offset="0.6549" stop-color="#b000ff"/><stop offset="0.8052" stop-color="#ff00fd"/><stop offset="0.9163" stop-color="#ff00cb"/><stop offset="0.9992" stop-color="#ff00b0"/></linearGradient><linearGradient id="g204" gradientUnits="userSpaceOnUse" x1="0" x2="639"><stop offset="0.0008" stop-color="#001cff"/><stop offset="0.2402" stop-color="#0000ff"/><stop offset="0.3091" stop-color="#0200ff"/><stop offset="0.6581" stop-color="#b000ff"/><stop offset="0.8083" stop-color="#ff00fd"/><stop offset="0.9194" stop-color="#ff00cb"/><stop offset="0.9992" stop-color="#ff00b1"/></linearGradient><linearGradient id="g205" gradientUnits="userSpaceOnUse" x1="0" x2="639"><stop offset="0.0008" stop-color="#001cff"/><stop offset="0.2371" stop-color="#0000ff"/><stop offset="0.3091" stop-color="#0200ff"/><stop offset="0.6596" stop-color="#b000ff"/><stop offset="0.8114" stop-color="#ff00fd"/><stop offset="0.9225" stop-color="#ff00cb"/><stop offset="0.9992" stop-color="#ff00b2"/></linearGradient><linearGradient id="g206" gradientUnits="userSpaceOnUse" x1="0" x2="639"><stop offset="0.0008" stop-color="#001bff"/><stop offset="0.2340" stop-color="#0000ff"/><stop offset="0.3106" stop-color="#0300ff"/><stop offset="0.6628" stop-color="#b000ff"/><stop offset="0.8146" stop-color="#ff00fd"/><stop offset="0.9272" stop-color="#ff00cb"/><stop offset="0.9992" stop-color="#ff00b4"/></linearGradient><linearGradient id="g207" gradientUnits="userSpaceOnUse" x1="0" x2="639"><stop offset="0.0008" stop-color="#001bff"/><stop offset="0.2308" stop-color="#0000ff"/><stop offset="0.3106" stop-color="#0200ff"/><stop offset="0.6643" stop-color="#b000ff"/><stop offset="0.8177" stop-color="#ff00fd"/><stop offset="0.9304" stop-color="#ff00cb"/><stop offset="0.9992" stop-color="#ff00b5"/></linearGradient><linearGradient id="g208" gradientUnits="userSpaceOnUse" x1="0" x2="639"><stop offset="0.0008" stop-color="#001aff"/><stop offset="0.2277" stop-color="#0000ff"/><stop offset="0.3106" stop-color="#0200ff"/><stop offset="0.6659" stop-color="#af00ff"/><stop offset="0.8208" stop-color="#ff00fd"/><stop offset="0.9335" stop-color="#ff00cb"/><stop offset="0.9992" stop-color="#ff00b6"/></linearGradient><linearGradient id="g209" gradientUnits="userSpaceOnUse" x1="0" x2="639"><stop offset="0.0008" stop-color="#001aff"/><stop offset="0.2261" stop-color="#0000ff"/><stop offset="0.3122" stop-color="#0300ff"/><stop offset="0.6690" stop-color="#b000ff"/><stop offset="0.8239" stop-color="#ff00fd"/><stop offset="0.9382" stop-color="#ff00cb"/><stop offset="0.9992" stop-color="#ff00b7"/></linearGradient><linearGradient id="g210" gradientUnits="userSpaceOnUse" x1="0" x2="639"><stop offset="0.0008" stop-color="#0019ff"/><stop offset="0.2230" stop-color="#0000ff"/><stop offset="0.3122" stop-color="#0200ff"/><stop offset="0.6721" stop-color="#b000ff"/><stop offset="0.8271" stop-color="#ff00fd"/><stop offset="0.9413" stop-color="#ff00cb"/><stop offset="0.9992" stop-color="#ff00b8"/></linearGradient><linearGradient id="g211" gradientUnits="userSpaceOnUse" x1="0" x2="639"><stop offset="0.0008" stop-color="#0019ff"/><stop offset="0.2199" stop-color="#0000ff"/><stop offset="0.3122" stop-color="#0200ff"/><stop offset="0.6737" stop-color="#b000ff"/><stop offset="0.8302" stop-color="#ff00fd"/><stop offset="0.9460" stop-color="#ff00cb"/><stop offset="0.9992" stop-color="#ff00ba"/></linearGradient><linearGradient id="g212" gradientUnits="userSpaceOnUse" x1="0" x2="639"><stop offset="0.0008" stop-color="#0018ff"/><stop offset="0.2167" stop-color="#0000ff"/><stop offset="0.3138" stop-color="#0300ff"/><stop offset="0.6768" stop-color="#b000ff"/><stop offset="0.8333" stop-color="#ff00fd"/><stop offset="0.9491" stop-color="#ff00cb"/><stop offset="0.9992" stop-color="#ff00bb"/></linearGradient><linearGradient id="g213" gradientUnits="userSpaceOnUse" x1="0" x2="639"><stop offset="0.0008" stop-color="#0018ff"/><stop offset="0.2136" stop-color="#0000ff"/><stop offset="0.3138" stop-color="#0200ff"/><stop offset="0.6784" stop-color="#af00ff"/><stop offset="0.8365" stop-color="#ff00fd"/><stop offset="0.9523" stop-color="#ff00cb"/><stop offset="0.9992" stop-color="#ff00bc"/></linearGradient><linearGradient id="g214" gradientUnits="userSpaceOnUse" x1="0" x2="639"><stop offset="0.0008" stop-color="#0017ff"/><stop offset="0.2105" stop-color="#0000ff"/><stop offset="0.3138" stop-color="#0200ff"/><stop offset="0.6800" stop-color="#af00ff"/><stop offset="0.8396" stop-color="#ff00fd"/><stop offset="0.9570" stop-color="#ff00cb"/><stop offset="0.9992" stop-color="#ff00bd"/></linearGradient><linearGradient id="g215" gradientUnits="userSpaceOnUse" x1="0" x2="639"><stop offset="0.0008" stop-color="#0017ff"/><stop offset="0.2074" stop-color="#0000ff"/><stop offset="0.3153" stop-color="#0300ff"/><stop offset="0.6847" stop-color="#b000ff"/><stop offset="0.8427" stop-color="#ff00fd"/><stop offset="0.9601" stop-color="#ff00cb"/><stop offset="0.9992" stop-color="#ff00bf"/></linearGradient><linearGradient id="g216" gradientUnits="userSpaceOnUse" x1="0" x2="639"><stop offset="0.0008" stop-color="#0016ff"/><stop offset="0.2042" stop-color="#0000ff"/><stop offset="0.3153" stop-color="#0200ff"/><stop offset="0.6862" stop-color="#b000ff"/><stop offset="0.8459" stop-color="#ff00fd"/><stop offset="0.9632" stop-color="#ff00cc"/><stop offset="0.9992" stop-color="#ff00c0"/></linearGradient><linearGradient id="g217" gradientUnits="userSpaceOnUse" x1="0" x2="639"><stop offset="0.0008" stop-color="#0016ff"/><stop offset="0.2027" stop-color="#0000ff"/><stop offset="0.3153" stop-color="#0200ff"/><stop offset="0.6878" stop-color="#af00ff"/><stop offset="0.8490" stop-color="#ff00fd"/><stop offset="0.9679" stop-color="#ff00cb"/><stop offset="0.9992" stop-color="#ff00c1"/></linearGradient><linearGradient id="g218" gradientUnits="userSpaceOnUse" x1="0" x2="639"><stop offset="0.0008" stop-color="#0015ff"/><stop offset="0.1995" stop-color="#0000ff"/><stop offset="0.3169" stop-color="#0300ff"/><stop offset="0.6909" stop-color="#b000ff"/><stop offset="0.8521" stop-color="#ff00fd"/><stop offset="0.9710" stop-color="#ff00cb"/><stop offset="0.9992" stop-color="#ff00c2"/></linearGradient><linearGradient id="g219" gradientUnits="userSpaceOnUse" x1="0" x2="639"><stop offset="0.0008" stop-color="#0015ff"/><stop offset="0.1964" stop-color="#0000ff"/><stop offset="0.3169" stop-color="#0200ff"/><stop offset="0.6925" stop-color="#af00ff"/><stop offset="0.8552" stop-color="#ff00fd"/><stop offset="0.9757" stop-color="#ff00cb"/><stop offset="0.9992" stop-color="#ff00c3"/></linearGradient><linearGradient id="g220" gradientUnits="userSpaceOnUse" x1="0" x2="639"><stop offset="0.0008" stop-color="#0014ff"/><stop offset="0.1933" stop-color="#0000ff"/><stop offset="0.3169" stop-color="#0200ff"/><stop offset="0.6941" stop-color="#af00ff"/><stop offset="0.8584" stop-color="#ff00fd"/><stop offset="0.9789" stop-color="#ff00cb"/><stop offset="0.9992" stop-color="#ff00c5"/></linearGradient><linearGradient id="g221" gradientUnits="userSpaceOnUse" x1="0" x2="639"><stop offset="0.0008" stop-color="#0014ff"/><stop offset="0.1901" stop-color="#0000ff"/><stop offset="0.3185" stop-color="#0300ff"/><stop offset="0.6987" stop-color="#b000ff"/><stop offset="0.8615" stop-color="#ff00fd"/><stop offset="0.9820" stop-color="#ff00cc"/><stop offset="0.9992" stop-color="#ff00c6"/></linearGradient><linearGradient id="g222" gradientUnits="userSpaceOnUse" x1="0" x2="639"><stop offset="0.0008" stop-color="#0013ff"/><stop offset="0.1870" stop-color="#0000ff"/><stop offset="0.3185" stop-color="#0200ff"/><stop offset="0.7003" stop-color="#b000ff"/><stop offset="0.8646" stop-color="#ff00fd"/><stop offset="0.9867" stop-color="#ff00cb"/><stop offset="0.9992" stop-color="#ff00c7"/></linearGradient><linearGradient id="g223" gradientUnits="userSpaceOnUse" x1="0" x2="639"><stop offset="0.0008" stop-color="#0013ff"/><stop offset="0.1854" stop-color="#0000ff"/><stop offset="0.3185" stop-color="#0200ff"/><stop offset="0.7019" stop-color="#af00ff"/><stop offset="0.8678" stop-color="#ff00fd"/><stop offset="0.9898" stop-color="#ff00cb"/><stop offset="0.9992" stop-color="#ff00c8"/></linearGradient><linearGradient id="g224" gradientUnits="userSpaceOnUse" x1="0" x2="639"><stop offset="0.0008" stop-color="#0012ff"/><stop offset="0.1823" stop-color="#0000ff"/><stop offset="0.3200" stop-color="#0300ff"/><stop offset="0.7050" stop-color="#b000ff"/><stop offset="0.8709" stop-color="#ff00fd"/><stop offset="0.9930" stop-color="#ff00cc"/><stop offset="0.9992" stop-color="#ff00ca"/></linearGradient><linearGradient id="g225" gradientUnits="userSpaceOnUse" x1="0" x2="639"><stop offset="0.0008" stop-color="#0012ff"/><stop offset="0.1792" stop-color="#0000ff"/><stop offset="0.3200" stop-color="#0200ff"/><stop offset="0.7066" stop-color="#af00ff"/><stop offset="0.8756" stop-color="#ff00fc"/><stop offset="0.9992" stop-color="#ff00cb"/></linearGradient><linearGradient id="g226" gradientUnits="userSpaceOnUse" x1="0" x2="639"><stop offset="0.0008" stop-color="#0011ff"/><stop offset="0.1761" stop-color="#0000ff"/><stop offset="0.3200" stop-color="#0200ff"/><stop offset="0.7097" stop-color="#b000ff"/><stop offset="0.8787" stop-color="#ff00fc"/><stop offset="0.9992" stop-color="#ff00cc"/></linearGradient><linearGradient id="g227" gradientUnits="userSpaceOnUse" x1="0" x2="639"><stop offset="0.0008" stop-color="#0011ff"/><stop offset="0.1729" stop-color="#0000ff"/><stop offset="0.3216" stop-color="#0200ff"/><stop offset="0.7128" stop-color="#b000ff"/><stop offset="0.8818" stop-color="#ff00fc"/><stop offset="0.9992" stop-color="#ff00cd"/></linearGradient><linearGradient id="g228" gradientUnits="userSpaceOnUse" x1="0" x2="639"><stop offset="0.0008" stop-color="#0011ff"/><stop offset="0.1698" stop-color="#0000ff"/><stop offset="0.3216" stop-color="#0200ff"/><stop offset="0.7144" stop-color="#b000ff"/><stop offset="0.8850" stop-color="#ff00fc"/><stop offset="0.9992" stop-color="#ff00cf"/></linearGradient><linearGradient id="g229" gradientUnits="userSpaceOnUse" x1="0" x2="639"><stop offset="0.0008" stop-color="#0010ff"/><stop offset="0.1682" stop-color="#0000ff"/><stop offset="0.3216" stop-color="#0200ff"/><stop offset="0.7160" stop-color="#af00ff"/><stop offset="0.8881" stop-color="#ff00fd"/><stop offset="0.9992" stop-color="#ff00d0"/></linearGradient><linearGradient id="g230" gradientUnits="userSpaceOnUse" x1="0" x2="639"><stop offset="0.0008" stop-color="#0010ff"/><stop offset="0.1651" stop-color="#0000ff"/><stop offset="0.3232" stop-color="#0200ff"/><stop offset="0.7191" stop-color="#b000ff"/><stop offset="0.8912" stop-color="#ff00fd"/><stop offset="0.9992" stop-color="#ff00d1"/></linearGradient><linearGradient id="g231" gradientUnits="userSpaceOnUse" x1="0" x2="639"><stop offset="0.0008" stop-color="#000fff"/><stop offset="0.1620" stop-color="#0000ff"/><stop offset="0.3232" stop-color="#0200ff"/><stop offset="0.7207" stop-color="#af00ff"/><stop offset="0.8944" stop-color="#ff00fd"/><stop offset="0.9992" stop-color="#ff00d2"/></linearGradient><linearGradient id="g232" gradientUnits="userSpaceOnUse" x1="0" x2="639"><stop offset="0.0008" stop-color="#000fff"/><stop offset="0.1588" stop-color="#0000ff"/><stop offset="0.3232" stop-color="#0200ff"/><stop offset="0.7238" stop-color="#b000ff"/><stop offset="0.8975" stop-color="#ff00fd"/><stop offset="0.9992" stop-color="#ff00d4"/></linearGradient><linearGradient id="g233" gradientUnits="userSpaceOnUse" x1="0" x2="639"><stop offset="0.0008" stop-color="#000fff"/><stop offset="0.1573" stop-color="#0000ff"/><stop offset="0.3247" stop-color="#0200ff"/><stop offset="0.7269" stop-color="#b000ff"/><stop offset="0.9006" stop-color="#ff00fd"/><stop offset="0.9992" stop-color="#ff00d5"/></linearGradient><linearGradient id="g234" gradientUnits="userSpaceOnUse" x1="0" x2="639"><stop offset="0.0008" stop-color="#000eff"/><stop offset="0.1541" stop-color="#0000ff"/><stop offset="0.3247" stop-color="#0200ff"/><stop offset="0.7285" stop-color="#b000ff"/><stop offset="0.9038" stop-color="#ff00fd"/><stop offset="0.9992" stop-color="#ff00d6"/></linearGradient><linearGradient id="g235" gradientUnits="userSpaceOnUse" x1="0" x2="639"><stop offset="0.0008" stop-color="#000eff"/><stop offset="0.1510" stop-color="#0000ff"/><stop offset="0.3247" stop-color="#0200ff"/><stop offset="0.7300" stop-color="#af00ff"/><stop offset="0.9069" stop-color="#ff00fd"/><stop offset="0.9992" stop-color="#ff00d7"/></linearGradient><linearGradient id="g236" gradientUnits="userSpaceOnUse" x1="0" x2="639"><stop offset="0.0008" stop-color="#000dff"/><stop offset="0.1479" stop-color="#0000ff"/><stop offset="0.3263" stop-color="#0200ff"/><stop offset="0.7332" stop-color="#b000ff"/><stop offset="0.9100" stop-color="#ff00fd"/><stop offset="0.9992" stop-color="#ff00d9"/></linearGradient><linearGradient id="g237" gradientUnits="userSpaceOnUse" x1="0" x2="639"><stop offset="0.0008" stop-color="#000dff"/><stop offset="0.1448" stop-color="#0000ff"/><stop offset="0.3263" stop-color="#0200ff"/><stop offset="0.7363" stop-color="#b000ff"/><stop offset="0.9131" stop-color="#ff00fd"/><stop offset="0.9992" stop-color="#ff00da"/></linearGradient><linearGradient id="g238" gradientUnits="userSpaceOnUse" x1="0" x2="639"><stop offset="0.0008" stop-color="#000dff"/><stop offset="0.1432" stop-color="#0000ff"/><stop offset="0.3263" stop-color="#0200ff"/><stop offset="0.7379" stop-color="#b000ff"/><stop offset="0.9163" stop-color="#ff00fd"/><stop offset="0.9992" stop-color="#ff00db"/></linearGradient><linearGradient id="g239" gradientUnits="userSpaceOnUse" x1="0" x2="639"><stop offset="0.0008" stop-color="#000cff"/><stop offset="0.1401" stop-color="#0000ff"/><stop offset="0.3279" stop-color="#0200ff"/><stop offset="0.7410" stop-color="#b000ff"/><stop offset="0.9194" stop-color="#ff00fd"/><stop offset="0.9992" stop-color="#ff00dc"/></linearGradient><linearGradient id="g240" gradientUnits="userSpaceOnUse" x1="0" x2="639"><stop offset="0.0008" stop-color="#000cff"/><stop offset="0.1369" stop-color="#0000ff"/><stop offset="0.3279" stop-color="#0200ff"/><stop offset="0.7426" stop-color="#b000ff"/><stop offset="0.9225" stop-color="#ff00fd"/><stop offset="0.9992" stop-color="#ff00de"/></linearGradient><linearGradient id="g241" gradientUnits="userSpaceOnUse" x1="0" x2="639"><stop offset="0.0008" stop-color="#000bff"/><stop offset="0.1338" stop-color="#0000ff"/><stop offset="0.3279" stop-color="#0200ff"/><stop offset="0.7441" stop-color="#af00ff"/><stop offset="0.9257" stop-color="#ff00fd"/><stop offset="0.9992" stop-color="#ff00df"/></linearGradient><linearGradient id="g242" gradientUnits="userSpaceOnUse" x1="0" x2="639"><stop offset="0.0008" stop-color="#000bff"/><stop offset="0.1322" stop-color="#0000ff"/><stop offset="0.3294" stop-color="#0200ff"/><stop offset="0.7473" stop-color="#b000ff"/><stop offset="0.9288" stop-color="#ff00fd"/><stop offset="0.9992" stop-color="#ff00e0"/></linearGradient><linearGradient id="g243" gradientUnits="userSpaceOnUse" x1="0" x2="639"><stop offset="0.0008" stop-color="#000bff"/><stop offset="0.1291" stop-color="#0000ff"/><stop offset="0.3294" stop-color="#0200ff"/><stop offset="0.7504" stop-color="#b000ff"/><stop offset="0.9319" stop-color="#ff00fd"/><stop offset="0.9992" stop-color="#ff00e1"/></linearGradient><linearGradient id="g244" gradientUnits="userSpaceOnUse" x1="0" x2="639"><stop offset="0.0008" stop-color="#000aff"/><stop offset="0.1260" stop-color="#0000ff"/><stop offset="0.3310" stop-color="#0300ff"/><stop offset="0.7535" stop-color="#b000ff"/><stop offset="0.9351" stop-color="#ff00fd"/><stop offset="0.9992" stop-color="#ff00e3"/></linearGradient><linearGradient id="g245" gradientUnits="userSpaceOnUse" x1="0" x2="639"><stop offset="0.0008" stop-color="#000aff"/><stop offset="0.1244" stop-color="#0000ff"/><stop offset="0.3310" stop-color="#0200ff"/><stop offset="0.7551" stop-color="#b000ff"/><stop offset="0.9382" stop-color="#ff00fd"/><stop offset="0.9992" stop-color="#ff00e4"/></linearGradient><clipPath id="loc"><polygon points="273.3,477.4 273.2,477.4 273.2,477.4 273.1,477.4 273.1,477.4 273.0,477.5 273.0,477.5 272.9,477.6 272.9,477.7 272.8,477.7 272.7,477.7 272.6,477.7 272.5,477.7 272.4,477.7 272.3,477.8 272.2,477.9 272.1,478.0 272.0,478.0 271.8,478.0 271.7,478.0 271.6,478.0 271.4,478.0 271.2,478.0 271.0,478.0 270.8,478.0 270.7,478.0 270.5,478.0 270.2,478.0 270.0,478.0 269.6,477.8 269.3,477.7 268.9,477.5 268.4,477.2 267.8,476.8 267.1,476.4 266.4,475.9 265.6,475.3 264.8,474.7 263.9,474.1 263.0,473.3 261.9,472.5 260.7,471.5 259.4,470.5 258.0,469.3 256.5,468.1 254.9,466.8 253.3,465.4 251.6,463.9 249.7,462.3 247.7,460.7 245.7,459.0 243.5,457.2 241.1,455.2 238.5,453.1 235.8,450.9 232.9,448.5 229.8,446.0 226.7,443.4 223.4,440.7 220.0,437.8 216.3,434.7 212.4,431.3 208.4,427.8 204.1,423.9 199.6,419.7 195.0,415.2 190.3,410.6 185.2,405.4 179.7,399.4 173.6,392.5 167.1,384.8 160.3,376.5 153.1,367.4 145.7,357.5 137.9,346.9 130.0,335.6 121.8,323.7 113.5,310.9 104.9,297.4 96.3,283.4 87.9,269.3 79.4,254.8 71.0,240.0 62.8,225.1 55.2,210.5 48.1,196.0 41.4,181.5 35.3,167.4 29.6,154.0 24.5,141.2 19.9,128.8 15.8,117.2 12.3,106.4 9.3,96.4 6.8,87.2 4.9,78.8 3.3,71.0 2.1,63.9 1.4,57.5 1.1,51.7 1.1,46.3 1.5,41.4 2.2,37.0 3.2,33.0 4.5,29.4 6.2,26.2 8.1,23.3 10.3,20.8 12.7,18.7 15.3,16.8 18.1,15.4 21.1,14.2 24.2,13.2 27.5,12.4 30.9,11.8 34.4,11.5 38.0,11.1 41.6,10.9 45.4,10.8 49.2,10.7 52.9,10.6 56.7,10.6 60.5,10.7 64.3,10.7 68.2,10.8 72.1,11.0 76.0,11.1 80.0,11.3 84.0,11.6 88.2,11.8 92.4,12.1 96.7,12.5 101.1,12.8 105.6,13.2 110.2,13.6 114.9,14.0 119.7,14.5 124.6,15.0 129.7,15.5 134.8,16.0 140.1,16.5 145.6,17.1 151.1,17.7 156.9,18.3 162.8,19.0 168.8,19.6 175.0,20.3 181.3,21.0 187.8,21.8 194.5,22.5 201.3,23.3 208.3,24.1 215.5,24.9 222.9,25.7 230.4,26.6 238.1,27.5 246.0,28.4 254.0,29.3 262.2,30.2 270.6,31.2 279.2,32.2 287.9,33.2 296.8,34.2 305.8,35.3 315.0,36.3 324.3,37.4 333.8,38.4 343.3,39.5 352.9,40.6 362.6,41.8 372.4,42.9 382.2,44.0 391.8,45.1 401.4,46.2 410.8,47.3 420.2,48.4 429.6,49.5 438.9,50.5 448.2,51.6 457.4,52.7 466.3,53.7 475.0,54.7 483.4,55.6 491.6,56.6 499.6,57.5 507.3,58.4 514.8,59.2 522.0,60.1 529.0,60.9 535.7,61.6 542.0,62.4 548.2,63.1 554.0,63.7 559.6,64.4 565.0,65.0 570.1,65.6 575.0,66.1 579.7,66.7 584.2,67.2 588.5,67.7 592.6,68.2 596.7,68.6 600.6,69.1 604.4,69.5 608.0,69.9 611.4,70.3 614.7,70.7 617.9,71.1 620.9,71.4 623.8,71.7 626.5,72.1 629.0,72.3 631.4,72.6 633.6,72.9 635.7,73.1 637.7,73.3 639.5,73.5 641.3,73.7 642.9,73.9 644.4,74.1 645.9,74.3 647.2,74.4 648.4,74.6 649.6,74.7 650.6,74.8 651.5,74.9 652.3,75.0 653.0,75.1 653.7,75.2 654.3,75.2 654.9,75.3 655.5,75.4 656.2,75.5 657.1,75.6 658.1,75.7 659.2,75.8 660.2,75.9 661.2,76.0 662.3,76.2 663.3,76.3 663.9,76.4" shape-rendering="geometricPrecision"/></clipPath></defs><rect width="639" height="491" fill="#222222"/><g clip-path="url(#loc)"><rect y="0" width="639" height="2" fill="url(#g0)"/><rect y="2" width="639" height="2" fill="url(#g1)"/><rect y="4" width="639" height="2" fill="url(#g2)"/><rect y="6" width="639" height="2" fill="url(#g3)"/><rect y="8" width="639" height="2" fill="url(#g4)"/><rect y="10" width="639" height="2" fill="url(#g5)"/><rect y="12" width="639" height="2" fill="url(#g6)"/><rect y="14" width="639" height="2" fill="url(#g7)"/><rect y="16" width="639" height="2" fill="url(#g8)"/><rect y="18" width="639" height="2" fill="url(#g9)"/><rect y="20" width="639" height="2" fill="url(#g10)"/><rect y="22" width="639" height="2" fill="url(#g11)"/><rect y="24" width="639" height="2" fill="url(#g12)"/><rect y="26" width="639" height="2" fill="url(#g13)"/><rect y="28" width="639" height="2" fill="url(#g14)"/><rect y="30" width="639" height="2" fill="url(#g15)"/><rect y="32" width="639" height="2" fill="url(#g16)"/><rect y="34" width="639" height="2" fill="url(#g17)"/><rect y="36" width="639" height="2" fill="url(#g18)"/><rect y="38" width="639" height="2" fill="url(#g19)"/><rect y="40" width="639" height="2" fill="url(#g20)"/><rect y="42" width="639" height="2" fill="url(#g21)"/><rect y="44" width="639" height="2" fill="url(#g22)"/><rect y="46" width="639" height="2" fill="url(#g23)"/><rect y="48" width="639" height="2" fill="url(#g24)"/><rect y="50" width="639" height="2" fill="url(#g25)"/><rect y="52" width="639" height="2" fill="url(#g26)"/><rect y="54" width="639" height="2" fill="url(#g27)"/><rect y="56" width="639" height="2" fill="url(#g28)"/><rect y="58" width="639" height="2" fill="url(#g29)"/><rect y="60" width="639" height="2" fill="url(#g30)"/><rect y="62" width="639" height="2" fill="url(#g31)"/><rect y="64" width="639" height="2" fill="url(#g32)"/><rect y="66" width="639" height="2" fill="url(#g33)"/><rect y="68" width="639" height="2" fill="url(#g34)"/><rect y="70" width="639" height="2" fill="url(#g35)"/><rect y="72" width="639" height="2" fill="url(#g36)"/><rect y="74" width="639" height="2" fill="url(#g37)"/><rect y="76" width="639" height="2" fill="url(#g38)"/><rect y="78" width="639" height="2" fill="url(#g39)"/><rect y="80" width="639" height="2" fill="url(#g40)"/><rect y="82" width="639" height="2" fill="url(#g41)"/><rect y="84" width="639" height="2" fill="url(#g42)"/><rect y="86" width="639" height="2" fill="url(#g43)"/><rect y="88" width="639" height="2" fill="url(#g44)"/><rect y="90" width="639" height="2" fill="url(#g45)"/><rect y="92" width="639" height="2" fill="url(#g46)"/><rect y="94" width="639" height="2" fill="url(#g47)"/><rect y="96" width="639" height="2" fill="url(#g48)"/><rect y="98" width="639" height="2" fill="url(#g49)"/><rect y="100" width="639" height="2" fill="url(#g50)"/><rect y="102" width="639" height="2" fill="url(#g51)"/><rect y="104" width="639" height="2" fill="url(#g52)"/><rect y="106" width="639" height="2" fill="url(#g53)"/><rect y="108" width="639" height="2" fill="url(#g54)"/><rect y="110" width="639" height="2" fill="url(#g55)"/><rect y="112" width="639" height="2" fill="url(#g56)"/><rect y="114" width="639" height="2" fill="url(#g57)"/><rect y="116" width="639" height="2" fill="url(#g58)"/><rect y="118" width="639" height="2" fill="url(#g59)"/><rect y="120" width="639" height="2" fill="url(#g60)"/><rect y="122" width="639" height="2" fill="url(#g61)"/><rect y="124" width="639" height="2" fill="url(#g62)"/><rect y="126" width="639" height="2" fill="url(#g63)"/><rect y="128" width="639" height="2" fill="url(#g64)"/><rect y="130" width="639" height="2" fill="url(#g65)"/><rect y="132" width="639" height="2" fill="url(#g66)"/><rect y="134" width="639" height="2" fill="url(#g67)"/><rect y="136" width="639" height="2" fill="url(#g68)"/><rect y="138" width="639" height="2" fill="url(#g69)"/><rect y="140" width="639" height="2" fill="url(#g70)"/><rect y="142" width="639" height="2" fill="url(#g71)"/><rect y="144" width="639" height="2" fill="url(#g72)"/><rect y="146" width="639" height="2" fill="url(#g73)"/><rect y="148" width="639" height="2" fill="url(#g74)"/><rect y="150" width="639" height="2" fill="url(#g75)"/><rect y="152" width="639" height="2" fill="url(#g76)"/><rect y="154" width="639" height="2" fill="url(#g77)"/><rect y="156" width="639" height="2" fill="url(#g78)"/><rect y="158" width="639" height="2" fill="url(#g79)"/><rect y="160" width="639" height="2" fill="url(#g80)"/><rect y="162" width="639" height="2" fill="url(#g81)"/><rect y="164" width="639" height="2" fill="url(#g82)"/><rect y="166" width="639" height="2" fill="url(#g83)"/><rect y="168" width="639" height="2" fill="url(#g84)"/><rect y="170" width="639" height="2" fill="url(#g85)"/><rect y="172" width="639" height="2" fill="url(#g86)"/><rect y="174" width="639" height="2" fill="url(#g87)"/><rect y="176" width="639" height="2" fill="url(#g88)"/><rect y="178" width="639" height="2" fill="url(#g89)"/><rect y="180" width="639" height="2" fill="url(#g90)"/><rect y="182" width="639" height="2" fill="url(#g91)"/><rect y="184" width="639" height="2" fill="url(#g92)"/><rect y="186" width="639" height="2" fill="url(#g93)"/><rect y="188" width="639" height="2" fill="url(#g94)"/><rect y="190" width="639" height="2" fill="url(#g95)"/><rect y="192" width="639" height="2" fill="url(#g96)"/><rect y="194" width="639" height="2" fill="url(#g97)"/><rect y="196" width="639" height="2" fill="url(#g98)"/><rect y="198" width="639" height="2" fill="url(#g99)"/><rect y="200" width="639" height="2" fill="url(#g100)"/><rect y="202" width="639" height="2" fill="url(#g101)"/><rect y="204" width="639" height="2" fill="url(#g102)"/><rect y="206" width="639" height="2" fill="url(#g103)"/><rect y="208" width="639" height="2" fill="url(#g104)"/><rect y="210" width="639" height="2" fill="url(#g105)"/><rect y="212" width="639" height="2" fill="url(#g106)"/><rect y="214" width="639" height="2" fill="url(#g107)"/><rect y="216" width="639" height="2" fill="url(#g108)"/><rect y="218" width="639" height="2" fill="url(#g109)"/><rect y="220" width="639" height="2" fill="url(#g110)"/><rect y="222" width="639" height="2" fill="url(#g111)"/><rect y="224" width="639" height="2" fill="url(#g112)"/><rect y="226" width="639" height="2" fill="url(#g113)"/><rect y="228" width="639" height="2" fill="url(#g114)"/><rect y="230" width="639" height="2" fill="url(#g115)"/><rect y="232" width="639" height="2" fill="url(#g116)"/><rect y="234" width="639" height="2" fill="url(#g117)"/><rect y="236" width="639" height="2" fill="url(#g118)"/><rect y="238" width="639" height="2" fill="url(#g119)"/><rect y="240" width="639" height="2" fill="url(#g120)"/><rect y="242" width="639" height="2" fill="url(#g121)"/><rect y="244" width="639" height="2" fill="url(#g122)"/><rect y="246" width="639" height="2" fill="url(#g123)"/><rect y="248" width="639" height="2" fill="url(#g124)"/><rect y="250" width="639" height="2" fill="url(#g125)"/><rect y="252" width="639" height="2" fill="url(#g126)"/><rect y="254" width="639" height="2" fill="url(#g127)"/><rect y="256" width="639" height="2" fill="url(#g128)"/><rect y="258" width="639" height="2" fill="url(#g129)"/><rect y="260" width="639" height="2" fill="url(#g130)"/><rect y="262" width="639" height="2" fill="url(#g131)"/><rect y="264" width="639" height="2" fill="url(#g132)"/><rect y="266" width="639" height="2" fill="url(#g133)"/><rect y="268" width="639" height="2" fill="url(#g134)"/><rect y="270" width="639" height="2" fill="url(#g135)"/><rect y="272" width="639" height="2" fill="url(#g136)"/><rect y="274" width="639" height="2" fill="url(#g137)"/><rect y="276" width="639" height="2" fill="url(#g138)"/><rect y="278" width="639" height="2" fill="url(#g139)"/><rect y="280" width="639" height="2" fill="url(#g140)"/><rect y="282" width="639" height="2" fill="url(#g141)"/><rect y="284" width="639" height="2" fill="url(#g142)"/><rect y="286" width="639" height="2" fill="url(#g143)"/><rect y="288" width="639" height="2" fill="url(#g144)"/><rect y="290" width="639" height="2" fill="url(#g145)"/><rect y="292" width="639" height="2" fill="url(#g146)"/><rect y="294" width="639" height="2" fill="url(#g147)"/><rect y="296" width="639" height="2" fill="url(#g148)"/><rect y="298" width="639" height="2" fill="url(#g149)"/><rect y="300" width="639" height="2" fill="url(#g150)"/><rect y="302" width="639" height="2" fill="url(#g151)"/><rect y="304" width="639" height="2" fill="url(#g152)"/><rect y="306" width="639" height="2" fill="url(#g153)"/><rect y="308" width="639" height="2" fill="url(#g154)"/><rect y="310" width="639" height="2" fill="url(#g155)"/><rect y="312" width="639" height="2" fill="url(#g156)"/><rect y="314" width="639" height="2" fill="url(#g157)"/><rect y="316" width="639" height="2" fill="url(#g158)"/><rect y="318" width="639" height="2" fill="url(#g159)"/><rect y="320" width="639" height="2" fill="url(#g160)"/><rect y="322" width="639" height="2" fill="url(#g161)"/><rect y="324" width="639" height="2" fill="url(#g162)"/><rect y="326" width="639" height="2" fill="url(#g163)"/><rect y="328" width="639" height="2" fill="url(#g164)"/><rect y="330" width="639" height="2" fill="url(#g165)"/><rect y="332" width="639" height="2" fill="url(#g166)"/><rect y="334" width="639" height="2" fill="url(#g167)"/><rect y="336" width="639" height="2" fill="url(#g168)"/><rect y="338" width="639" height="2" fill="url(#g169)"/><rect y="340" width="639" height="2" fill="url(#g170)"/><rect y="342" width="639" height="2" fill="url(#g171)"/><rect y="344" width="639" height="2" fill="url(#g172)"/><rect y="346" width="639" height="2" fill="url(#g173)"/><rect y="348" width="639" height="2" fill="url(#g174)"/><rect y="350" width="639" height="2" fill="url(#g175)"/><rect y="352" width="639" height="2" fill="url(#g176)"/><rect y="354" width="639" height="2" fill="url(#g177)"/><rect y="356" width="639" height="2" fill="url(#g178)"/><rect y="358" width="639" height="2" fill="url(#g179)"/><rect y="360" width="639" height="2" fill="url(#g180)"/><rect y="362" width="639" height="2" fill="url(#g181)"/><rect y="364" width="639" height="2" fill="url(#g182)"/><rect y="366" width="639" height="2" fill="url(#g183)"/><rect y="368" width="639" height="2" fill="url(#g184)"/><rect y="370" width="639" height="2" fill="url(#g185)"/><rect y="372" width="639" height="2" fill="url(#g186)"/><rect y="374" width="639" height="2" fill="url(#g187)"/><rect y="376" width="639" height="2" fill="url(#g188)"/><rect y="378" width="639" height="2" fill="url(#g189)"/><rect y="380" width="639" height="2" fill="url(#g190)"/><rect y="382" width="639" height="2" fill="url(#g191)"/><rect y="384" width="639" height="2" fill="url(#g192)"/><rect y="386" width="639" height="2" fill="url(#g193)"/><rect y="388" width="639" height="2" fill="url(#g194)"/><rect y="390" width="639" height="2" fill="url(#g195)"/><rect y="392" width="639" height="2" fill="url(#g196)"/><rect y="394" width="639" height="2" fill="url(#g197)"/><rect y="396" width="639" height="2" fill="url(#g198)"/><rect y="398" width="639" height="2" fill="url(#g199)"/><rect y="400" width="639" height="2" fill="url(#g200)"/><rect y="402" width="639" height="2" fill="url(#g201)"/><rect y="404" width="639" height="2" fill="url(#g202)"/><rect y="406" width="639" height="2" fill="url(#g203)"/><rect y="408" width="639" height="2" fill="url(#g204)"/><rect y="410" width="639" height="2" fill="url(#g205)"/><rect y="412" width="639" height="2" fill="url(#g206)"/><rect y="414" width="639" height="2" fill="url(#g207)"/><rect y="416" width="639" height="2" fill="url(#g208)"/><rect y="418" width="639" height="2" fill="url(#g209)"/><rect y="420" width="639" height="2" fill="url(#g210)"/><rect y="422" width="639" height="2" fill="url(#g211)"/><rect y="424" width="639" height="2" fill="url(#g212)"/><rect y="426" width="639" height="2" fill="url(#g213)"/><rect y="428" width="639" height="2" fill="url(#g214)"/><rect y="430" width="639" height="2" fill="url(#g215)"/><rect y="432" width="639" height="2" fill="url(#g216)"/><rect y="434" width="639" height="2" fill="url(#g217)"/><rect y="436" width="639" height="2" fill="url(#g218)"/><rect y="438" width="639" height="2" fill="url(#g219)"/><rect y="440" width="639" height="2" fill="url(#g220)"/><rect y="442" width="639" height="2" fill="url(#g221)"/><rect y="444" width="639" height="2" fill="url(#g222)"/><rect y="446" width="639" height="2" fill="url(#g223)"/><rect y="448" width="639" height="2" fill="url(#g224)"/><rect y="450" width="639" height="2" fill="url(#g225)"/><rect y="452" width="639" height="2" fill="url(#g226)"/><rect y="454" width="639" height="2" fill="url(#g227)"/><rect y="456" width="639" height="2" fill="url(#g228)"/><rect y="458" width="639" height="2" fill="url(#g229)"/><rect y="460" width="639" height="2" fill="url(#g230)"/><rect y="462" width="639" height="2" fill="url(#g231)"/><rect y="464" width="639" height="2" fill="url(#g232)"/><rect y="466" width="639" height="2" fill="url(#g233)"/><rect y="468" width="639" height="2" fill="url(#g234)"/><rect y="470" width="639" height="2" fill="url(#g235)"/><rect y="472" width="639" height="2" fill="url(#g236)"/><rect y="474" width="639" height="2" fill="url(#g237)"/><rect y="476" width="639" height="2" fill="url(#g238)"/><rect y="478" width="639" height="2" fill="url(#g239)"/><rect y="480" width="639" height="2" fill="url(#g240)"/><rect y="482" width="639" height="2" fill="url(#g241)"/><rect y="484" width="639" height="2" fill="url(#g242)"/><rect y="486" width="639" height="2" fill="url(#g243)"/><rect y="488" width="639" height="2" fill="url(#g244)"/><rect y="490" width="639" height="2" fill="url(#g245)"/></g><path d="M273.3,477.4 273.2,477.4 273.2,477.4 273.1,477.4 273.1,477.4 273.0,477.5 273.0,477.5 272.9,477.6 272.9,477.7 272.8,477.7 272.7,477.7 272.6,477.7 272.5,477.7 272.4,477.7 272.3,477.8 272.2,477.9 272.1,478.0 272.0,478.0 271.8,478.0 271.7,478.0 271.6,478.0 271.4,478.0 271.2,478.0 271.0,478.0 270.8,478.0 270.7,478.0 270.5,478.0 270.2,478.0 270.0,478.0 269.6,477.8 269.3,477.7 268.9,477.5 268.4,477.2 267.8,476.8 267.1,476.4 266.4,475.9 265.6,475.3 264.8,474.7 263.9,474.1 263.0,473.3 261.9,472.5 260.7,471.5 259.4,470.5 258.0,469.3 256.5,468.1 254.9,466.8 253.3,465.4 251.6,463.9 249.7,462.3 247.7,460.7 245.7,459.0 243.5,457.2 241.1,455.2 238.5,453.1 235.8,450.9 232.9,448.5 229.8,446.0 226.7,443.4 223.4,440.7 220.0,437.8 216.3,434.7 212.4,431.3 208.4,427.8 204.1,423.9 199.6,419.7 195.0,415.2 190.3,410.6 185.2,405.4 179.7,399.4 173.6,392.5 167.1,384.8 160.3,376.5 153.1,367.4 145.7,357.5 137.9,346.9 130.0,335.6 121.8,323.7 113.5,310.9 104.9,297.4 96.3,283.4 87.9,269.3 79.4,254.8 71.0,240.0 62.8,225.1 55.2,210.5 48.1,196.0 41.4,181.5 35.3,167.4 29.6,154.0 24.5,141.2 19.9,128.8 15.8,117.2 12.3,106.4 9.3,96.4 6.8,87.2 4.9,78.8 3.3,71.0 2.1,63.9 1.4,57.5 1.1,51.7 1.1,46.3 1.5,41.4 2.2,37.0 3.2,33.0 4.5,29.4 6.2,26.2 8.1,23.3 10.3,20.8 12.7,18.7 15.3,16.8 18.1,15.4 21.1,14.2 24.2,13.2 27.5,12.4 30.9,11.8 34.4,11.5 38.0,11.1 41.6,10.9 45.4,10.8 49.2,10.7 52.9,10.6 56.7,10.6 60.5,10.7 64.3,10.7 68.2,10.8 72.1,11.0 76.0,11.1 80.0,11.3 84.0,11.6 88.2,11.8 92.4,12.1 96.7,12.5 101.1,12.8 105.6,13.2 110.2,13.6 114.9,14.0 119.7,14.5 124.6,15.0 129.7,15.5 134.8,16.0 140.1,16.5 145.6,17.1 151.1,17.7 156.9,18.3 162.8,19.0 168.8,19.6 175.0,20.3 181.3,21.0 187.8,21.8 194.5,22.5 201.3,23.3 208.3,24.1 215.5,24.9 222.9,25.7 230.4,26.6 238.1,27.5 246.0,28.4 254.0,29.3 262.2,30.2 270.6,31.2 279.2,32.2 287.9,33.2 296.8,34.2 305.8,35.3 315.0,36.3 324.3,37.4 333.8,38.4 343.3,39.5 352.9,40.6 362.6,41.8 372.4,42.9 382.2,44.0 391.8,45.1 401.4,46.2 410.8,47.3 420.2,48.4 429.6,49.5 438.9,50.5 448.2,51.6 457.4,52.7 466.3,53.7 475.0,54.7 483.4,55.6 491.6,56.6 499.6,57.5 507.3,58.4 514.8,59.2 522.0,60.1 529.0,60.9 535.7,61.6 542.0,62.4 548.2,63.1 554.0,63.7 559.6,64.4 565.0,65.0 570.1,65.6 575.0,66.1 579.7,66.7 584.2,67.2 588.5,67.7 592.6,68.2 596.7,68.6 600.6,69.1 604.4,69.5 608.0,69.9 611.4,70.3 614.7,70.7 617.9,71.1 620.9,71.4 623.8,71.7 626.5,72.1 629.0,72.3 631.4,72.6 633.6,72.9 635.7,73.1 637.7,73.3 639.5,73.5 641.3,73.7 642.9,73.9 644.4,74.1 645.9,74.3 647.2,74.4 648.4,74.6 649.6,74.7 650.6,74.8 651.5,74.9 652.3,75.0 653.0,75.1 653.7,75.2 654.3,75.2 654.9,75.3 655.5,75.4 656.2,75.5 657.1,75.6 658.1,75.7 659.2,75.8 660.2,75.9 661.2,76.0 662.3,76.2 663.3,76.3 663.9,76.4Z M479.90,62.92 132.81,30.50 186.52,361.73Z" fill="#000" fill-opacity="0.40" fill-rule="evenodd" shape-rendering="geometricPrecision"/></svg><div class="a" style="left:1021px;top:119px;width:641px;height:493px;border:1.5px solid #a8a8a8"></div><div class="a" style="left:1021px;top:611px;width:2px;height:6px;background:#b8b8b8"></div><div class="t" style="top:621.10px;font-size:14px;color:#d8d8d8;left:621.60px;width:800px;text-align:center;">0</div><div class="a" style="left:1074px;top:611px;width:2px;height:6px;background:#b8b8b8"></div><div class="t" style="top:621.10px;font-size:14px;color:#d8d8d8;left:674.88px;width:800px;text-align:center;">0,05</div><div class="a" style="left:1127px;top:611px;width:2px;height:6px;background:#b8b8b8"></div><div class="t" style="top:621.10px;font-size:14px;color:#d8d8d8;left:728.17px;width:800px;text-align:center;">0,1</div><div class="a" style="left:1180px;top:611px;width:2px;height:6px;background:#b8b8b8"></div><div class="t" style="top:621.10px;font-size:14px;color:#d8d8d8;left:781.45px;width:800px;text-align:center;">0,15</div><div class="a" style="left:1234px;top:611px;width:2px;height:6px;background:#b8b8b8"></div><div class="t" style="top:621.10px;font-size:14px;color:#d8d8d8;left:834.73px;width:800px;text-align:center;">0,2</div><div class="a" style="left:1287px;top:611px;width:2px;height:6px;background:#b8b8b8"></div><div class="t" style="top:621.10px;font-size:14px;color:#d8d8d8;left:888.02px;width:800px;text-align:center;">0,25</div><div class="a" style="left:1340px;top:611px;width:2px;height:6px;background:#b8b8b8"></div><div class="t" style="top:621.10px;font-size:14px;color:#d8d8d8;left:941.30px;width:800px;text-align:center;">0,3</div><div class="a" style="left:1394px;top:611px;width:2px;height:6px;background:#b8b8b8"></div><div class="t" style="top:621.10px;font-size:14px;color:#d8d8d8;left:994.58px;width:800px;text-align:center;">0,35</div><div class="a" style="left:1447px;top:611px;width:2px;height:6px;background:#b8b8b8"></div><div class="t" style="top:621.10px;font-size:14px;color:#d8d8d8;left:1047.87px;width:800px;text-align:center;">0,4</div><div class="a" style="left:1500px;top:611px;width:2px;height:6px;background:#b8b8b8"></div><div class="t" style="top:621.10px;font-size:14px;color:#d8d8d8;left:1101.15px;width:800px;text-align:center;">0,45</div><div class="a" style="left:1553px;top:611px;width:2px;height:6px;background:#b8b8b8"></div><div class="t" style="top:621.10px;font-size:14px;color:#d8d8d8;left:1154.43px;width:800px;text-align:center;">0,5</div><div class="a" style="left:1607px;top:611px;width:2px;height:6px;background:#b8b8b8"></div><div class="t" style="top:621.10px;font-size:14px;color:#d8d8d8;left:1207.72px;width:800px;text-align:center;">0,55</div><div class="a" style="left:1016px;top:610px;width:6px;height:2px;background:#b8b8b8"></div><div class="t" style="top:605.60px;font-size:14px;color:#d8d8d8;left:215.00px;width:800px;text-align:right;">0</div><div class="a" style="left:1016px;top:569px;width:6px;height:2px;background:#b8b8b8"></div><div class="t" style="top:564.67px;font-size:14px;color:#d8d8d8;left:215.00px;width:800px;text-align:right;">0,05</div><div class="a" style="left:1016px;top:528px;width:6px;height:2px;background:#b8b8b8"></div><div class="t" style="top:523.73px;font-size:14px;color:#d8d8d8;left:215.00px;width:800px;text-align:right;">0,1</div><div class="a" style="left:1016px;top:487px;width:6px;height:2px;background:#b8b8b8"></div><div class="t" style="top:482.80px;font-size:14px;color:#d8d8d8;left:215.00px;width:800px;text-align:right;">0,15</div><div class="a" style="left:1016px;top:446px;width:6px;height:2px;background:#b8b8b8"></div><div class="t" style="top:441.87px;font-size:14px;color:#d8d8d8;left:215.00px;width:800px;text-align:right;">0,2</div><div class="a" style="left:1016px;top:405px;width:6px;height:2px;background:#b8b8b8"></div><div class="t" style="top:400.93px;font-size:14px;color:#d8d8d8;left:215.00px;width:800px;text-align:right;">0,25</div><div class="a" style="left:1016px;top:364px;width:6px;height:2px;background:#b8b8b8"></div><div class="t" style="top:360.00px;font-size:14px;color:#d8d8d8;left:215.00px;width:800px;text-align:right;">0,3</div><div class="a" style="left:1016px;top:323px;width:6px;height:2px;background:#b8b8b8"></div><div class="t" style="top:319.07px;font-size:14px;color:#d8d8d8;left:215.00px;width:800px;text-align:right;">0,35</div><div class="a" style="left:1016px;top:283px;width:6px;height:2px;background:#b8b8b8"></div><div class="t" style="top:278.13px;font-size:14px;color:#d8d8d8;left:215.00px;width:800px;text-align:right;">0,4</div><div class="a" style="left:1016px;top:242px;width:6px;height:2px;background:#b8b8b8"></div><div class="t" style="top:237.20px;font-size:14px;color:#d8d8d8;left:215.00px;width:800px;text-align:right;">0,45</div><div class="a" style="left:1016px;top:201px;width:6px;height:2px;background:#b8b8b8"></div><div class="t" style="top:196.27px;font-size:14px;color:#d8d8d8;left:215.00px;width:800px;text-align:right;">0,5</div><div class="a" style="left:1016px;top:160px;width:6px;height:2px;background:#b8b8b8"></div><div class="t" style="top:155.33px;font-size:14px;color:#d8d8d8;left:215.00px;width:800px;text-align:right;">0,55</div><div class="a" style="left:1494.4px;top:175.4px;width:15px;height:15px;border:1.6px solid #f4f4f4"></div><div class="a" style="left:1147.3px;top:143.0px;width:15px;height:15px;border:1.6px solid #f4f4f4"></div><div class="a" style="left:1201.0px;top:474.2px;width:15px;height:15px;border:1.6px solid #f4f4f4"></div><div class="a" style="left:1161.5px;top:230.6px;width:15px;height:15px;border:1.6px solid #f4f4f4"></div><div class="a" style="left:1339.2px;top:333.6px;width:15px;height:15px;border:1.6px solid #f4f4f4"></div><div class="a" style="left:1231.5px;top:150.8px;width:15px;height:15px;border:1.6px solid #f4f4f4"></div><div class="a" style="left:1224.9px;top:220.1px;width:15px;height:15px;border:2.5px solid #000"></div><div class="a" style="left:1493.0px;top:172.0px;width:10px;height:10px;border:1.4px solid #111;border-radius:50%;background:#9e0100"></div><div class="a" style="left:1141.5px;top:143.4px;width:10px;height:10px;border:1.4px solid #111;border-radius:50%;background:#009e00"></div><div class="a" style="left:1208.7px;top:486.2px;width:10px;height:10px;border:1.4px solid #111;border-radius:50%;background:#02009e"></div><div class="a" style="left:1158.1px;top:222.4px;width:10px;height:10px;border:1.4px solid #111;border-radius:50%;background:#009e84"></div><div class="a" style="left:1351.6px;top:326.5px;width:10px;height:10px;border:1.4px solid #111;border-radius:50%;background:#9e008b"></div><div class="a" style="left:1232.5px;top:151.3px;width:10px;height:10px;border:1.4px solid #111;border-radius:50%;background:#9a9e00"></div><div class="a" style="left:1228.5px;top:219.0px;width:10px;height:10px;border:1.4px solid #111;border-radius:50%;background:#fff"></div><div class="a" style="left:1406px;top:580px;width:252px;height:27px;background:#353535"></div><div class="t" style="left:1405.81px;top:583.64px;font-size:19.6px;color:#f4f4f4;transform:scaleX(1.0062);transform-origin:0 0;">Gamut Coverage:&nbsp; 99%</div><div class="t" style="left:772.50px;top:659.67px;font-size:14.5px;color:#d8d8d8;transform:scaleX(0.9611);transform-origin:0 0;">CIE 1931 xy</div><svg class="a" style="left:641px;top:678px" width="341" height="197" shape-rendering="crispEdges"><defs><linearGradient id="h0" gradientUnits="userSpaceOnUse" x1="0" x2="341"><stop offset="0.0015" stop-color="#87ffcf"/><stop offset="0.6408" stop-color="#e6ffcb"/><stop offset="0.8050" stop-color="#fffdc8"/><stop offset="0.9985" stop-color="#ffe0b0"/></linearGradient><linearGradient id="h1" gradientUnits="userSpaceOnUse" x1="0" x2="341"><stop offset="0.0015" stop-color="#88ffd0"/><stop offset="0.6378" stop-color="#e7ffcc"/><stop offset="0.7962" stop-color="#fffdc9"/><stop offset="0.9985" stop-color="#ffdfb0"/></linearGradient><linearGradient id="h2" gradientUnits="userSpaceOnUse" x1="0" x2="341"><stop offset="0.0015" stop-color="#89ffd1"/><stop offset="0.6349" stop-color="#e8ffcd"/><stop offset="0.7874" stop-color="#fffdcb"/><stop offset="0.9985" stop-color="#ffddb0"/></linearGradient><linearGradient id="h3" gradientUnits="userSpaceOnUse" x1="0" x2="341"><stop offset="0.0015" stop-color="#8affd3"/><stop offset="0.6320" stop-color="#e9ffcf"/><stop offset="0.7786" stop-color="#fffdcc"/><stop offset="0.9985" stop-color="#ffdcb0"/></linearGradient><linearGradient id="h4" gradientUnits="userSpaceOnUse" x1="0" x2="341"><stop offset="0.0015" stop-color="#8bffd4"/><stop offset="0.6290" stop-color="#e9ffd0"/><stop offset="0.7698" stop-color="#fffdce"/><stop offset="0.9985" stop-color="#ffdbb1"/></linearGradient><linearGradient id="h5" gradientUnits="userSpaceOnUse" x1="0" x2="341"><stop offset="0.0015" stop-color="#8cffd5"/><stop offset="0.6290" stop-color="#ebffd2"/><stop offset="0.7610" stop-color="#fffdcf"/><stop offset="0.9985" stop-color="#ffd9b1"/></linearGradient><linearGradient id="h6" gradientUnits="userSpaceOnUse" x1="0" x2="341"><stop offset="0.0015" stop-color="#8dffd7"/><stop offset="0.6261" stop-color="#ecffd3"/><stop offset="0.7522" stop-color="#fffdd1"/><stop offset="0.9985" stop-color="#ffd8b1"/></linearGradient><linearGradient id="h7" gradientUnits="userSpaceOnUse" x1="0" x2="341"><stop offset="0.0015" stop-color="#8effd8"/><stop offset="0.6232" stop-color="#edffd5"/><stop offset="0.7434" stop-color="#fffdd2"/><stop offset="0.9985" stop-color="#ffd7b1"/></linearGradient><linearGradient id="h8" gradientUnits="userSpaceOnUse" x1="0" x2="341"><stop offset="0.0015" stop-color="#8fffda"/><stop offset="0.6202" stop-color="#eeffd6"/><stop offset="0.7346" stop-color="#fffdd4"/><stop offset="0.9985" stop-color="#ffd5b2"/></linearGradient><linearGradient id="h9" gradientUnits="userSpaceOnUse" x1="0" x2="341"><stop offset="0.0015" stop-color="#90ffdb"/><stop offset="0.6173" stop-color="#efffd8"/><stop offset="0.7229" stop-color="#fffdd6"/><stop offset="0.9985" stop-color="#ffd4b2"/></linearGradient><linearGradient id="h10" gradientUnits="userSpaceOnUse" x1="0" x2="341"><stop offset="0.0015" stop-color="#91ffdc"/><stop offset="0.6144" stop-color="#f0ffda"/><stop offset="0.7141" stop-color="#fffdd7"/><stop offset="0.9985" stop-color="#ffd3b2"/></linearGradient><linearGradient id="h11" gradientUnits="userSpaceOnUse" x1="0" x2="341"><stop offset="0.0015" stop-color="#92ffde"/><stop offset="0.6114" stop-color="#f1ffdb"/><stop offset="0.7053" stop-color="#fffdd9"/><stop offset="0.9985" stop-color="#ffd2b2"/></linearGradient><linearGradient id="h12" gradientUnits="userSpaceOnUse" x1="0" x2="341"><stop offset="0.0015" stop-color="#93ffdf"/><stop offset="0.6114" stop-color="#f2ffdd"/><stop offset="0.6965" stop-color="#fffdda"/><stop offset="0.9985" stop-color="#ffd0b3"/></linearGradient><linearGradient id="h13" gradientUnits="userSpaceOnUse" x1="0" x2="341"><stop offset="0.0015" stop-color="#94ffe1"/><stop offset="0.6085" stop-color="#f3ffde"/><stop offset="0.6877" stop-color="#fffddc"/><stop offset="0.9985" stop-color="#ffcfb3"/></linearGradient><linearGradient id="h14" gradientUnits="userSpaceOnUse" x1="0" x2="341"><stop offset="0.0015" stop-color="#95ffe2"/><stop offset="0.6056" stop-color="#f5ffe0"/><stop offset="0.6789" stop-color="#fffdde"/><stop offset="0.9985" stop-color="#ffceb3"/></linearGradient><linearGradient id="h15" gradientUnits="userSpaceOnUse" x1="0" x2="341"><stop offset="0.0015" stop-color="#96ffe4"/><stop offset="0.6026" stop-color="#f6ffe1"/><stop offset="0.6701" stop-color="#fffddf"/><stop offset="0.9985" stop-color="#ffcdb3"/></linearGradient><linearGradient id="h16" gradientUnits="userSpaceOnUse" x1="0" x2="341"><stop offset="0.0015" stop-color="#97ffe5"/><stop offset="0.5997" stop-color="#f7ffe3"/><stop offset="0.6613" stop-color="#fffde1"/><stop offset="0.9927" stop-color="#ffccb4"/><stop offset="0.9985" stop-color="#ffcbb4"/></linearGradient><linearGradient id="h17" gradientUnits="userSpaceOnUse" x1="0" x2="341"><stop offset="0.0015" stop-color="#98ffe7"/><stop offset="0.5968" stop-color="#f8ffe5"/><stop offset="0.6525" stop-color="#fffde2"/><stop offset="0.9809" stop-color="#ffccb6"/><stop offset="0.9985" stop-color="#ffcab4"/></linearGradient><linearGradient id="h18" gradientUnits="userSpaceOnUse" x1="0" x2="341"><stop offset="0.0015" stop-color="#9affe8"/><stop offset="0.5938" stop-color="#f9ffe6"/><stop offset="0.6466" stop-color="#fffce3"/><stop offset="0.9751" stop-color="#ffccb7"/><stop offset="0.9985" stop-color="#ffc9b4"/></linearGradient><linearGradient id="h19" gradientUnits="userSpaceOnUse" x1="0" x2="341"><stop offset="0.0015" stop-color="#9bffea"/><stop offset="0.5938" stop-color="#faffe8"/><stop offset="0.6378" stop-color="#fffce5"/><stop offset="0.9663" stop-color="#ffccb8"/><stop offset="0.9985" stop-color="#ffc8b4"/></linearGradient><linearGradient id="h20" gradientUnits="userSpaceOnUse" x1="0" x2="341"><stop offset="0.0015" stop-color="#9cffeb"/><stop offset="0.5909" stop-color="#fbffea"/><stop offset="0.6349" stop-color="#fffbe6"/><stop offset="0.9633" stop-color="#ffcbb9"/><stop offset="0.9985" stop-color="#ffc6b5"/></linearGradient><linearGradient id="h21" gradientUnits="userSpaceOnUse" x1="0" x2="341"><stop offset="0.0015" stop-color="#9dffed"/><stop offset="0.5880" stop-color="#fdffeb"/><stop offset="0.6613" stop-color="#fff5e2"/><stop offset="0.9985" stop-color="#ffc5b5"/></linearGradient><linearGradient id="h22" gradientUnits="userSpaceOnUse" x1="0" x2="341"><stop offset="0.0015" stop-color="#9effee"/><stop offset="0.5850" stop-color="#feffed"/><stop offset="0.9633" stop-color="#ffc8b9"/><stop offset="0.9985" stop-color="#ffc4b5"/></linearGradient><linearGradient id="h23" gradientUnits="userSpaceOnUse" x1="0" x2="341"><stop offset="0.0015" stop-color="#9ffff0"/><stop offset="0.5938" stop-color="#fffded"/><stop offset="0.9164" stop-color="#ffcdbf"/><stop offset="0.9985" stop-color="#ffc3b5"/></linearGradient><linearGradient id="h24" gradientUnits="userSpaceOnUse" x1="0" x2="341"><stop offset="0.0015" stop-color="#a0fff1"/><stop offset="0.5850" stop-color="#fffdef"/><stop offset="0.9076" stop-color="#ffcdc0"/><stop offset="0.9985" stop-color="#ffc1b6"/></linearGradient><linearGradient id="h25" gradientUnits="userSpaceOnUse" x1="0" x2="341"><stop offset="0.0015" stop-color="#a1fff3"/><stop offset="0.5762" stop-color="#fffdf0"/><stop offset="0.8988" stop-color="#ffccc2"/><stop offset="0.9985" stop-color="#ffc0b6"/></linearGradient><linearGradient id="h26" gradientUnits="userSpaceOnUse" x1="0" x2="341"><stop offset="0.0015" stop-color="#a3fff5"/><stop offset="0.5674" stop-color="#fffdf2"/><stop offset="0.8871" stop-color="#ffcdc3"/><stop offset="0.9985" stop-color="#ffbfb6"/></linearGradient><linearGradient id="h27" gradientUnits="userSpaceOnUse" x1="0" x2="341"><stop offset="0.0015" stop-color="#a4fff6"/><stop offset="0.5557" stop-color="#fffdf4"/><stop offset="0.8754" stop-color="#ffcdc5"/><stop offset="0.9985" stop-color="#ffbeb6"/></linearGradient><linearGradient id="h28" gradientUnits="userSpaceOnUse" x1="0" x2="341"><stop offset="0.0015" stop-color="#a5fff8"/><stop offset="0.5469" stop-color="#fffdf6"/><stop offset="0.8666" stop-color="#ffcdc6"/><stop offset="0.9985" stop-color="#ffbdb7"/></linearGradient><linearGradient id="h29" gradientUnits="userSpaceOnUse" x1="0" x2="341"><stop offset="0.0015" stop-color="#a6fff9"/><stop offset="0.5381" stop-color="#fffdf7"/><stop offset="0.8548" stop-color="#ffcdc8"/><stop offset="0.9985" stop-color="#ffbbb7"/></linearGradient><linearGradient id="h30" gradientUnits="userSpaceOnUse" x1="0" x2="341"><stop offset="0.0015" stop-color="#a7fffb"/><stop offset="0.5293" stop-color="#fffdf9"/><stop offset="0.8460" stop-color="#ffcdc9"/><stop offset="0.9985" stop-color="#ffbab7"/></linearGradient><linearGradient id="h31" gradientUnits="userSpaceOnUse" x1="0" x2="341"><stop offset="0.0015" stop-color="#a9fffd"/><stop offset="0.5205" stop-color="#fffdfb"/><stop offset="0.8372" stop-color="#ffcdcb"/><stop offset="0.9985" stop-color="#ffb9b7"/></linearGradient><linearGradient id="h32" gradientUnits="userSpaceOnUse" x1="0" x2="341"><stop offset="0.0015" stop-color="#aafffe"/><stop offset="0.5117" stop-color="#fffdfd"/><stop offset="0.8284" stop-color="#ffcccc"/><stop offset="0.9985" stop-color="#ffb8b8"/></linearGradient><linearGradient id="h33" gradientUnits="userSpaceOnUse" x1="0" x2="341"><stop offset="0.0015" stop-color="#aafeff"/><stop offset="0.5088" stop-color="#fffcfd"/><stop offset="0.8255" stop-color="#ffcbcd"/><stop offset="0.9985" stop-color="#ffb7b8"/></linearGradient><linearGradient id="h34" gradientUnits="userSpaceOnUse" x1="0" x2="341"><stop offset="0.0015" stop-color="#aafcff"/><stop offset="0.5088" stop-color="#fffafd"/><stop offset="0.8255" stop-color="#ffcacd"/><stop offset="0.9985" stop-color="#ffb5b8"/></linearGradient><linearGradient id="h35" gradientUnits="userSpaceOnUse" x1="0" x2="341"><stop offset="0.0015" stop-color="#abfbff"/><stop offset="0.5117" stop-color="#fff8fd"/><stop offset="0.8314" stop-color="#ffc8cc"/><stop offset="0.9985" stop-color="#ffb4b8"/></linearGradient><linearGradient id="h36" gradientUnits="userSpaceOnUse" x1="0" x2="341"><stop offset="0.0015" stop-color="#abf9ff"/><stop offset="0.5117" stop-color="#fff6fd"/><stop offset="0.8314" stop-color="#ffc7cd"/><stop offset="0.9985" stop-color="#ffb3b9"/></linearGradient><linearGradient id="h37" gradientUnits="userSpaceOnUse" x1="0" x2="341"><stop offset="0.0015" stop-color="#abf7ff"/><stop offset="0.5117" stop-color="#fff5fd"/><stop offset="0.8314" stop-color="#ffc5cd"/><stop offset="0.9985" stop-color="#ffb2b9"/></linearGradient><linearGradient id="h38" gradientUnits="userSpaceOnUse" x1="0" x2="341"><stop offset="0.0015" stop-color="#abf6ff"/><stop offset="0.5117" stop-color="#fff3fd"/><stop offset="0.8314" stop-color="#ffc4cd"/><stop offset="0.9985" stop-color="#ffb1b9"/></linearGradient><linearGradient id="h39" gradientUnits="userSpaceOnUse" x1="0" x2="341"><stop offset="0.0015" stop-color="#abf4ff"/><stop offset="0.5147" stop-color="#fff1fd"/><stop offset="0.8372" stop-color="#ffc2cc"/><stop offset="0.9985" stop-color="#ffb0b9"/></linearGradient><linearGradient id="h40" gradientUnits="userSpaceOnUse" x1="0" x2="341"><stop offset="0.0015" stop-color="#abf2ff"/><stop offset="0.5147" stop-color="#ffeffd"/><stop offset="0.8372" stop-color="#ffc1cd"/><stop offset="0.9985" stop-color="#ffafb9"/></linearGradient><linearGradient id="h41" gradientUnits="userSpaceOnUse" x1="0" x2="341"><stop offset="0.0015" stop-color="#abf1ff"/><stop offset="0.5147" stop-color="#ffeefd"/><stop offset="0.8372" stop-color="#ffc0cd"/><stop offset="0.9985" stop-color="#ffadba"/></linearGradient><linearGradient id="h42" gradientUnits="userSpaceOnUse" x1="0" x2="341"><stop offset="0.0015" stop-color="#abefff"/><stop offset="0.5147" stop-color="#ffecfd"/><stop offset="0.8372" stop-color="#ffbecd"/><stop offset="0.9985" stop-color="#ffacba"/></linearGradient><linearGradient id="h43" gradientUnits="userSpaceOnUse" x1="0" x2="341"><stop offset="0.0015" stop-color="#abeeff"/><stop offset="0.5176" stop-color="#ffeafd"/><stop offset="0.8431" stop-color="#ffbccc"/><stop offset="0.9985" stop-color="#ffabba"/></linearGradient><linearGradient id="h44" gradientUnits="userSpaceOnUse" x1="0" x2="341"><stop offset="0.0015" stop-color="#acecff"/><stop offset="0.5176" stop-color="#ffe9fd"/><stop offset="0.8431" stop-color="#ffbbcd"/><stop offset="0.9985" stop-color="#ffaaba"/></linearGradient><linearGradient id="h45" gradientUnits="userSpaceOnUse" x1="0" x2="341"><stop offset="0.0015" stop-color="#aceaff"/><stop offset="0.5176" stop-color="#ffe7fd"/><stop offset="0.8431" stop-color="#ffbacd"/><stop offset="0.9985" stop-color="#ffa9bb"/></linearGradient><linearGradient id="h46" gradientUnits="userSpaceOnUse" x1="0" x2="341"><stop offset="0.0015" stop-color="#ace9ff"/><stop offset="0.5176" stop-color="#ffe6fd"/><stop offset="0.8460" stop-color="#ffb8cd"/><stop offset="0.9985" stop-color="#ffa8bb"/></linearGradient><linearGradient id="h47" gradientUnits="userSpaceOnUse" x1="0" x2="341"><stop offset="0.0015" stop-color="#ace7ff"/><stop offset="0.5205" stop-color="#ffe4fd"/><stop offset="0.8490" stop-color="#ffb7cd"/><stop offset="0.9985" stop-color="#ffa7bb"/></linearGradient><linearGradient id="h48" gradientUnits="userSpaceOnUse" x1="0" x2="341"><stop offset="0.0015" stop-color="#ace6ff"/><stop offset="0.5205" stop-color="#ffe2fd"/><stop offset="0.8490" stop-color="#ffb6cd"/><stop offset="0.9985" stop-color="#ffa6bb"/></linearGradient><linearGradient id="h49" gradientUnits="userSpaceOnUse" x1="0" x2="341"><stop offset="0.0015" stop-color="#ace4ff"/><stop offset="0.5205" stop-color="#ffe0fd"/><stop offset="0.8519" stop-color="#ffb4cd"/><stop offset="0.9985" stop-color="#ffa4bb"/></linearGradient><linearGradient id="h50" gradientUnits="userSpaceOnUse" x1="0" x2="341"><stop offset="0.0015" stop-color="#ace3ff"/><stop offset="0.5205" stop-color="#ffdffd"/><stop offset="0.8519" stop-color="#ffb3cd"/><stop offset="0.9985" stop-color="#ffa3bc"/></linearGradient><linearGradient id="h51" gradientUnits="userSpaceOnUse" x1="0" x2="341"><stop offset="0.0015" stop-color="#ace1ff"/><stop offset="0.5235" stop-color="#ffddfd"/><stop offset="0.8548" stop-color="#ffb1cd"/><stop offset="0.9985" stop-color="#ffa2bc"/></linearGradient><linearGradient id="h52" gradientUnits="userSpaceOnUse" x1="0" x2="341"><stop offset="0.0015" stop-color="#ace0ff"/><stop offset="0.5235" stop-color="#ffdbfd"/><stop offset="0.8578" stop-color="#ffb0cc"/><stop offset="0.9985" stop-color="#ffa1bc"/></linearGradient><linearGradient id="h53" gradientUnits="userSpaceOnUse" x1="0" x2="341"><stop offset="0.0015" stop-color="#acdeff"/><stop offset="0.5235" stop-color="#ffdafd"/><stop offset="0.8578" stop-color="#ffafcd"/><stop offset="0.9985" stop-color="#ffa0bc"/></linearGradient><linearGradient id="h54" gradientUnits="userSpaceOnUse" x1="0" x2="341"><stop offset="0.0015" stop-color="#acddff"/><stop offset="0.5235" stop-color="#ffd8fd"/><stop offset="0.8578" stop-color="#ffadcd"/><stop offset="0.9985" stop-color="#ff9fbd"/></linearGradient><linearGradient id="h55" gradientUnits="userSpaceOnUse" x1="0" x2="341"><stop offset="0.0015" stop-color="#addbff"/><stop offset="0.5264" stop-color="#ffd7fd"/><stop offset="0.8636" stop-color="#ffaccc"/><stop offset="0.9985" stop-color="#ff9ebd"/></linearGradient><linearGradient id="h56" gradientUnits="userSpaceOnUse" x1="0" x2="341"><stop offset="0.0015" stop-color="#addaff"/><stop offset="0.5264" stop-color="#ffd5fd"/><stop offset="0.8636" stop-color="#ffaacd"/><stop offset="0.9985" stop-color="#ff9dbd"/></linearGradient><linearGradient id="h57" gradientUnits="userSpaceOnUse" x1="0" x2="341"><stop offset="0.0015" stop-color="#add8ff"/><stop offset="0.5264" stop-color="#ffd4fd"/><stop offset="0.8636" stop-color="#ffa9cd"/><stop offset="0.9985" stop-color="#ff9cbd"/></linearGradient><linearGradient id="h58" gradientUnits="userSpaceOnUse" x1="0" x2="341"><stop offset="0.0015" stop-color="#add7ff"/><stop offset="0.5264" stop-color="#ffd2fd"/><stop offset="0.8636" stop-color="#ffa8cd"/><stop offset="0.9985" stop-color="#ff9bbd"/></linearGradient><linearGradient id="h59" gradientUnits="userSpaceOnUse" x1="0" x2="341"><stop offset="0.0015" stop-color="#add5ff"/><stop offset="0.5293" stop-color="#ffd0fd"/><stop offset="0.8695" stop-color="#ffa6cc"/><stop offset="0.9985" stop-color="#ff9abe"/></linearGradient><linearGradient id="h60" gradientUnits="userSpaceOnUse" x1="0" x2="341"><stop offset="0.0015" stop-color="#add4ff"/><stop offset="0.5293" stop-color="#ffcffd"/><stop offset="0.8695" stop-color="#ffa5cd"/><stop offset="0.9985" stop-color="#ff98be"/></linearGradient><linearGradient id="h61" gradientUnits="userSpaceOnUse" x1="0" x2="341"><stop offset="0.0015" stop-color="#add2ff"/><stop offset="0.5293" stop-color="#ffcdfd"/><stop offset="0.8695" stop-color="#ffa4cd"/><stop offset="0.9985" stop-color="#ff97be"/></linearGradient><linearGradient id="h62" gradientUnits="userSpaceOnUse" x1="0" x2="341"><stop offset="0.0015" stop-color="#add1ff"/><stop offset="0.5293" stop-color="#ffccfd"/><stop offset="0.8695" stop-color="#ffa3cd"/><stop offset="0.9985" stop-color="#ff96be"/></linearGradient><linearGradient id="h63" gradientUnits="userSpaceOnUse" x1="0" x2="341"><stop offset="0.0015" stop-color="#adcfff"/><stop offset="0.5323" stop-color="#ffcafd"/><stop offset="0.8754" stop-color="#ffa1cd"/><stop offset="0.9985" stop-color="#ff95be"/></linearGradient><linearGradient id="h64" gradientUnits="userSpaceOnUse" x1="0" x2="341"><stop offset="0.0015" stop-color="#adceff"/><stop offset="0.5323" stop-color="#ffc9fd"/><stop offset="0.8754" stop-color="#ffa0cd"/><stop offset="0.9985" stop-color="#ff94bf"/></linearGradient><linearGradient id="h65" gradientUnits="userSpaceOnUse" x1="0" x2="341"><stop offset="0.0015" stop-color="#aeccff"/><stop offset="0.5323" stop-color="#ffc7fd"/><stop offset="0.8754" stop-color="#ff9fcd"/><stop offset="0.9985" stop-color="#ff93bf"/></linearGradient></defs><rect y="0" width="341" height="3" fill="url(#h0)"/><rect y="3" width="341" height="3" fill="url(#h1)"/><rect y="6" width="341" height="3" fill="url(#h2)"/><rect y="9" width="341" height="3" fill="url(#h3)"/><rect y="12" width="341" height="3" fill="url(#h4)"/><rect y="15" width="341" height="3" fill="url(#h5)"/><rect y="18" width="341" height="3" fill="url(#h6)"/><rect y="21" width="341" height="3" fill="url(#h7)"/><rect y="24" width="341" height="3" fill="url(#h8)"/><rect y="27" width="341" height="3" fill="url(#h9)"/><rect y="30" width="341" height="3" fill="url(#h10)"/><rect y="33" width="341" height="3" fill="url(#h11)"/><rect y="36" width="341" height="3" fill="url(#h12)"/><rect y="39" width="341" height="3" fill="url(#h13)"/><rect y="42" width="341" height="3" fill="url(#h14)"/><rect y="45" width="341" height="3" fill="url(#h15)"/><rect y="48" width="341" height="3" fill="url(#h16)"/><rect y="51" width="341" height="3" fill="url(#h17)"/><rect y="54" width="341" height="3" fill="url(#h18)"/><rect y="57" width="341" height="3" fill="url(#h19)"/><rect y="60" width="341" height="3" fill="url(#h20)"/><rect y="63" width="341" height="3" fill="url(#h21)"/><rect y="66" width="341" height="3" fill="url(#h22)"/><rect y="69" width="341" height="3" fill="url(#h23)"/><rect y="72" width="341" height="3" fill="url(#h24)"/><rect y="75" width="341" height="3" fill="url(#h25)"/><rect y="78" width="341" height="3" fill="url(#h26)"/><rect y="81" width="341" height="3" fill="url(#h27)"/><rect y="84" width="341" height="3" fill="url(#h28)"/><rect y="87" width="341" height="3" fill="url(#h29)"/><rect y="90" width="341" height="3" fill="url(#h30)"/><rect y="93" width="341" height="3" fill="url(#h31)"/><rect y="96" width="341" height="3" fill="url(#h32)"/><rect y="99" width="341" height="3" fill="url(#h33)"/><rect y="102" width="341" height="3" fill="url(#h34)"/><rect y="105" width="341" height="3" fill="url(#h35)"/><rect y="108" width="341" height="3" fill="url(#h36)"/><rect y="111" width="341" height="3" fill="url(#h37)"/><rect y="114" width="341" height="3" fill="url(#h38)"/><rect y="117" width="341" height="3" fill="url(#h39)"/><rect y="120" width="341" height="3" fill="url(#h40)"/><rect y="123" width="341" height="3" fill="url(#h41)"/><rect y="126" width="341" height="3" fill="url(#h42)"/><rect y="129" width="341" height="3" fill="url(#h43)"/><rect y="132" width="341" height="3" fill="url(#h44)"/><rect y="135" width="341" height="3" fill="url(#h45)"/><rect y="138" width="341" height="3" fill="url(#h46)"/><rect y="141" width="341" height="3" fill="url(#h47)"/><rect y="144" width="341" height="3" fill="url(#h48)"/><rect y="147" width="341" height="3" fill="url(#h49)"/><rect y="150" width="341" height="3" fill="url(#h50)"/><rect y="153" width="341" height="3" fill="url(#h51)"/><rect y="156" width="341" height="3" fill="url(#h52)"/><rect y="159" width="341" height="3" fill="url(#h53)"/><rect y="162" width="341" height="3" fill="url(#h54)"/><rect y="165" width="341" height="3" fill="url(#h55)"/><rect y="168" width="341" height="3" fill="url(#h56)"/><rect y="171" width="341" height="3" fill="url(#h57)"/><rect y="174" width="341" height="3" fill="url(#h58)"/><rect y="177" width="341" height="3" fill="url(#h59)"/><rect y="180" width="341" height="3" fill="url(#h60)"/><rect y="183" width="341" height="3" fill="url(#h61)"/><rect y="186" width="341" height="3" fill="url(#h62)"/><rect y="189" width="341" height="3" fill="url(#h63)"/><rect y="192" width="341" height="3" fill="url(#h64)"/><rect y="195" width="341" height="3" fill="url(#h65)"/></svg><div class="a" style="left:640px;top:677px;width:343px;height:199px;border:1.5px solid #a0a0a0"></div><div class="a" style="left:802px;top:767px;width:16px;height:16px;border:2.5px solid #000"></div><div class="a" style="left:840px;top:742px;width:11px;height:11px;border:1.5px solid #333;border-radius:50%;background:#f4f4f4"></div><div class="a" style="left:842px;top:741px;width:11px;height:11px;border:1.5px solid #222;border-radius:50%;background:#fff"></div><div class="a" style="left:998px;top:661px;width:653px;height:225px;background:#000"></div><div class="a" style="left:999px;top:884px;width:651px;height:2px;background:#333"></div><div class="a" style="left:999px;top:662px;width:651px;height:34px;background:linear-gradient(#363636 0%,#333 45%,#1a1a1a 48%,#111 100%)"></div><div class="t" style="left:1110.43px;top:669.89px;font-size:18.6px;color:#f0f0f0;transform:scaleX(0.8896);transform-origin:0 0;">White</div><div class="t" style="left:1190.16px;top:669.89px;font-size:18.6px;color:#f0f0f0;transform:scaleX(0.8154);transform-origin:0 0;">Red</div><div class="t" style="left:1255.21px;top:669.89px;font-size:18.6px;color:#f0f0f0;transform:scaleX(0.8470);transform-origin:0 0;">Green</div><div class="t" style="left:1334.51px;top:669.89px;font-size:18.6px;color:#f0f0f0;transform:scaleX(0.8483);transform-origin:0 0;">Blue</div><div class="t" style="left:1406.05px;top:669.89px;font-size:18.6px;color:#f0f0f0;transform:scaleX(0.8040);transform-origin:0 0;">Cyan</div><div class="t" style="left:1466.29px;top:669.89px;font-size:18.6px;color:#f0f0f0;transform:scaleX(0.8608);transform-origin:0 0;">Magenta</div><div class="t" style="left:1550.16px;top:669.89px;font-size:18.6px;color:#f0f0f0;transform:scaleX(0.8385);transform-origin:0 0;">Yellow</div><div class="a" style="left:999px;top:695px;width:634px;height:170px;overflow:hidden"><div class="a" style="left:0px;top:1px;width:634px;height:31px;background:#3e3e3e"></div><div class="t" style="left:13.37px;top:7.38px;font-size:19.2px;color:#f4f4f4;transform:scaleX(0.8700);transform-origin:0 0;font-weight:bold;">x: CIE31</div><div class="t" style="left:97.06px;top:8.06px;font-size:18.4px;color:#f4f4f4;transform:scaleX(0.9150);transform-origin:0 0;">0,3179</div><div class="t" style="left:175.16px;top:8.06px;font-size:18.4px;color:#f4f4f4;transform:scaleX(0.9150);transform-origin:0 0;">0,6488</div><div class="t" style="left:243.36px;top:8.06px;font-size:18.4px;color:#f4f4f4;transform:scaleX(0.9150);transform-origin:0 0;">0,2881</div><div class="t" style="left:321.36px;top:8.06px;font-size:18.4px;color:#f4f4f4;transform:scaleX(0.9150);transform-origin:0 0;">0,1511</div><div class="t" style="left:389.36px;top:8.06px;font-size:18.4px;color:#f4f4f4;transform:scaleX(0.9150);transform-origin:0 0;">0,2255</div><div class="t" style="left:467.56px;top:8.06px;font-size:18.4px;color:#f4f4f4;transform:scaleX(0.9150);transform-origin:0 0;">0,3359</div><div class="t" style="left:538.36px;top:8.06px;font-size:18.4px;color:#f4f4f4;transform:scaleX(0.9150);transform-origin:0 0;">0,4212</div><div class="t" style="left:616.36px;top:8.06px;font-size:18.4px;color:#f4f4f4;transform:scaleX(0.9150);transform-origin:0 0;">0,3</div><div class="a" style="left:0px;top:31px;width:634px;height:31px;background:#7b7b7b"></div><div class="t" style="left:13.37px;top:38.28px;font-size:19.2px;color:#f4f4f4;transform:scaleX(0.8700);transform-origin:0 0;font-weight:bold;">y: CIE31</div><div class="t" style="left:97.06px;top:38.96px;font-size:18.4px;color:#f4f4f4;transform:scaleX(0.9150);transform-origin:0 0;">0,3359</div><div class="t" style="left:175.16px;top:38.96px;font-size:18.4px;color:#f4f4f4;transform:scaleX(0.9150);transform-origin:0 0;">0,3420</div><div class="t" style="left:243.36px;top:38.96px;font-size:18.4px;color:#f4f4f4;transform:scaleX(0.9150);transform-origin:0 0;">0,6173</div><div class="t" style="left:321.36px;top:38.96px;font-size:18.4px;color:#f4f4f4;transform:scaleX(0.9150);transform-origin:0 0;">0,0545</div><div class="t" style="left:389.36px;top:38.96px;font-size:18.4px;color:#f4f4f4;transform:scaleX(0.9150);transform-origin:0 0;">0,3538</div><div class="t" style="left:467.56px;top:38.96px;font-size:18.4px;color:#f4f4f4;transform:scaleX(0.9150);transform-origin:0 0;">0,1621</div><div class="t" style="left:538.36px;top:38.96px;font-size:18.4px;color:#f4f4f4;transform:scaleX(0.9150);transform-origin:0 0;">0,5133</div><div class="t" style="left:616.36px;top:38.96px;font-size:18.4px;color:#f4f4f4;transform:scaleX(0.9150);transform-origin:0 0;">0,3</div><div class="a" style="left:0px;top:62px;width:634px;height:31px;background:#3e3e3e"></div><div class="t" style="left:13.20px;top:69.18px;font-size:19.2px;color:#f4f4f4;transform:scaleX(0.8700);transform-origin:0 0;font-weight:bold;">Y</div><div class="t" style="left:96.86px;top:69.86px;font-size:18.4px;color:#f4f4f4;transform:scaleX(0.9150);transform-origin:0 0;">259,6276</div><div class="t" style="left:175.13px;top:69.86px;font-size:18.4px;color:#f4f4f4;transform:scaleX(0.9150);transform-origin:0 0;">59,9902</div><div class="t" style="left:242.72px;top:69.86px;font-size:18.4px;color:#f4f4f4;transform:scaleX(0.9150);transform-origin:0 0;">184,5306</div><div class="t" style="left:320.72px;top:69.86px;font-size:18.4px;color:#f4f4f4;transform:scaleX(0.9150);transform-origin:0 0;">15,8618</div><div class="t" style="left:389.16px;top:69.86px;font-size:18.4px;color:#f4f4f4;transform:scaleX(0.9150);transform-origin:0 0;">203,2695</div><div class="t" style="left:467.32px;top:69.86px;font-size:18.4px;color:#f4f4f4;transform:scaleX(0.9150);transform-origin:0 0;">76,4065</div><div class="t" style="left:538.16px;top:69.86px;font-size:18.4px;color:#f4f4f4;transform:scaleX(0.9150);transform-origin:0 0;">247,2591</div><div class="t" style="left:616.33px;top:69.86px;font-size:18.4px;color:#f4f4f4;transform:scaleX(0.9150);transform-origin:0 0;">51</div><div class="a" style="left:0px;top:93px;width:634px;height:31px;background:#7b7b7b"></div><div class="t" style="left:13.30px;top:100.08px;font-size:19.2px;color:#f4f4f4;transform:scaleX(0.8700);transform-origin:0 0;font-weight:bold;">Target Y</div><div class="t" style="left:96.86px;top:100.76px;font-size:18.4px;color:#f4f4f4;transform:scaleX(0.9150);transform-origin:0 0;">267,4635</div><div class="t" style="left:175.13px;top:100.76px;font-size:18.4px;color:#f4f4f4;transform:scaleX(0.9150);transform-origin:0 0;">56,8777</div><div class="t" style="left:242.72px;top:100.76px;font-size:18.4px;color:#f4f4f4;transform:scaleX(0.9150);transform-origin:0 0;">191,2788</div><div class="t" style="left:320.72px;top:100.76px;font-size:18.4px;color:#f4f4f4;transform:scaleX(0.9150);transform-origin:0 0;">19,3070</div><div class="t" style="left:389.16px;top:100.76px;font-size:18.4px;color:#f4f4f4;transform:scaleX(0.9150);transform-origin:0 0;">210,5858</div><div class="t" style="left:467.32px;top:100.76px;font-size:18.4px;color:#f4f4f4;transform:scaleX(0.9150);transform-origin:0 0;">76,1847</div><div class="t" style="left:538.16px;top:100.76px;font-size:18.4px;color:#f4f4f4;transform:scaleX(0.9150);transform-origin:0 0;">248,1565</div><div class="t" style="left:616.33px;top:100.76px;font-size:18.4px;color:#f4f4f4;transform:scaleX(0.9150);transform-origin:0 0;">51</div><div class="a" style="left:0px;top:124px;width:634px;height:31px;background:#3e3e3e"></div><div class="t" style="left:12.83px;top:130.98px;font-size:19.2px;color:#f4f4f4;transform:scaleX(0.8700);transform-origin:0 0;font-weight:bold;">ΔE 2000</div><div class="t" style="left:96.86px;top:131.66px;font-size:18.4px;color:#f4f4f4;transform:scaleX(0.9150);transform-origin:0 0;">2,9078</div><div class="t" style="left:175.13px;top:131.66px;font-size:18.4px;color:#f4f4f4;transform:scaleX(0.9150);transform-origin:0 0;">5,1318</div><div class="t" style="left:242.72px;top:131.66px;font-size:18.4px;color:#f4f4f4;transform:scaleX(0.9150);transform-origin:0 0;">1,5627</div><div class="t" style="left:321.16px;top:131.66px;font-size:18.4px;color:#f4f4f4;transform:scaleX(0.9150);transform-origin:0 0;">2,3136</div><div class="t" style="left:389.33px;top:131.66px;font-size:18.4px;color:#f4f4f4;transform:scaleX(0.9150);transform-origin:0 0;">5,4954</div><div class="t" style="left:466.92px;top:131.66px;font-size:18.4px;color:#f4f4f4;transform:scaleX(0.9150);transform-origin:0 0;">1,5368</div><div class="t" style="left:538.36px;top:131.66px;font-size:18.4px;color:#f4f4f4;transform:scaleX(0.9150);transform-origin:0 0;">0,9582</div><div class="t" style="left:616.36px;top:131.66px;font-size:18.4px;color:#f4f4f4;transform:scaleX(0.9150);transform-origin:0 0;">3,6</div><div class="a" style="left:0px;top:155px;width:634px;height:31px;background:#7b7b7b"></div><div class="t" style="left:12.83px;top:161.88px;font-size:19.2px;color:#f4f4f4;transform:scaleX(0.8700);transform-origin:0 0;font-weight:bold;">ΔE ITP</div><div class="t" style="left:97.33px;top:162.56px;font-size:18.4px;color:#f4f4f4;transform:scaleX(0.9150);transform-origin:0 0;">4,1207</div><div class="t" style="left:174.96px;top:162.56px;font-size:18.4px;color:#f4f4f4;transform:scaleX(0.9150);transform-origin:0 0;">20,4216</div><div class="t" style="left:243.12px;top:162.56px;font-size:18.4px;color:#f4f4f4;transform:scaleX(0.9150);transform-origin:0 0;">7,5466</div><div class="t" style="left:320.72px;top:162.56px;font-size:18.4px;color:#f4f4f4;transform:scaleX(0.9150);transform-origin:0 0;">11,3611</div><div class="t" style="left:389.23px;top:162.56px;font-size:18.4px;color:#f4f4f4;transform:scaleX(0.9150);transform-origin:0 0;">9,9053</div><div class="t" style="left:466.92px;top:162.56px;font-size:18.4px;color:#f4f4f4;transform:scaleX(0.9150);transform-origin:0 0;">10,0443</div><div class="t" style="left:538.33px;top:162.56px;font-size:18.4px;color:#f4f4f4;transform:scaleX(0.9150);transform-origin:0 0;">5,6276</div><div class="t" style="left:616.36px;top:162.56px;font-size:18.4px;color:#f4f4f4;transform:scaleX(0.9150);transform-origin:0 0;">3,6</div></div><div class="a" style="left:1633px;top:696px;width:17px;height:170px;background:#585858"></div><div class="a" style="left:1635px;top:698px;width:13px;height:16px;background:#7a7a7a;border:1px solid #8c8c8c;border-radius:3px"></div><svg class="a" style="left:1635px;top:701px" width="13" height="10"><path d="M1.5 8 L6.5 2.5 L11.5 8Z" fill="#3c3c3c"/></svg><div class="a" style="left:1636px;top:718px;width:11px;height:106px;background:#3c3c3c;border-radius:6px"></div><div class="a" style="left:1635px;top:848px;width:13px;height:16px;background:#7a7a7a;border:1px solid #8c8c8c;border-radius:3px"></div><svg class="a" style="left:1635px;top:851px" width="13" height="10"><path d="M1.5 2 L6.5 7.5 L11.5 2Z" fill="#3c3c3c"/></svg><div class="a" style="left:999px;top:866px;width:634px;height:19px;background:#585858"></div><div class="a" style="left:1001px;top:868px;width:14px;height:16px;background:#7a7a7a;border:1px solid #8c8c8c;border-radius:3px"></div><svg class="a" style="left:1002px;top:870px" width="12" height="12"><path d="M8.5 1 L3.5 6 L8.5 11Z" fill="#3c3c3c"/></svg><div class="a" style="left:1019px;top:868px;width:546px;height:15px;background:#3c3c3c;border-radius:8px"></div><div class="a" style="left:1616px;top:868px;width:14px;height:16px;background:#7a7a7a;border:1px solid #8c8c8c;border-radius:3px"></div><svg class="a" style="left:1617px;top:870px" width="12" height="12"><path d="M3.5 1 L8.5 6 L3.5 11Z" fill="#3c3c3c"/></svg><div class="a" style="left:1633px;top:866px;width:17px;height:19px;background:#3a3a3a"></div><div class="btn" style="left:4.5px;width:155px"><div class="sw" style="background:#c0c0c0"></div><div class="bl">White</div></div><div class="btn" style="left:162.4px;width:155px"><div class="sw" style="background:#c00000"></div><div class="bl">Red</div></div><div class="btn" style="left:320.3px;width:155px"><div class="sw" style="background:#00c000"></div><div class="bl">Green</div></div><div class="btn" style="left:478.2px;width:155px"><div class="sw" style="background:#0000c0"></div><div class="bl">Blue</div></div><div class="btn" style="left:636.1px;width:155px"><div class="sw" style="background:#00c0c0"></div><div class="bl">Cyan</div></div><div class="btn" style="left:794.0px;width:155px"><div class="sw" style="background:#c000c0"></div><div class="bl">Magenta</div></div><div class="btn" style="left:951.9px;width:155px"><div class="sw" style="background:#c0c000"></div><div class="bl">Yellow</div></div><div class="btn" style="left:1110px;width:155px;background:linear-gradient(#1c1c1c,#262626 50%,#2e2e2e)"><div class="sw" style="background:#fff"></div><div class="bl" style="color:#fff">100W</div></div><div class="a" style="left:1269px;top:929px;width:60px;height:80px;border-radius:6px 6px 0 0;overflow:hidden;background:#333"></div><div class="a" style="left:1269px;top:929px;width:60px;height:23px;border-radius:6px 6px 0 0;background:linear-gradient(#b0b0b0,#8e8e8e)"></div><div class="a" style="left:1269px;top:953px;width:60px;height:53px;background:linear-gradient(#a4a4a4,#6c6c6c)"></div><div class="a" style="left:1290px;top:931px;width:20px;height:20px;border-radius:50%;background:linear-gradient(#7c7c7c,#9a9a9a 60%,#a8a8a8)"></div><svg class="a" style="left:1292px;top:935px" width="16" height="10"><path d="M2 8 L8 2 L14 8Z" fill="#333"/></svg><div class="a" style="left:1279px;top:960px;width:40px;height:39px;border:3.5px solid #222;border-radius:6px;background:linear-gradient(#b4b4b4 0%,#a8a8a8 50%,#9a9a9a 51%,#8e8e8e 100%)"></div><div class="a" style="left:1291px;top:971px;width:17px;height:17px;background:linear-gradient(#1a1a1a 0%,#1a1a1a 50%,#000 51%)"></div><div class="a" style="left:1330px;top:929px;width:58px;height:38px;background:linear-gradient(#b6b6b6,#9c9c9c 45%,#7a7a7a);border-radius:2px 2px 0 0"></div><div class="ci" style="left:1347px;top:936px"></div><svg class="a" style="left:1347px;top:936px" width="25" height="25" viewBox="0 0 25 25"><rect x="7.8" y="7.5" width="9.5" height="9.5" fill="#333"/></svg><div class="a" style="left:1389px;top:929px;width:55px;height:38px;background:linear-gradient(#b6b6b6,#9c9c9c 45%,#7a7a7a);border-radius:2px 2px 0 0"></div><div class="ci" style="left:1404px;top:936px"></div><svg class="a" style="left:1404px;top:936px" width="25" height="25" viewBox="0 0 25 25"><path d="M8.5 7 L18.5 12.5 L8.5 19Z" fill="#2a2a2a"/></svg><div class="a" style="left:1445px;top:929px;width:55px;height:38px;background:linear-gradient(#808080,#4a4a4a);border-radius:2px 2px 0 0"></div><div class="a" style="left:1460px;top:936px;width:25px;height:25px;border-radius:50%;background:linear-gradient(#5e5e5e,#6a6a6a 50%,#7a7a7a)"></div><svg class="a" style="left:1460px;top:936px" width="25" height="25" viewBox="0 0 25 25"><path d="M8 6.5 H5.5 V18.5 H8 M17 6.5 H19.5 V18.5 H17" stroke="#222" stroke-width="2.4" fill="none"/><circle cx="10.5" cy="12.5" r="1.1" fill="#222"/><circle cx="14.5" cy="12.5" r="1.1" fill="#222"/></svg><div class="a" style="left:1502px;top:929px;width:55px;height:38px;background:linear-gradient(#b6b6b6,#9c9c9c 45%,#7a7a7a);border-radius:2px 2px 0 0"></div><div class="ci" style="left:1518px;top:936px"></div><svg class="a" style="left:1518px;top:936px" width="25" height="25" viewBox="0 0 25 25"><ellipse cx="8.6" cy="12" rx="4" ry="2.9" stroke="#2e2e2e" stroke-width="2.3" fill="none"/><ellipse cx="16.6" cy="12" rx="4" ry="2.9" stroke="#2e2e2e" stroke-width="2.3" fill="none"/></svg><div class="a" style="left:1558px;top:929px;width:55px;height:38px;background:linear-gradient(#b6b6b6,#9c9c9c 45%,#7a7a7a);border-radius:2px 2px 0 0"></div><div class="ci" style="left:1574px;top:936px"></div><svg class="a" style="left:1574px;top:936px" width="25" height="25" viewBox="0 0 25 25"><path d="M7.5 13 A5 5 0 0 1 16 8.5" stroke="#2e2e2e" stroke-width="2.6" fill="none"/><path d="M17.5 5.5 L17.8 11 L12.8 9.5Z" fill="#2e2e2e"/><path d="M17.5 12 A5 5 0 0 1 9 16.5" stroke="#2e2e2e" stroke-width="2.6" fill="none"/><path d="M7.5 19.5 L7.2 14 L12.2 15.5Z" fill="#2e2e2e"/></svg><div class="a" style="left:1330px;top:968px;width:170px;height:40px;background:linear-gradient(#b6b6b6,#a0a0a0 45%,#787878)"></div><div class="a" style="left:1502px;top:968px;width:167px;height:40px;background:linear-gradient(#b6b6b6,#a0a0a0 45%,#787878)"></div><div class="a" style="left:1356px;top:975px;width:25px;height:25px;border-radius:50%;background:linear-gradient(#8c8c8c,#9c9c9c 50%,#b0b0b0)"></div><svg class="a" style="left:1356px;top:975px" width="25" height="25"><path d="M11 7 L6.5 12.5 L11 18 M16.5 7 L12 12.5 L16.5 18" stroke="#333" stroke-width="2" fill="none"/></svg><div class="a" style="left:1623px;top:975px;width:25px;height:25px;border-radius:50%;background:linear-gradient(#8c8c8c,#9c9c9c 50%,#b0b0b0)"></div><svg class="a" style="left:1623px;top:975px" width="25" height="25"><path d="M8.5 7 L13 12.5 L8.5 18 M14 7 L18.5 12.5 L14 18" stroke="#333" stroke-width="2" fill="none"/></svg><div class="t" style="left:1400.18px;top:972.38px;font-size:28.5px;color:#333;transform:scaleX(1.0336);transform-origin:0 0;-webkit-text-stroke:0.9px #333;">Back</div><div class="t" style="left:1533.71px;top:972.38px;font-size:28.5px;color:#333;transform:scaleX(1.1529);transform-origin:0 0;-webkit-text-stroke:0.9px #333;">Next</div><svg class="a" style="left:1620px;top:926px" width="42" height="42" viewBox="-21 -21 42 42"><g fill="#000" opacity=".45" transform="translate(1.5,1.5)"><rect x="-3.3" y="-17" width="6.6" height="17" rx="2" transform="rotate(0)"/><rect x="-3.3" y="-17" width="6.6" height="17" rx="2" transform="rotate(60)"/><rect x="-3.3" y="-17" width="6.6" height="17" rx="2" transform="rotate(120)"/><rect x="-3.3" y="-17" width="6.6" height="17" rx="2" transform="rotate(180)"/><rect x="-3.3" y="-17" width="6.6" height="17" rx="2" transform="rotate(240)"/><rect x="-3.3" y="-17" width="6.6" height="17" rx="2" transform="rotate(300)"/></g><g fill="#e31010"><rect x="-3.3" y="-17" width="6.6" height="17" rx="2" transform="rotate(0)"/><rect x="-3.3" y="-17" width="6.6" height="17" rx="2" transform="rotate(60)"/><rect x="-3.3" y="-17" width="6.6" height="17" rx="2" transform="rotate(120)"/><rect x="-3.3" y="-17" width="6.6" height="17" rx="2" transform="rotate(180)"/><rect x="-3.3" y="-17" width="6.6" height="17" rx="2" transform="rotate(240)"/><rect x="-3.3" y="-17" width="6.6" height="17" rx="2" transform="rotate(300)"/></g></svg><div class="a" style="left:1668px;top:926px;width:4px;height:80px;background:#1a1a1a"></div></body></html>
